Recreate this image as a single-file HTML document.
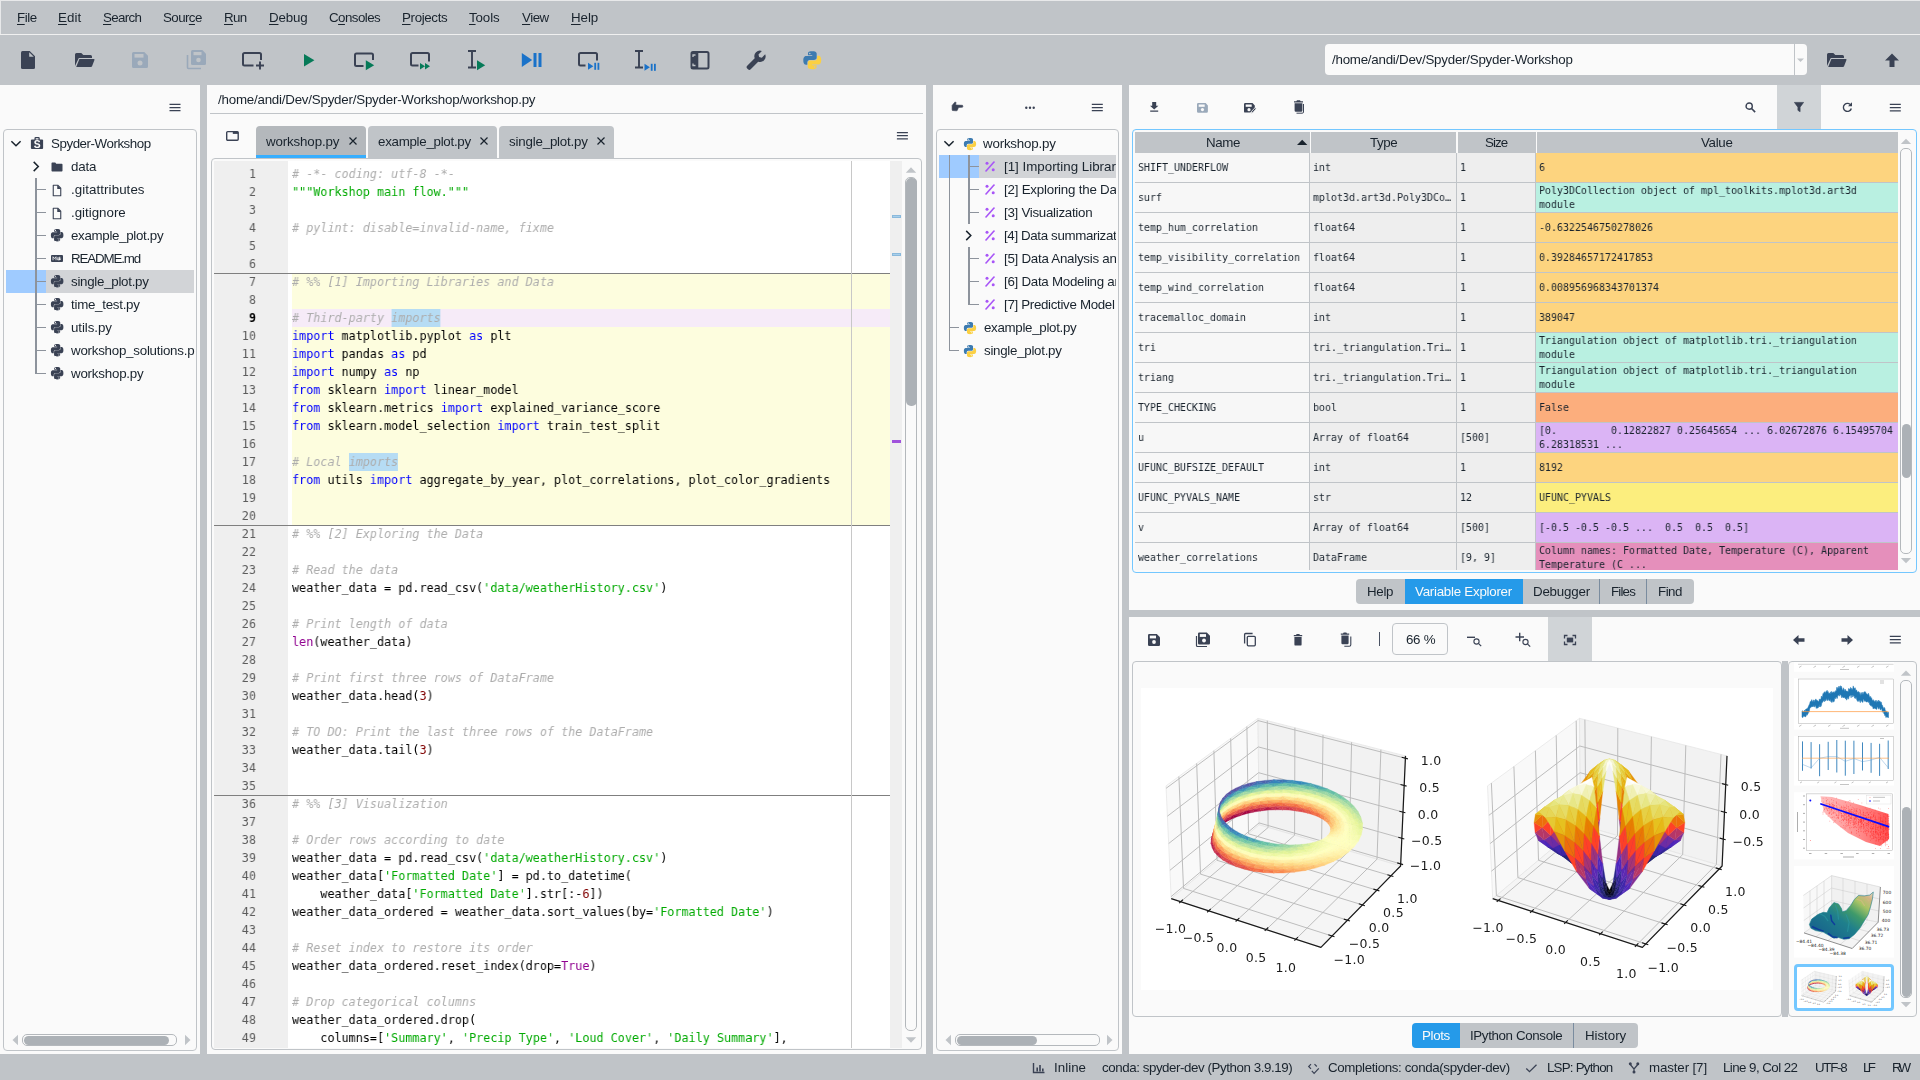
<!DOCTYPE html>
<html lang="en"><head><meta charset="utf-8"><title>Spyder</title>
<style>
html,body{margin:0;padding:0;}
body{width:1920px;height:1080px;overflow:hidden;background:#c0c4c8;font-family:"Liberation Sans","DejaVu Sans",sans-serif;font-size:13.33px;letter-spacing:-0.3px;color:#19232d;}
#app{position:relative;width:1920px;height:1080px;overflow:hidden;background:#c0c4c8;}
.a{position:absolute;}
.pane{position:absolute;background:#fafafa;}
.box{position:absolute;border:1px solid #c0c4c8;border-radius:4px;box-sizing:border-box;background:#fafafa;}
.t{position:absolute;white-space:pre;line-height:16px;height:16px;will-change:transform;}
svg{position:absolute;overflow:visible;}
.mono{font-family:"DejaVu Sans Mono","Liberation Mono",monospace;}
u{text-decoration:underline;text-underline-offset:2px;text-decoration-thickness:1px;}
.code{will-change:transform;font-size:13px;line-height:18px;white-space:pre;color:#000;transform:scaleX(0.9047);transform-origin:0 0;}
.code div{height:18px;}
.lnum{will-change:transform;font-size:13px;line-height:18px;text-align:right;color:#5c5c5c;transform:scaleX(0.9047);transform-origin:100% 0;}
.lnum div{height:18px;}
.c{color:#adadad;font-style:italic;}
.ch{color:#adadad;font-style:italic;background:#b6dcf4;}
.s{color:#00aa00;}
.k{color:#0000ff;}
.b{color:#900090;}
.m{color:#800000;}
.vx{font-size:11px;line-height:16px;transform:scaleX(0.906);transform-origin:0 0;color:#19232d;}
.mono,svg{letter-spacing:0;}
.ch{display:inline-block;height:18px;}

</style></head>
<body>
<div id="app">
<!-- chrome -->
<div class="a" style="left:0px;top:0px;width:1920px;height:1px;background:#e8e9ea;"></div>
<div class="a" style="left:0px;top:0px;width:1px;height:34px;background:#e8e9ea;"></div>
<div class="a" style="left:0px;top:34px;width:1920px;height:1px;background:#f0f0f0;"></div>
<div class="pane" style="left:0;top:85px;width:200px;height:969px"></div>
<div class="pane" style="left:207px;top:85px;width:719px;height:969px"></div>
<div class="pane" style="left:933px;top:85px;width:189px;height:969px"></div>
<div class="pane" style="left:1129px;top:85px;width:791px;height:525px"></div>
<div class="pane" style="left:1129px;top:617px;width:791px;height:437px"></div>
<div class="t" style="left:16.55px;top:9.6px;letter-spacing:-0.428px;"><u>F</u>ile</div>
<div class="t" style="left:58.30px;top:9.6px;letter-spacing:0.077px;"><u>E</u>dit</div>
<div class="t" style="left:103.30px;top:9.6px;letter-spacing:-0.687px;"><u>S</u>earch</div>
<div class="t" style="left:163.40px;top:9.6px;letter-spacing:-0.577px;">Sour<u>c</u>e</div>
<div class="t" style="left:224.30px;top:9.6px;letter-spacing:-0.627px;"><u>R</u>un</div>
<div class="t" style="left:269.30px;top:9.6px;letter-spacing:-0.145px;"><u>D</u>ebug</div>
<div class="t" style="left:329.30px;top:9.6px;letter-spacing:-0.554px;">C<u>o</u>nsoles</div>
<div class="t" style="left:402.30px;top:9.6px;letter-spacing:-0.351px;"><u>P</u>rojects</div>
<div class="t" style="left:469.30px;top:9.6px;letter-spacing:-0.106px;"><u>T</u>ools</div>
<div class="t" style="left:521.80px;top:9.6px;letter-spacing:-0.485px;"><u>V</u>iew</div>
<div class="t" style="left:571.30px;top:9.6px;letter-spacing:-0.074px;"><u>H</u>elp</div>
<!-- toolbar -->
<svg style="left:16px;top:48px;" width="24" height="24" viewBox="0 0 24 24"><path d="M6.500 3h7.200L19 8.300V19.500a1.500 1.500 0 01-1.500 1.500h-11A1.500 1.500 0 015 19.500v-15A1.500 1.500 0 016.500 3z" fill="#3a4254"/><path d="M13.200 4.200v4.600h4.600z" fill="#c0c4c8"/></svg>
<svg style="left:72px;top:48px;" width="24" height="24" viewBox="0 0 24 24"><path d="M3 6.500A1.500 1.500 0 014.500 5h4.800l2 2h7.200A1.500 1.500 0 0120 8.500V10H6.800L3 18z" fill="#3a4254"/><path d="M7.400 11h14.300a.8.800 0 01.75 1.100l-2.400 6.200a1.200 1.200 0 01-1.100.7H4.200z" fill="#3a4254"/></svg>
<svg style="left:128px;top:48px;" width="24" height="24" viewBox="0 0 24 24"><path d="M5.500 4h10.800L20 7.700V18.500a1.500 1.500 0 01-1.500 1.500h-13A1.500 1.500 0 014 18.500v-13A1.500 1.500 0 015.500 4z" fill="#9aa9ba"/><rect x="6.500" y="6" width="9" height="3.600" fill="#c0c4c8"/><circle cx="12" cy="15" r="2.500" fill="#c0c4c8"/></svg>
<svg style="left:184px;top:48px;" width="24" height="24" viewBox="0 0 24 24"><path d="M8.500 2h9.800L22 5.700V15.500a1.500 1.500 0 01-1.500 1.500h-12A1.500 1.500 0 017 15.500v-12A1.500 1.500 0 018.500 2z" fill="#9aa9ba"/><rect x="9.500" y="4" width="8" height="3.200" fill="#c0c4c8"/><circle cx="14.500" cy="12" r="2.300" fill="#c0c4c8"/><path d="M3.500 7v12.500a1 1 0 001 1H17" fill="none" stroke="#9aa9ba" stroke-width="1.600"/></svg>
<svg style="left:240px;top:48px;" width="24" height="24" viewBox="0 0 24 24"><path d="M13.500 17.500H4.500a1.500 1.500 0 01-1.500-1.500V6.500A1.500 1.500 0 014.500 5h15A1.500 1.500 0 0121 6.500V12" fill="none" stroke="#3a4254" stroke-width="2"/><path d="M20 13.500v8M16 17.500h8" stroke="#3a4254" stroke-width="1.900"/></svg>
<svg style="left:296px;top:48px;" width="24" height="24" viewBox="0 0 24 24"><path d="M8 6v12.400l10.400-6.200z" fill="#067a58"/></svg>
<svg style="left:352px;top:48px;" width="24" height="24" viewBox="0 0 24 24"><path d="M11.500 18H4.500A1.500 1.500 0 013 16.500V7A1.500 1.500 0 014.500 5.500h15A1.500 1.500 0 0121 7v5" fill="none" stroke="#3a4254" stroke-width="2"/><path d="M13.800 12.200v10l8.400-5z" fill="#067a58"/></svg>
<svg style="left:408px;top:48px;" width="24" height="24" viewBox="0 0 24 24"><path d="M10.500 17.500H4.500A1.500 1.500 0 013 16V6.500A1.500 1.500 0 014.500 5h15A1.500 1.500 0 0121 6.500v7" fill="none" stroke="#3a4254" stroke-width="2"/><path d="M12 15v6.600l5-3.300zM17 15v6.600l5-3.300z" fill="#067a58"/></svg>
<svg style="left:464px;top:48px;" width="24" height="24" viewBox="0 0 24 24"><path d="M4 3h8M4 19.500h8M8 3v16.500" stroke="#3a4254" stroke-width="1.900" fill="none"/><path d="M13 12.200v10l8.200-5z" fill="#067a58"/></svg>
<svg style="left:520px;top:48px;" width="24" height="24" viewBox="0 0 24 24"><path d="M1.800 5v14l10.400-7z" fill="#1a72c9"/><rect x="13.500" y="5" width="3" height="14" fill="#1a72c9"/><rect x="18.500" y="5" width="3" height="14" fill="#1a72c9"/></svg>
<svg style="left:576px;top:48px;" width="24" height="24" viewBox="0 0 24 24"><path d="M9.500 17.500H4.500A1.500 1.500 0 013 16V6.500A1.500 1.500 0 014.500 5h15A1.500 1.500 0 0121 6.500v6" fill="none" stroke="#3a4254" stroke-width="2"/><path d="M12 14.800v7l5.400-3.500z" fill="#1a72c9"/><rect x="18.300" y="14.800" width="1.800" height="7" fill="#1a72c9"/><rect x="21.500" y="14.800" width="1.800" height="7" fill="#1a72c9"/></svg>
<svg style="left:632px;top:48px;" width="24" height="24" viewBox="0 0 24 24"><path d="M3 3h8M3 19.500h8M7 3v16.500" stroke="#3a4254" stroke-width="1.900" fill="none"/><path d="M12.500 15.800v7l5.400-3.500z" fill="#1a72c9"/><rect x="18.800" y="15.800" width="1.800" height="7" fill="#1a72c9"/><rect x="22" y="15.800" width="1.800" height="7" fill="#1a72c9"/></svg>
<svg style="left:688px;top:48px;" width="24" height="24" viewBox="0 0 24 24"><rect x="3.500" y="4" width="17" height="16.500" rx="1.500" fill="none" stroke="#3a4254" stroke-width="2"/><path d="M3.500 4h6.800v16.500H3.500z" fill="#3a4254"/><path d="M5 9V7h2.500M5 15.500v2h2.500" stroke="#c0c4c8" stroke-width="1.300" fill="none"/></svg>
<svg style="left:744px;top:48px;" width="24" height="24" viewBox="0 0 24 24"><path d="M21.200 6.300l-3.400 3.400-2.700-.6-.6-2.700 3.400-3.400a5.600 5.600 0 00-7.200 7.200L3.200 17.700a1.900 1.900 0 000 2.700l.8.800a1.900 1.900 0 002.700 0l7.500-7.500a5.600 5.600 0 007-7.400z" fill="#3a4254"/></svg>
<svg style="left:801.75px;top:49.75px;" width="20.5" height="20.5" viewBox="0 0 24 24"><path d="M11.9 1.500c-5.200 0-4.900 2.300-4.900 2.300v2.400h5v.8H5s-3.500-.4-3.500 5 3 5.200 3 5.200h1.800v-2.500s-.1-3 3-3h5s2.900 0 2.900-2.800V4.300S17.700 1.500 11.900 1.500zM9.100 3.100a.9.900 0 110 1.800.9.900 0 010-1.800z" fill="#3d7bb0" fill-rule="evenodd"/><path d="M12.100 22.500c5.200 0 4.900-2.300 4.900-2.300v-2.400h-5v-.8h7s3.500.4 3.500-5-3-5.200-3-5.200h-1.800v2.500s.1 3-3 3h-5s-2.900 0-2.900 2.800v4.600s-.5 2.800 5.300 2.800zm2.800-1.600a.9.900 0 110-1.800.9.900 0 010 1.800z" fill="#fbd043" fill-rule="evenodd"/></svg>
<div class="a" style="left:1325px;top:44px;width:482px;height:31px;background:#fafafa;border-radius:4px"></div>
<div class="a" style="left:1794px;top:44px;width:1px;height:31px;background:#c0c4c8;"></div>
<svg style="left:0px;top:0px;" width="1" height="1" viewBox="0 0 1 1"><path d="M1797 58.500h7l-3.500 3.500z" fill="#c0c4c8"/></svg>
<div class="t" style="left:1331.50px;top:51.6px;letter-spacing:-0.239px;">/home/andi/Dev/Spyder/Spyder-Workshop</div>
<svg style="left:1824px;top:48px;" width="24" height="24" viewBox="0 0 24 24"><path d="M3 6.500A1.500 1.500 0 014.500 5h4.800l2 2h7.200A1.500 1.500 0 0120 8.500V10H6.800L3 18z" fill="#3a4254"/><path d="M7.400 11h14.300a.8.800 0 01.75 1.100l-2.400 6.200a1.200 1.200 0 01-1.100.7H4.200z" fill="#3a4254"/></svg>
<svg style="left:0px;top:0px;" width="1" height="1" viewBox="0 0 1 1"><path d="M1892 53.500l7 7h-4.500v6.500h-5v-6.500h-4.500z" fill="#3a4254"/></svg>
<!-- project -->
<svg style="left:0px;top:0px;" width="1" height="1" viewBox="0 0 1 1"><path d="M169.5 104.3h11M169.5 107.5h11M169.5 110.7h11" stroke="#3a4254" stroke-width="1.25" fill="none"/></svg>
<div class="box" style="left:3px;top:129px;width:194px;height:922px"></div>
<div class="a" style="left:6px;top:270px;width:40px;height:23px;background:#9fcbff;"></div>
<div class="a" style="left:46px;top:270px;width:148px;height:23px;background:#d2d4d7;"></div>
<div class="a" style="left:35.3px;top:178px;width:1.4px;height:196px;background:#8d939c;"></div>
<svg style="left:0px;top:0px;" width="1" height="1" viewBox="0 0 1 1"><path d="M11.4 141.2L16 145.8L20.6 141.2" stroke="#19232d" stroke-width="1.5" fill="none"/></svg>
<svg style="left:0px;top:0px;" width="1" height="1" viewBox="0 0 1 1"><rect x="30.900" y="139.500" width="12.200" height="9.600" rx="1" fill="#3a4254"/><rect x="35.100" y="137.700" width="4" height="3" rx=".6" fill="none" stroke="#3a4254" stroke-width="1.300"/><text x="37.100" y="148" font-size="10.300" font-weight="bold" text-anchor="middle" fill="#fafafa" font-family="Liberation Sans,sans-serif">S</text></svg>
<div class="t" style="left:50.70px;top:135.8px;letter-spacing:-0.446px;">Spyder-Workshop</div>
<svg style="left:0px;top:0px;" width="1" height="1" viewBox="0 0 1 1"><path d="M33.7 161.9L38.3 166.5L33.7 171.1" stroke="#19232d" stroke-width="1.5" fill="none"/></svg>
<svg style="left:51px;top:160.5px;" width="12" height="12" viewBox="0 0 24 24"><path d="M1 4.500C1 3.700 1.700 3 2.500 3h6l2 2.500h11c.8 0 1.500.700 1.500 1.500v12.500c0 .800-.7 1.500-1.500 1.500h-19C1.700 21 1 20.300 1 19.500z" fill="#3a4254"/></svg>
<div class="t" style="left:70.70px;top:158.8px;letter-spacing:-0.184px;">data</div>
<div class="a" style="left:36px;top:188.8px;width:10px;height:1.4px;background:#8d939c;"></div>
<svg style="left:52px;top:183.5px;" width="10" height="13" viewBox="0 0 20 24"><path d="M2.500 1.500h9l6 6v15h-15z" fill="none" stroke="#3a4254" stroke-width="2.200" stroke-linejoin="round"/><path d="M10.500 1.500v7.500h7.500z" fill="#3a4254"/></svg>
<div class="t" style="left:70.70px;top:181.8px;letter-spacing:0.072px;">.gitattributes</div>
<div class="a" style="left:36px;top:211.8px;width:10px;height:1.4px;background:#8d939c;"></div>
<svg style="left:52px;top:206.5px;" width="10" height="13" viewBox="0 0 20 24"><path d="M2.500 1.500h9l6 6v15h-15z" fill="none" stroke="#3a4254" stroke-width="2.200" stroke-linejoin="round"/><path d="M10.500 1.500v7.500h7.500z" fill="#3a4254"/></svg>
<div class="t" style="left:70.70px;top:204.8px;letter-spacing:-0.005px;">.gitignore</div>
<div class="a" style="left:36px;top:234.8px;width:10px;height:1.4px;background:#8d939c;"></div>
<svg style="left:49.85px;top:228.35px;" width="14.3" height="14.3" viewBox="0 0 24 24"><path d="M11.9 1.5c-5.2 0-4.9 2.3-4.9 2.3v2.4h5v.8H5s-3.5-.4-3.5 5 3 5.200 3 5.200h1.800v-2.500s-.1-3 3-3h5s2.900 0 2.900-2.800V4.300S17.700 1.500 11.900 1.500zM9.100 3.100a.900.900 0 110 1.800.900.900 0 010-1.800zM12.100 22.500c5.200 0 4.900-2.300 4.900-2.300v-2.400h-5v-.8h7s3.500.4 3.500-5-3-5.200-3-5.200h-1.800v2.500s.1 3-3 3h-5s-2.900 0-2.900 2.800v4.600s-.5 2.800 5.300 2.800zm2.800-1.600a.900.900 0 110-1.800.900.900 0 010 1.800z" fill="#3a4254" fill-rule="evenodd"/></svg>
<div class="t" style="left:70.70px;top:227.8px;letter-spacing:-0.319px;">example_plot.py</div>
<div class="a" style="left:36px;top:257.8px;width:10px;height:1.4px;background:#8d939c;"></div>
<svg style="left:51px;top:255.0px;" width="12" height="7" viewBox="0 0 24 14"><rect x="0" y="0" width="24" height="14" rx="2" fill="#3a4254"/><path d="M4 10.500v-7l3 3.500 3-3.500v7M14 4v4M12 7l2.500 3.500L17 7M18.500 4" stroke="#fafafa" stroke-width="1.600" fill="none"/><path d="M16.500 3.500v4h-2l3 3.500 3-3.500h-2v-4z" fill="#fafafa"/></svg>
<div class="t" style="left:70.70px;top:250.8px;letter-spacing:-1.144px;">README.md</div>
<div class="a" style="left:36px;top:280.8px;width:10px;height:1.4px;background:#8d939c;"></div>
<svg style="left:49.85px;top:274.35px;" width="14.3" height="14.3" viewBox="0 0 24 24"><path d="M11.9 1.5c-5.2 0-4.9 2.3-4.9 2.3v2.4h5v.8H5s-3.5-.4-3.5 5 3 5.200 3 5.200h1.800v-2.500s-.1-3 3-3h5s2.900 0 2.900-2.800V4.300S17.700 1.500 11.900 1.500zM9.100 3.100a.900.900 0 110 1.800.900.900 0 010-1.800zM12.100 22.500c5.200 0 4.900-2.300 4.900-2.300v-2.400h-5v-.8h7s3.500.4 3.500-5-3-5.200-3-5.200h-1.800v2.500s.1 3-3 3h-5s-2.900 0-2.900 2.800v4.600s-.5 2.800 5.300 2.800zm2.800-1.600a.900.900 0 110-1.800.900.900 0 010 1.800z" fill="#3a4254" fill-rule="evenodd"/></svg>
<div class="t" style="left:70.70px;top:273.8px;letter-spacing:-0.278px;">single_plot.py</div>
<div class="a" style="left:36px;top:303.8px;width:10px;height:1.4px;background:#8d939c;"></div>
<svg style="left:49.85px;top:297.35px;" width="14.3" height="14.3" viewBox="0 0 24 24"><path d="M11.9 1.5c-5.2 0-4.9 2.3-4.9 2.3v2.4h5v.8H5s-3.5-.4-3.5 5 3 5.200 3 5.200h1.800v-2.500s-.1-3 3-3h5s2.900 0 2.900-2.800V4.300S17.700 1.500 11.900 1.500zM9.100 3.100a.900.900 0 110 1.800.900.900 0 010-1.800zM12.100 22.500c5.200 0 4.900-2.300 4.900-2.300v-2.400h-5v-.8h7s3.500.4 3.500-5-3-5.200-3-5.200h-1.800v2.500s.1 3-3 3h-5s-2.900 0-2.900 2.800v4.600s-.5 2.800 5.300 2.800zm2.800-1.600a.900.900 0 110-1.800.900.900 0 010 1.800z" fill="#3a4254" fill-rule="evenodd"/></svg>
<div class="t" style="left:70.70px;top:296.8px;letter-spacing:-0.269px;">time_test.py</div>
<div class="a" style="left:36px;top:326.8px;width:10px;height:1.4px;background:#8d939c;"></div>
<svg style="left:49.85px;top:320.35px;" width="14.3" height="14.3" viewBox="0 0 24 24"><path d="M11.9 1.5c-5.2 0-4.9 2.3-4.9 2.3v2.4h5v.8H5s-3.5-.4-3.5 5 3 5.200 3 5.200h1.800v-2.500s-.1-3 3-3h5s2.900 0 2.900-2.800V4.300S17.700 1.500 11.900 1.500zM9.100 3.100a.900.900 0 110 1.800.900.900 0 010-1.800zM12.100 22.500c5.200 0 4.900-2.300 4.900-2.300v-2.400h-5v-.8h7s3.500.4 3.500-5-3-5.200-3-5.200h-1.800v2.500s.1 3-3 3h-5s-2.900 0-2.900 2.800v4.600s-.5 2.800 5.300 2.800zm2.800-1.600a.900.900 0 110-1.800.900.900 0 010 1.800z" fill="#3a4254" fill-rule="evenodd"/></svg>
<div class="t" style="left:70.70px;top:319.8px;letter-spacing:-0.083px;">utils.py</div>
<div class="a" style="left:36px;top:349.8px;width:10px;height:1.4px;background:#8d939c;"></div>
<svg style="left:49.85px;top:343.35px;" width="14.3" height="14.3" viewBox="0 0 24 24"><path d="M11.9 1.5c-5.2 0-4.9 2.3-4.9 2.3v2.4h5v.8H5s-3.5-.4-3.5 5 3 5.200 3 5.200h1.800v-2.500s-.1-3 3-3h5s2.900 0 2.900-2.800V4.300S17.700 1.500 11.900 1.500zM9.100 3.100a.900.900 0 110 1.800.900.900 0 010-1.800zM12.100 22.500c5.200 0 4.900-2.300 4.900-2.300v-2.400h-5v-.8h7s3.500.4 3.500-5-3-5.200-3-5.200h-1.800v2.500s.1 3-3 3h-5s-2.900 0-2.900 2.800v4.600s-.5 2.800 5.300 2.800zm2.800-1.600a.900.900 0 110-1.800.900.900 0 010 1.800z" fill="#3a4254" fill-rule="evenodd"/></svg>
<div class="t" style="left:70.70px;top:342.8px;letter-spacing:-0.241px;">workshop_solutions.p</div>
<div class="a" style="left:36px;top:372.8px;width:10px;height:1.4px;background:#8d939c;"></div>
<svg style="left:49.85px;top:366.35px;" width="14.3" height="14.3" viewBox="0 0 24 24"><path d="M11.9 1.5c-5.2 0-4.9 2.3-4.9 2.3v2.4h5v.8H5s-3.5-.4-3.5 5 3 5.200 3 5.200h1.800v-2.500s-.1-3 3-3h5s2.900 0 2.900-2.800V4.300S17.700 1.500 11.900 1.500zM9.100 3.100a.900.900 0 110 1.800.900.900 0 010-1.800zM12.100 22.500c5.200 0 4.900-2.300 4.900-2.300v-2.400h-5v-.8h7s3.500.4 3.500-5-3-5.200-3-5.200h-1.800v2.500s.1 3-3 3h-5s-2.900 0-2.900 2.800v4.600s-.5 2.800 5.300 2.800zm2.800-1.600a.900.900 0 110-1.800.900.900 0 010 1.800z" fill="#3a4254" fill-rule="evenodd"/></svg>
<div class="t" style="left:70.70px;top:365.8px;letter-spacing:-0.213px;">workshop.py</div>
<svg style="left:0px;top:0px;" width="1" height="1" viewBox="0 0 1 1"><path d="M12.500 1040l5.500-5.200v10.400z" fill="#c0c4c8"/><path d="M190.500 1040l-5.500-5.200v10.400z" fill="#c0c4c8"/></svg>
<div class="a" style="left:22px;top:1034px;width:155px;height:12px;border:1px solid #b4b8bc;border-radius:5px;box-sizing:border-box;background:#fafafa"></div>
<div class="a" style="left:23.500px;top:1035.500px;width:145px;height:9px;border-radius:4.500px;background:#acb1b6"></div>
<!-- editor -->
<div class="t" style="left:218.36px;top:92px;letter-spacing:-0.217px;">/home/andi/Dev/Spyder/Spyder-Workshop/workshop.py</div>
<div class="a" style="left:210px;top:113px;width:713px;height:1px;background:#c0c4c8;"></div>
<svg style="left:225px;top:130px;" width="14" height="12" viewBox="0 0 14 12"><rect x="1.700" y="1.600" width="11.500" height="8.700" rx="1" fill="none" stroke="#3a4254" stroke-width="1.400"/><rect x="7.800" y="1.600" width="5.400" height="2.300" fill="#3a4254"/></svg>
<div class="a" style="left:256px;top:126px;width:110px;height:32px;background:#b4b8bc;border-radius:4px 4px 0 0"></div>
<div class="a" style="left:256px;top:155px;width:110px;height:3px;background:#37aefe;"></div>
<div class="t" style="left:266.20px;top:133.5px;letter-spacing:-0.143px;">workshop.py</div>
<svg style="left:0px;top:0px;" width="1" height="1" viewBox="0 0 1 1"><path d="M349.5 137.5l7 7M356.5 137.5l-7 7" stroke="#19232d" stroke-width="1.200" fill="none"/></svg>
<div class="a" style="left:368px;top:126px;width:129px;height:32px;background:#c0c4c8;border-radius:4px 4px 0 0"></div>
<div class="t" style="left:377.70px;top:133.5px;letter-spacing:-0.283px;">example_plot.py</div>
<svg style="left:0px;top:0px;" width="1" height="1" viewBox="0 0 1 1"><path d="M480.5 137.5l7 7M487.5 137.5l-7 7" stroke="#19232d" stroke-width="1.200" fill="none"/></svg>
<div class="a" style="left:499px;top:126px;width:115px;height:32px;background:#c0c4c8;border-radius:4px 4px 0 0"></div>
<div class="t" style="left:508.80px;top:133.5px;letter-spacing:-0.194px;">single_plot.py</div>
<svg style="left:0px;top:0px;" width="1" height="1" viewBox="0 0 1 1"><path d="M597.5 137.5l7 7M604.5 137.5l-7 7" stroke="#19232d" stroke-width="1.200" fill="none"/></svg>
<svg style="left:0px;top:0px;" width="1" height="1" viewBox="0 0 1 1"><path d="M896.9 132.5h11M896.9 135.7h11M896.9 138.89999999999998h11" stroke="#3a4254" stroke-width="1.25" fill="none"/></svg>
<div class="box" style="left:211px;top:158px;width:711px;height:892px"></div>
<div class="a" style="left:214px;top:161px;width:74px;height:887px;background:#efefef;"></div>
<div class="a" style="left:288px;top:161px;width:602px;height:887px;background:#ffffff;"></div>
<div class="a" style="left:890px;top:161px;width:12px;height:887px;background:#efefef;"></div>
<div class="a" style="left:292px;top:273px;width:598px;height:252px;background:#fdfdde;"></div>
<div class="a" style="left:292px;top:309px;width:598px;height:18px;background:#f6ebf8;"></div>
<div class="a" style="left:214px;top:273px;width:676px;height:1px;background:#7f7f7f;"></div>
<div class="a" style="left:214px;top:525px;width:676px;height:1px;background:#7f7f7f;"></div>
<div class="a" style="left:214px;top:795px;width:676px;height:1px;background:#7f7f7f;"></div>
<div class="a" style="left:851px;top:161px;width:1px;height:887px;background:#c8c8c8;"></div>
<div class="a" style="left:892px;top:215px;width:9px;height:3px;background:#a9cfea;box-sizing:border-box;border:0.500px solid #8ab9dc"></div>
<div class="a" style="left:892px;top:253px;width:9px;height:3px;background:#a9cfea;box-sizing:border-box;border:0.500px solid #8ab9dc"></div>
<div class="a" style="left:892px;top:440px;width:9px;height:3px;background:#a052dc;"></div>
<svg style="left:0px;top:0px;" width="1" height="1" viewBox="0 0 1 1"><path d="M911 167.200l5.200 5.500h-10.400z" fill="#c0c4c8"/><path d="M911 1042.800l5.200-5.500h-10.400z" fill="#c0c4c8"/></svg>
<div class="a" style="left:905px;top:177px;width:12px;height:854px;border:1px solid #b4b8bc;border-radius:5px;box-sizing:border-box;background:#fafafa"></div>
<div class="a" style="left:905.500px;top:177.500px;width:11px;height:228px;border-radius:5px;background:#acb1b6"></div>
<div class="a mono lnum" style="left:214px;top:165px;width:42px;"><div>1</div><div>2</div><div>3</div><div>4</div><div>5</div><div>6</div><div>7</div><div>8</div><div style="color:#000;font-weight:bold">9</div><div>10</div><div>11</div><div>12</div><div>13</div><div>14</div><div>15</div><div>16</div><div>17</div><div>18</div><div>19</div><div>20</div><div>21</div><div>22</div><div>23</div><div>24</div><div>25</div><div>26</div><div>27</div><div>28</div><div>29</div><div>30</div><div>31</div><div>32</div><div>33</div><div>34</div><div>35</div><div>36</div><div>37</div><div>38</div><div>39</div><div>40</div><div>41</div><div>42</div><div>43</div><div>44</div><div>45</div><div>46</div><div>47</div><div>48</div><div>49</div></div>
<div class="a mono code" style="left:292px;top:165px;"><div><span class="c"># -*- coding: utf-8 -*-</span></div><div><span class="s">"""Workshop main flow."""</span></div><div></div><div><span class="c"># pylint: disable=invalid-name, fixme</span></div><div></div><div></div><div><span class="c"># %% [1] Importing Libraries and Data</span></div><div></div><div><span class="c"># Third-party </span><span class="ch">imports</span></div><div><span class="k">import</span> matplotlib.pyplot <span class="k">as</span> plt</div><div><span class="k">import</span> pandas <span class="k">as</span> pd</div><div><span class="k">import</span> numpy <span class="k">as</span> np</div><div><span class="k">from</span> sklearn <span class="k">import</span> linear_model</div><div><span class="k">from</span> sklearn.metrics <span class="k">import</span> explained_variance_score</div><div><span class="k">from</span> sklearn.model_selection <span class="k">import</span> train_test_split</div><div></div><div><span class="c"># Local </span><span class="ch">imports</span></div><div><span class="k">from</span> utils <span class="k">import</span> aggregate_by_year, plot_correlations, plot_color_gradients</div><div></div><div></div><div><span class="c"># %% [2] Exploring the Data</span></div><div></div><div><span class="c"># Read the data</span></div><div>weather_data = pd.read_csv(<span class="s">'data/weatherHistory.csv'</span>)</div><div></div><div><span class="c"># Print length of data</span></div><div><span class="b">len</span>(weather_data)</div><div></div><div><span class="c"># Print first three rows of DataFrame</span></div><div>weather_data.head(<span class="m">3</span>)</div><div></div><div><span class="c"># TO DO: Print the last three rows of the DataFrame</span></div><div>weather_data.tail(<span class="m">3</span>)</div><div></div><div></div><div><span class="c"># %% [3] Visualization</span></div><div></div><div><span class="c"># Order rows according to date</span></div><div>weather_data = pd.read_csv(<span class="s">'data/weatherHistory.csv'</span>)</div><div>weather_data[<span class="s">'Formatted Date'</span>] = pd.to_datetime(</div><div>    weather_data[<span class="s">'Formatted Date'</span>].str[:-<span class="m">6</span>])</div><div>weather_data_ordered = weather_data.sort_values(by=<span class="s">'Formatted Date'</span>)</div><div></div><div><span class="c"># Reset index to restore its order</span></div><div>weather_data_ordered.reset_index(drop=<span class="b">True</span>)</div><div></div><div><span class="c"># Drop categorical columns</span></div><div>weather_data_ordered.drop(</div><div>    columns=[<span class="s">'Summary'</span>, <span class="s">'Precip Type'</span>, <span class="s">'Loud Cover'</span>, <span class="s">'Daily Summary'</span>],</div></div>
<!-- outline -->
<svg style="left:0px;top:0px;" width="1" height="1" viewBox="0 0 1 1"><polygon points="955.3,101.9 956.0,102.6 955.7,105.0 962.5,105.3 962.9,106.3 962.5,107.2 958.5,107.4 957.2,110.5 956.2,110.8 952.4,110.5 952.1,109.5 952.1,105.4 954.8,102.2" fill="#3a4254" stroke="#3a4254" stroke-width="0.6" stroke-linejoin="round"/></svg>
<svg style="left:0px;top:0px;" width="1" height="1" viewBox="0 0 1 1"><circle cx="1026.300" cy="107.700" r="1.200" fill="#3a4254"/><circle cx="1030" cy="107.700" r="1.200" fill="#3a4254"/><circle cx="1033.700" cy="107.700" r="1.200" fill="#3a4254"/></svg>
<svg style="left:0px;top:0px;" width="1" height="1" viewBox="0 0 1 1"><path d="M1091.8 104.3h11M1091.8 107.5h11M1091.8 110.7h11" stroke="#3a4254" stroke-width="1.25" fill="none"/></svg>
<div class="box" style="left:936px;top:129px;width:183px;height:922px"></div>
<div class="a" style="left:939px;top:155px;width:40px;height:23px;background:#9fcbff;"></div>
<div class="a" style="left:979px;top:155px;width:137px;height:23px;background:#d2d4d7;"></div>
<div class="a" style="left:948.5px;top:155px;width:1.4px;height:196px;background:#8d939c;"></div>
<div class="a" style="left:968.3px;top:155px;width:1.4px;height:69px;background:#8d939c;"></div>
<div class="a" style="left:968.3px;top:247px;width:1.4px;height:58px;background:#8d939c;"></div>
<svg style="left:0px;top:0px;" width="1" height="1" viewBox="0 0 1 1"><path d="M944.4 141.2L949 145.8L953.6 141.2" stroke="#19232d" stroke-width="1.5" fill="none"/></svg>
<svg style="left:963.0px;top:136.5px;" width="14" height="14" viewBox="0 0 24 24"><path d="M11.9 1.500c-5.200 0-4.900 2.300-4.900 2.300v2.400h5v.8H5s-3.500-.4-3.500 5 3 5.200 3 5.200h1.800v-2.500s-.1-3 3-3h5s2.900 0 2.900-2.800V4.300S17.700 1.500 11.900 1.500zM9.100 3.100a.9.900 0 110 1.800.9.900 0 010-1.800z" fill="#3d7bb0" fill-rule="evenodd"/><path d="M12.100 22.500c5.200 0 4.900-2.300 4.900-2.300v-2.400h-5v-.8h7s3.500.4 3.500-5-3-5.200-3-5.200h-1.800v2.500s.1 3-3 3h-5s-2.900 0-2.900 2.800v4.600s-.5 2.800 5.300 2.800zm2.800-1.600a.9.900 0 110-1.800.9.900 0 010 1.800z" fill="#fbd043" fill-rule="evenodd"/></svg>
<div class="t" style="left:983.30px;top:135.8px;letter-spacing:-0.193px;">workshop.py</div>
<div class="a" style="left:937px;top:130px;width:179px;height:400px;overflow:hidden">
<div class="t" style="left:66.80px;top:28.8px;letter-spacing:0.000px;">[1] Importing Librar</div>
<div class="t" style="left:66.80px;top:51.8px;letter-spacing:-0.218px;">[2] Exploring the Dat</div>
<div class="t" style="left:66.80px;top:74.8px;letter-spacing:-0.282px;">[3] Visualization</div>
<div class="t" style="left:66.80px;top:97.8px;letter-spacing:-0.366px;">[4] Data summarizati</div>
<div class="t" style="left:66.80px;top:120.8px;letter-spacing:-0.260px;">[5] Data Analysis and</div>
<div class="t" style="left:66.80px;top:143.8px;letter-spacing:-0.271px;">[6] Data Modeling an</div>
<div class="t" style="left:66.80px;top:166.8px;letter-spacing:-0.323px;">[7] Predictive Model</div>
</div>
<div class="a" style="left:969px;top:165.8px;width:10px;height:1.4px;background:#8d939c;"></div>
<svg style="left:0px;top:0px;" width="1" height="1" viewBox="0 0 1 1"><path d="M994 162.0L986 171.0" stroke="#a855f7" stroke-width="1.600" fill="none" stroke-linecap="round"/><circle cx="987" cy="163.2" r="1.500" fill="#a855f7"/><circle cx="993.2" cy="169.8" r="1.500" fill="#a855f7"/></svg>
<div class="a" style="left:969px;top:188.8px;width:10px;height:1.4px;background:#8d939c;"></div>
<svg style="left:0px;top:0px;" width="1" height="1" viewBox="0 0 1 1"><path d="M994 185.0L986 194.0" stroke="#a855f7" stroke-width="1.600" fill="none" stroke-linecap="round"/><circle cx="987" cy="186.2" r="1.500" fill="#a855f7"/><circle cx="993.2" cy="192.8" r="1.500" fill="#a855f7"/></svg>
<div class="a" style="left:969px;top:211.8px;width:10px;height:1.4px;background:#8d939c;"></div>
<svg style="left:0px;top:0px;" width="1" height="1" viewBox="0 0 1 1"><path d="M994 208.0L986 217.0" stroke="#a855f7" stroke-width="1.600" fill="none" stroke-linecap="round"/><circle cx="987" cy="209.2" r="1.500" fill="#a855f7"/><circle cx="993.2" cy="215.8" r="1.500" fill="#a855f7"/></svg>
<svg style="left:0px;top:0px;" width="1" height="1" viewBox="0 0 1 1"><path d="M966.2 230.9L970.8 235.5L966.2 240.1" stroke="#19232d" stroke-width="1.5" fill="none"/></svg>
<svg style="left:0px;top:0px;" width="1" height="1" viewBox="0 0 1 1"><path d="M994 231.0L986 240.0" stroke="#a855f7" stroke-width="1.600" fill="none" stroke-linecap="round"/><circle cx="987" cy="232.2" r="1.500" fill="#a855f7"/><circle cx="993.2" cy="238.8" r="1.500" fill="#a855f7"/></svg>
<div class="a" style="left:969px;top:257.8px;width:10px;height:1.4px;background:#8d939c;"></div>
<svg style="left:0px;top:0px;" width="1" height="1" viewBox="0 0 1 1"><path d="M994 254.0L986 263.0" stroke="#a855f7" stroke-width="1.600" fill="none" stroke-linecap="round"/><circle cx="987" cy="255.2" r="1.500" fill="#a855f7"/><circle cx="993.2" cy="261.8" r="1.500" fill="#a855f7"/></svg>
<div class="a" style="left:969px;top:280.8px;width:10px;height:1.4px;background:#8d939c;"></div>
<svg style="left:0px;top:0px;" width="1" height="1" viewBox="0 0 1 1"><path d="M994 277.0L986 286.0" stroke="#a855f7" stroke-width="1.600" fill="none" stroke-linecap="round"/><circle cx="987" cy="278.2" r="1.500" fill="#a855f7"/><circle cx="993.2" cy="284.8" r="1.500" fill="#a855f7"/></svg>
<div class="a" style="left:969px;top:303.8px;width:10px;height:1.4px;background:#8d939c;"></div>
<svg style="left:0px;top:0px;" width="1" height="1" viewBox="0 0 1 1"><path d="M994 300.0L986 309.0" stroke="#a855f7" stroke-width="1.600" fill="none" stroke-linecap="round"/><circle cx="987" cy="301.2" r="1.500" fill="#a855f7"/><circle cx="993.2" cy="307.8" r="1.500" fill="#a855f7"/></svg>
<div class="a" style="left:949px;top:326.8px;width:10px;height:1.4px;background:#8d939c;"></div>
<svg style="left:963.0px;top:320.5px;" width="14" height="14" viewBox="0 0 24 24"><path d="M11.9 1.500c-5.200 0-4.900 2.300-4.900 2.300v2.400h5v.8H5s-3.500-.4-3.500 5 3 5.200 3 5.200h1.800v-2.500s-.1-3 3-3h5s2.900 0 2.900-2.800V4.300S17.700 1.500 11.900 1.500zM9.100 3.100a.9.900 0 110 1.800.9.900 0 010-1.800z" fill="#3d7bb0" fill-rule="evenodd"/><path d="M12.100 22.500c5.200 0 4.900-2.300 4.900-2.300v-2.400h-5v-.8h7s3.500.4 3.500-5-3-5.200-3-5.200h-1.800v2.500s.1 3-3 3h-5s-2.900 0-2.900 2.800v4.600s-.5 2.800 5.300 2.800zm2.800-1.600a.9.900 0 110-1.800.9.900 0 010 1.800z" fill="#fbd043" fill-rule="evenodd"/></svg>
<div class="t" style="left:983.50px;top:319.8px;letter-spacing:-0.312px;">example_plot.py</div>
<div class="a" style="left:949px;top:349.8px;width:10px;height:1.4px;background:#8d939c;"></div>
<svg style="left:963.0px;top:343.5px;" width="14" height="14" viewBox="0 0 24 24"><path d="M11.9 1.500c-5.200 0-4.900 2.300-4.900 2.300v2.400h5v.8H5s-3.500-.4-3.500 5 3 5.200 3 5.200h1.800v-2.500s-.1-3 3-3h5s2.900 0 2.900-2.800V4.300S17.700 1.500 11.900 1.500zM9.100 3.100a.9.900 0 110 1.800.9.900 0 010-1.800z" fill="#3d7bb0" fill-rule="evenodd"/><path d="M12.100 22.500c5.200 0 4.900-2.300 4.900-2.300v-2.400h-5v-.8h7s3.500.4 3.500-5-3-5.200-3-5.200h-1.800v2.500s.1 3-3 3h-5s-2.900 0-2.900 2.800v4.600s-.5 2.800 5.300 2.800zm2.800-1.600a.9.900 0 110-1.800.9.900 0 010 1.800z" fill="#fbd043" fill-rule="evenodd"/></svg>
<div class="t" style="left:983.50px;top:342.8px;letter-spacing:-0.278px;">single_plot.py</div>
<svg style="left:0px;top:0px;" width="1" height="1" viewBox="0 0 1 1"><path d="M945.500 1040l5.500-5.200v10.400z" fill="#c0c4c8"/><path d="M1112.500 1040l-5.500-5.200v10.400z" fill="#c0c4c8"/></svg>
<div class="a" style="left:955px;top:1034px;width:145px;height:12px;border:1px solid #b4b8bc;border-radius:5px;box-sizing:border-box;background:#fafafa"></div>
<div class="a" style="left:956.500px;top:1035.500px;width:80px;height:9px;border-radius:4.500px;background:#acb1b6"></div>
<!-- varexp -->
<svg style="left:1149.7px;top:102.2px;" width="8.4" height="9.8" viewBox="0 0 8.4 9.8"><path d="M2.200 0h4v3.700h2.200L4.200 7.400 0 3.700h2.200zM0.200 8.400h8v1.400h-8z" fill="#3a4254"/></svg>
<svg style="left:1196.6px;top:103.1px;" width="10.9" height="9.7" viewBox="0 0 10.9 9.7"><path d="M1.200 0h7.500L10.9 2.600v5.8999999999999995a1.200 1.200 0 01-1.200 1.200H1.200A1.200 1.200 0 010 8.5V1.200A1.200 1.200 0 011.200 0z" fill="#9aa9ba"/><rect x="1.700" y="1.500" width="6" height="2.300" fill="#fafafa"/><circle cx="5.45" cy="6.6" r="1.600" fill="#fafafa"/></svg>
<svg style="left:1243.8px;top:103.1px;" width="12" height="10.5" viewBox="0 0 12 10.5"><path d="M1.200 0h7.300L10.800 2.400v2.400L6.300 9.600H1.200A1.200 1.200 0 010 8.400V1.200A1.200 1.200 0 011.200 0z" fill="#3a4254"/><rect x="1.700" y="1.500" width="6" height="2.300" fill="#fafafa"/><circle cx="5" cy="6.700" r="1.600" fill="#fafafa"/><path d="M7.300 10.400l.4-2.200 3.400-3.500 1.100 1.100-3.300 3.600z" fill="#3a4254" stroke="#fafafa" stroke-width=".7"/></svg>
<svg style="left:1292.5px;top:100.2px;" width="11" height="13.6" viewBox="0 0 11 13.6"><path d="M1 1.200h2.300l.7-1h3l.7 1h2.300v1.400H1zM1.600 3.300h7.800v7.300a1.200 1.200 0 01-1.200 1.200H2.800a1.200 1.200 0 01-1.200-1.200z" fill="#3a4254"/><path d="M10.500 4v8a1.200 1.200 0 01-1.200 1.200H3.500" fill="none" stroke="#3a4254" stroke-width="1"/></svg>
<svg style="left:1745.3px;top:101.8px;" width="10.8" height="10.5" viewBox="0 0 12.400 12.100"><circle cx="4.800" cy="4.800" r="3.600" fill="none" stroke="#3a4254" stroke-width="1.600"/><path d="M7.500 7.500l4.200 4.200" stroke="#3a4254" stroke-width="1.800"/></svg>
<div class="a" style="left:1777px;top:85px;width:44px;height:44px;background:#d0d4d7;"></div>
<svg style="left:1794px;top:101.9px;" width="10" height="10.4" viewBox="0 0 12 12.500"><path d="M0.500 0.500h11L7.300 6.200v5.500l-2.600-1.700V6.200z" fill="#3a4254" stroke="#3a4254" stroke-width=".8" stroke-linejoin="round"/></svg>
<svg style="left:1841.6px;top:101.9px;" width="10.6" height="9.8" viewBox="0 0 12 11.400"><path d="M10.300 4A4.700 4.700 0 1010.700 7.500" fill="none" stroke="#3a4254" stroke-width="1.600"/><path d="M11.500 0.300v4.700H6.800z" fill="#3a4254"/></svg>
<svg style="left:0px;top:0px;" width="1" height="1" viewBox="0 0 1 1"><path d="M1889.8 104.39999999999999h11M1889.8 107.6h11M1889.8 110.8h11" stroke="#3a4254" stroke-width="1.25" fill="none"/></svg>
<div class="box" style="left:1132px;top:129px;width:785px;height:444px;border-color:#73c7ff"></div>
<div class="a" style="left:1135px;top:132px;width:175px;height:21px;background:#c0c4c8"></div>
<div class="t" style="left:1205.55px;top:134.5px;letter-spacing:-0.404px;">Name</div>
<div class="a" style="left:1311px;top:132px;width:145px;height:21px;background:#c0c4c8"></div>
<div class="t" style="left:1369.80px;top:134.5px;letter-spacing:-0.402px;">Type</div>
<div class="a" style="left:1458px;top:132px;width:78px;height:21px;background:#c0c4c8"></div>
<div class="t" style="left:1485.30px;top:134.5px;letter-spacing:-0.946px;">Size</div>
<div class="a" style="left:1537px;top:132px;width:361px;height:21px;background:#c0c4c8"></div>
<div class="t" style="left:1701.10px;top:134.5px;letter-spacing:-0.327px;">Value</div>
<svg style="left:0px;top:0px;" width="1" height="1" viewBox="0 0 1 1"><path d="M1297 145h10.400l-5.200-5.200z" fill="#19232d"/></svg>
<div class="a" style="left:1135px;top:153px;width:763px;height:417px;overflow:hidden">
<div class="a" style="left:0px;top:0px;width:174px;height:29px;background:#f7f7f7;"></div>
<div class="a" style="left:175px;top:0px;width:146px;height:29px;background:#eeeeee;"></div>
<div class="a" style="left:322px;top:0px;width:78px;height:29px;background:#eeeeee;"></div>
<div class="a" style="left:401px;top:0px;width:362px;height:29px;background:#fdd47f;"></div>
<div class="a" style="left:0px;top:29px;width:763px;height:1px;background:#c0c4c8;"></div>
<div class="t mono vx" style="left:3px;top:7px">SHIFT_UNDERFLOW</div>
<div class="t mono vx" style="left:178px;top:7px">int</div>
<div class="t mono vx" style="left:325px;top:7px">1</div>
<div class="t mono vx" style="left:404px;top:7px">6</div>
<div class="a" style="left:0px;top:30px;width:174px;height:29px;background:#f7f7f7;"></div>
<div class="a" style="left:175px;top:30px;width:146px;height:29px;background:#eeeeee;"></div>
<div class="a" style="left:322px;top:30px;width:78px;height:29px;background:#eeeeee;"></div>
<div class="a" style="left:401px;top:30px;width:362px;height:29px;background:#b9f0e1;"></div>
<div class="a" style="left:0px;top:59px;width:763px;height:1px;background:#c0c4c8;"></div>
<div class="t mono vx" style="left:3px;top:37px">surf</div>
<div class="t mono vx" style="left:178px;top:37px">mplot3d.art3d.Poly3DCo…</div>
<div class="t mono vx" style="left:325px;top:37px">1</div>
<div class="t mono vx" style="left:404px;top:30px">Poly3DCollection object of mpl_toolkits.mplot3d.art3d</div>
<div class="t mono vx" style="left:404px;top:44px">module</div>
<div class="a" style="left:0px;top:60px;width:174px;height:29px;background:#f7f7f7;"></div>
<div class="a" style="left:175px;top:60px;width:146px;height:29px;background:#eeeeee;"></div>
<div class="a" style="left:322px;top:60px;width:78px;height:29px;background:#eeeeee;"></div>
<div class="a" style="left:401px;top:60px;width:362px;height:29px;background:#fdd47f;"></div>
<div class="a" style="left:0px;top:89px;width:763px;height:1px;background:#c0c4c8;"></div>
<div class="t mono vx" style="left:3px;top:67px">temp_hum_correlation</div>
<div class="t mono vx" style="left:178px;top:67px">float64</div>
<div class="t mono vx" style="left:325px;top:67px">1</div>
<div class="t mono vx" style="left:404px;top:67px">-0.6322546750278026</div>
<div class="a" style="left:0px;top:90px;width:174px;height:29px;background:#f7f7f7;"></div>
<div class="a" style="left:175px;top:90px;width:146px;height:29px;background:#eeeeee;"></div>
<div class="a" style="left:322px;top:90px;width:78px;height:29px;background:#eeeeee;"></div>
<div class="a" style="left:401px;top:90px;width:362px;height:29px;background:#fdd47f;"></div>
<div class="a" style="left:0px;top:119px;width:763px;height:1px;background:#c0c4c8;"></div>
<div class="t mono vx" style="left:3px;top:97px">temp_visibility_correlation</div>
<div class="t mono vx" style="left:178px;top:97px">float64</div>
<div class="t mono vx" style="left:325px;top:97px">1</div>
<div class="t mono vx" style="left:404px;top:97px">0.39284657172417853</div>
<div class="a" style="left:0px;top:120px;width:174px;height:29px;background:#f7f7f7;"></div>
<div class="a" style="left:175px;top:120px;width:146px;height:29px;background:#eeeeee;"></div>
<div class="a" style="left:322px;top:120px;width:78px;height:29px;background:#eeeeee;"></div>
<div class="a" style="left:401px;top:120px;width:362px;height:29px;background:#fdd47f;"></div>
<div class="a" style="left:0px;top:149px;width:763px;height:1px;background:#c0c4c8;"></div>
<div class="t mono vx" style="left:3px;top:127px">temp_wind_correlation</div>
<div class="t mono vx" style="left:178px;top:127px">float64</div>
<div class="t mono vx" style="left:325px;top:127px">1</div>
<div class="t mono vx" style="left:404px;top:127px">0.008956968343701374</div>
<div class="a" style="left:0px;top:150px;width:174px;height:29px;background:#f7f7f7;"></div>
<div class="a" style="left:175px;top:150px;width:146px;height:29px;background:#eeeeee;"></div>
<div class="a" style="left:322px;top:150px;width:78px;height:29px;background:#eeeeee;"></div>
<div class="a" style="left:401px;top:150px;width:362px;height:29px;background:#fdd47f;"></div>
<div class="a" style="left:0px;top:179px;width:763px;height:1px;background:#c0c4c8;"></div>
<div class="t mono vx" style="left:3px;top:157px">tracemalloc_domain</div>
<div class="t mono vx" style="left:178px;top:157px">int</div>
<div class="t mono vx" style="left:325px;top:157px">1</div>
<div class="t mono vx" style="left:404px;top:157px">389047</div>
<div class="a" style="left:0px;top:180px;width:174px;height:29px;background:#f7f7f7;"></div>
<div class="a" style="left:175px;top:180px;width:146px;height:29px;background:#eeeeee;"></div>
<div class="a" style="left:322px;top:180px;width:78px;height:29px;background:#eeeeee;"></div>
<div class="a" style="left:401px;top:180px;width:362px;height:29px;background:#b9f0e1;"></div>
<div class="a" style="left:0px;top:209px;width:763px;height:1px;background:#c0c4c8;"></div>
<div class="t mono vx" style="left:3px;top:187px">tri</div>
<div class="t mono vx" style="left:178px;top:187px">tri._triangulation.Tri…</div>
<div class="t mono vx" style="left:325px;top:187px">1</div>
<div class="t mono vx" style="left:404px;top:180px">Triangulation object of matplotlib.tri._triangulation</div>
<div class="t mono vx" style="left:404px;top:194px">module</div>
<div class="a" style="left:0px;top:210px;width:174px;height:29px;background:#f7f7f7;"></div>
<div class="a" style="left:175px;top:210px;width:146px;height:29px;background:#eeeeee;"></div>
<div class="a" style="left:322px;top:210px;width:78px;height:29px;background:#eeeeee;"></div>
<div class="a" style="left:401px;top:210px;width:362px;height:29px;background:#b9f0e1;"></div>
<div class="a" style="left:0px;top:239px;width:763px;height:1px;background:#c0c4c8;"></div>
<div class="t mono vx" style="left:3px;top:217px">triang</div>
<div class="t mono vx" style="left:178px;top:217px">tri._triangulation.Tri…</div>
<div class="t mono vx" style="left:325px;top:217px">1</div>
<div class="t mono vx" style="left:404px;top:210px">Triangulation object of matplotlib.tri._triangulation</div>
<div class="t mono vx" style="left:404px;top:224px">module</div>
<div class="a" style="left:0px;top:240px;width:174px;height:29px;background:#f7f7f7;"></div>
<div class="a" style="left:175px;top:240px;width:146px;height:29px;background:#eeeeee;"></div>
<div class="a" style="left:322px;top:240px;width:78px;height:29px;background:#eeeeee;"></div>
<div class="a" style="left:401px;top:240px;width:362px;height:29px;background:#fcae7d;"></div>
<div class="a" style="left:0px;top:269px;width:763px;height:1px;background:#c0c4c8;"></div>
<div class="t mono vx" style="left:3px;top:247px">TYPE_CHECKING</div>
<div class="t mono vx" style="left:178px;top:247px">bool</div>
<div class="t mono vx" style="left:325px;top:247px">1</div>
<div class="t mono vx" style="left:404px;top:247px">False</div>
<div class="a" style="left:0px;top:270px;width:174px;height:29px;background:#f7f7f7;"></div>
<div class="a" style="left:175px;top:270px;width:146px;height:29px;background:#eeeeee;"></div>
<div class="a" style="left:322px;top:270px;width:78px;height:29px;background:#eeeeee;"></div>
<div class="a" style="left:401px;top:270px;width:362px;height:29px;background:#dbb4f5;"></div>
<div class="a" style="left:0px;top:299px;width:763px;height:1px;background:#c0c4c8;"></div>
<div class="t mono vx" style="left:3px;top:277px">u</div>
<div class="t mono vx" style="left:178px;top:277px">Array of float64</div>
<div class="t mono vx" style="left:325px;top:277px">[500]</div>
<div class="t mono vx" style="left:404px;top:270px">[0.         0.12822827 0.25645654 ... 6.02672876 6.15495704</div>
<div class="t mono vx" style="left:404px;top:284px">6.28318531 ...</div>
<div class="a" style="left:0px;top:300px;width:174px;height:29px;background:#f7f7f7;"></div>
<div class="a" style="left:175px;top:300px;width:146px;height:29px;background:#eeeeee;"></div>
<div class="a" style="left:322px;top:300px;width:78px;height:29px;background:#eeeeee;"></div>
<div class="a" style="left:401px;top:300px;width:362px;height:29px;background:#fdd47f;"></div>
<div class="a" style="left:0px;top:329px;width:763px;height:1px;background:#c0c4c8;"></div>
<div class="t mono vx" style="left:3px;top:307px">UFUNC_BUFSIZE_DEFAULT</div>
<div class="t mono vx" style="left:178px;top:307px">int</div>
<div class="t mono vx" style="left:325px;top:307px">1</div>
<div class="t mono vx" style="left:404px;top:307px">8192</div>
<div class="a" style="left:0px;top:330px;width:174px;height:29px;background:#f7f7f7;"></div>
<div class="a" style="left:175px;top:330px;width:146px;height:29px;background:#eeeeee;"></div>
<div class="a" style="left:322px;top:330px;width:78px;height:29px;background:#eeeeee;"></div>
<div class="a" style="left:401px;top:330px;width:362px;height:29px;background:#fcee7e;"></div>
<div class="a" style="left:0px;top:359px;width:763px;height:1px;background:#c0c4c8;"></div>
<div class="t mono vx" style="left:3px;top:337px">UFUNC_PYVALS_NAME</div>
<div class="t mono vx" style="left:178px;top:337px">str</div>
<div class="t mono vx" style="left:325px;top:337px">12</div>
<div class="t mono vx" style="left:404px;top:337px">UFUNC_PYVALS</div>
<div class="a" style="left:0px;top:360px;width:174px;height:29px;background:#f7f7f7;"></div>
<div class="a" style="left:175px;top:360px;width:146px;height:29px;background:#eeeeee;"></div>
<div class="a" style="left:322px;top:360px;width:78px;height:29px;background:#eeeeee;"></div>
<div class="a" style="left:401px;top:360px;width:362px;height:29px;background:#dbb4f5;"></div>
<div class="a" style="left:0px;top:389px;width:763px;height:1px;background:#c0c4c8;"></div>
<div class="t mono vx" style="left:3px;top:367px">v</div>
<div class="t mono vx" style="left:178px;top:367px">Array of float64</div>
<div class="t mono vx" style="left:325px;top:367px">[500]</div>
<div class="t mono vx" style="left:404px;top:367px">[-0.5 -0.5 -0.5 ...  0.5  0.5  0.5]</div>
<div class="a" style="left:0px;top:390px;width:174px;height:29px;background:#f7f7f7;"></div>
<div class="a" style="left:175px;top:390px;width:146px;height:29px;background:#eeeeee;"></div>
<div class="a" style="left:322px;top:390px;width:78px;height:29px;background:#eeeeee;"></div>
<div class="a" style="left:401px;top:390px;width:362px;height:29px;background:#e58fbb;"></div>
<div class="a" style="left:0px;top:419px;width:763px;height:1px;background:#c0c4c8;"></div>
<div class="t mono vx" style="left:3px;top:397px">weather_correlations</div>
<div class="t mono vx" style="left:178px;top:397px">DataFrame</div>
<div class="t mono vx" style="left:325px;top:397px">[9, 9]</div>
<div class="t mono vx" style="left:404px;top:390px">Column names: Formatted Date, Temperature (C), Apparent</div>
<div class="t mono vx" style="left:404px;top:404px">Temperature (C ...</div>
<div class="a" style="left:174px;top:0px;width:1px;height:420px;background:#c0c4c8;"></div>
<div class="a" style="left:321px;top:0px;width:1px;height:420px;background:#c0c4c8;"></div>
<div class="a" style="left:400px;top:0px;width:1px;height:420px;background:#c0c4c8;"></div>
</div>
<svg style="left:0px;top:0px;" width="1" height="1" viewBox="0 0 1 1"><path d="M1906 138.800l5.200 5.200h-10.400z" fill="#c0c4c8"/><path d="M1906 563.200l5.200-5.200h-10.400z" fill="#c0c4c8"/></svg>
<div class="a" style="left:1900px;top:148px;width:12px;height:406px;border:1px solid #b4b8bc;border-radius:5px;box-sizing:border-box;background:#fafafa"></div>
<div class="a" style="left:1901.500px;top:424px;width:9.500px;height:54px;border-radius:4.500px;background:#acb1b6"></div>
<div class="a" style="left:1356px;top:579px;width:49px;height:25px;background:#c0c4c8;border-radius:4px 0 0 4px"></div>
<div class="t" style="left:1366.90px;top:583.5px;letter-spacing:-0.307px;color:#19232d">Help</div>
<div class="a" style="left:1405px;top:579px;width:118px;height:25px;background:#259ae9;border-radius:0"></div>
<div class="t" style="left:1415.00px;top:583.5px;letter-spacing:-0.253px;color:#fafafa">Variable Explorer</div>
<div class="a" style="left:1523px;top:579px;width:77px;height:25px;background:#c0c4c8;border-radius:0"></div>
<div class="t" style="left:1532.60px;top:583.5px;letter-spacing:-0.207px;color:#19232d">Debugger</div>
<div class="a" style="left:1600px;top:579px;width:47px;height:25px;background:#c0c4c8;border-radius:0"></div>
<div class="t" style="left:1610.80px;top:583.5px;letter-spacing:-0.835px;color:#19232d">Files</div>
<div class="a" style="left:1599px;top:579px;width:1px;height:25px;background:#7a8c9f;"></div>
<div class="a" style="left:1647px;top:579px;width:47px;height:25px;background:#c0c4c8;border-radius:0 4px 4px 0"></div>
<div class="t" style="left:1658.00px;top:583.5px;letter-spacing:-0.512px;color:#19232d">Find</div>
<div class="a" style="left:1646px;top:579px;width:1px;height:25px;background:#7a8c9f;"></div>
<!-- plots -->
<svg style="left:0px;top:0px;" width="1" height="1" viewBox="0 0 1 1"><path d="M1149.2 634h7.600l3.200 3.200v7.600a1.200 1.200 0 01-1.200 1.200h-9.600a1.200 1.200 0 01-1.200-1.200v-9.600a1.200 1.200 0 011.200-1.200z" fill="#3a4254"/><rect x="1149.8" y="635.6" width="6.200" height="2.800" fill="#fafafa"/><circle cx="1154" cy="642" r="1.900" fill="#fafafa"/></svg>
<svg style="left:0px;top:0px;" width="1" height="1" viewBox="0 0 1 1"><path d="M1199.2 632.5h7.600l3.200 3.200v7.600a1.200 1.200 0 01-1.200 1.200h-9.600a1.200 1.200 0 01-1.200-1.200v-9.600a1.200 1.200 0 011.200-1.200z" fill="#3a4254"/><rect x="1199.8" y="634.1" width="6.200" height="2.800" fill="#fafafa"/><circle cx="1204" cy="640.5" r="1.900" fill="#fafafa"/><path d="M1196.500 636v9.500a1 1 0 001 1h9.500" fill="none" stroke="#3a4254" stroke-width="1.200"/></svg>
<svg style="left:0px;top:0px;" width="1" height="1" viewBox="0 0 1 1"><rect x="1247.300" y="636.300" width="8" height="9.500" rx="1" fill="none" stroke="#3a4254" stroke-width="1.300"/><path d="M1244.600 643.500v-9a1 1 0 011-1h7" fill="none" stroke="#3a4254" stroke-width="1.300"/></svg>
<svg style="left:0px;top:0px;" width="1" height="1" viewBox="0 0 1 1"><path d="M1293.8 634.9h2.200l.7-.9h2.600l.7.900h2.200v1.300h-8.400zM1294.3999999999999 637.0h7.200v7.400a1.200 1.200 0 01-1.200 1.200h-4.800a1.200 1.200 0 01-1.200-1.200z" fill="#3a4254"/></svg>
<svg style="left:0px;top:0px;" width="1" height="1" viewBox="0 0 1 1"><path d="M1340.8 633.5h2.200l.7-.9h2.600l.7.900h2.200v1.300h-8.400zM1341.3999999999999 635.6h7.200v7.400a1.200 1.200 0 01-1.200 1.200h-4.800a1.200 1.200 0 01-1.200-1.200z" fill="#3a4254"/><path d="M1350.800 636.500v8.200a1.500 1.500 0 01-1.500 1.500h-5" fill="none" stroke="#3a4254" stroke-width="1.100"/></svg>
<div class="a" style="left:1379.4px;top:632px;width:1.1px;height:14px;background:#4a5263;"></div>
<div class="a" style="left:1392px;top:623px;width:56px;height:32px;border:1px solid #c0c4c8;border-radius:4px;box-sizing:border-box;background:#fafafa"></div>
<div class="t " style="left:1405.6px;top:631.8px;">66 %</div>
<svg style="left:0px;top:0px;" width="1" height="1" viewBox="0 0 1 1"><path d="M1467 637.300h8" stroke="#3a4254" stroke-width="1.400"/><circle cx="1476.5" cy="641.5" r="2.600" fill="none" stroke="#3a4254" stroke-width="1.100"/><path d="M1478.4 643.4l2.800 2.800" stroke="#3a4254" stroke-width="1.200"/></svg>
<svg style="left:0px;top:0px;" width="1" height="1" viewBox="0 0 1 1"><path d="M1515.500 637h8.500M1519.700 632.800v8.500" stroke="#3a4254" stroke-width="1.400"/><circle cx="1525.5" cy="642" r="2.600" fill="none" stroke="#3a4254" stroke-width="1.100"/><path d="M1527.4 643.9l2.800 2.800" stroke="#3a4254" stroke-width="1.200"/></svg>
<div class="a" style="left:1548px;top:617px;width:44px;height:44px;background:#d0d4d7;"></div>
<svg style="left:0px;top:0px;" width="1" height="1" viewBox="0 0 1 1"><path d="M1564.500 638.500v-3h3M1572.500 635.500h3v3M1575.500 641.500v3h-3M1567.500 644.500h-3v-3" fill="none" stroke="#3a4254" stroke-width="1.300"/><rect x="1566.800" y="637.600" width="6.400" height="4.800" fill="#3a4254"/></svg>
<svg style="left:0px;top:0px;" width="1" height="1" viewBox="0 0 1 1"><path d="M1793 640l5.500-5v3.200h6v3.600h-6v3.200z" fill="#3a4254"/><path d="M1853 640l-5.500-5v3.200h-6v3.600h6v3.200z" fill="#3a4254"/></svg>
<svg style="left:0px;top:0px;" width="1" height="1" viewBox="0 0 1 1"><path d="M1889.8 636.4h11M1889.8 639.6h11M1889.8 642.8000000000001h11" stroke="#3a4254" stroke-width="1.25" fill="none"/></svg>
<div class="box" style="left:1132px;top:661px;width:650px;height:356px"></div>
<div class="a" style="left:1782px;top:661px;width:6px;height:356px;background:#c0c4c8;"></div>
<div class="a" style="left:1141px;top:688px;width:632px;height:302px;background:#ffffff;"></div>
<svg style="left:1141px;top:688px;letter-spacing:0.3px;will-change:transform" width="632" height="302" viewBox="0 0 632 302" font-family="DejaVu Sans,sans-serif" font-size="12.500" fill="#1a1a1a"><polygon points="30.2,210.7 118.1,136.9 117,30.3 25,97.9" fill="#f9f9f9" stroke="#e4e4e4" stroke-width="0.7"/>
<polygon points="118.1,136.9 259.6,178 264.5,67.9 117,30.3" fill="#f2f2f2" stroke="#e4e4e4" stroke-width="0.7"/>
<polygon points="30.2,210.7 179.9,259.4 259.6,178 118.1,136.9" fill="#f5f5f5" stroke="#e4e4e4" stroke-width="0.7"/>
<path d="M39.6 213.8L127.1 139.5L126.3 32.7M67.6 222.9L153.6 147.2L153.9 39.7M96.1 232.1L180.6 155.1L182 46.9M125.2 241.6L208.1 163.1L210.6 54.2M154.8 251.2L236 171.2L239.9 61.7M191 248L42.5 200.4L37.9 88.5M206.5 232.2L59.5 186.1L55.7 75.4M221.5 216.9L76 172.3L72.9 62.7M236 202.2L92 158.9L89.7 50.4M250 187.8L107.5 145.8L105.9 38.5M30.1 208.6L118.1 134.9L259.7 175.9M28.9 182.3L117.8 110L260.9 150.3M27.7 155.5L117.6 84.7L262 124.1M26.4 128.2L117.3 58.9L263.2 97.5M25.1 100.3L117 32.6L264.4 70.2" fill="none" stroke="#b9b9b9" stroke-width="0.95"/>
<path d="M30.2 210.7L179.9 259.4L259.6 178L264.5 67.9" fill="none" stroke="#1a1a1a" stroke-width="1.25" stroke-linejoin="round"/>
<path d="M41.9 211.8L38.1 215.1M69.8 220.9L66.1 224.2M98.3 230.1L94.6 233.5M127.3 239.5L123.7 242.9M157 249.1L153.4 252.6M187.3 246.8L193.5 248.8M202.8 231.1L209 233M217.8 215.8L223.9 217.7M232.4 201.1L238.4 202.9M246.4 186.8L252.4 188.5M256.2 174.9L262.1 176.6M257.3 149.3L263.3 151M258.4 123.2L264.4 124.8M259.5 96.5L265.6 98.1M260.7 69.3L266.9 70.9" fill="none" stroke="#1a1a1a" stroke-width="1.15"/>
<text x="29.5" y="245" text-anchor="middle">−1.0</text>
<text x="57.5" y="254.4" text-anchor="middle">−0.5</text>
<text x="86" y="263.9" text-anchor="middle">0.0</text>
<text x="115.1" y="273.6" text-anchor="middle">0.5</text>
<text x="144.8" y="283.5" text-anchor="middle">1.0</text>
<text x="208.3" y="276" text-anchor="middle">−1.0</text>
<text x="223.5" y="259.9" text-anchor="middle">−0.5</text>
<text x="238.2" y="244.4" text-anchor="middle">0.0</text>
<text x="252.5" y="229.3" text-anchor="middle">0.5</text>
<text x="266.3" y="214.7" text-anchor="middle">1.0</text>
<text x="284.5" y="182.4" text-anchor="middle">−1.0</text>
<text x="285.8" y="156.8" text-anchor="middle">−0.5</text>
<text x="287.2" y="130.8" text-anchor="middle">0.0</text>
<text x="288.6" y="104.2" text-anchor="middle">0.5</text>
<text x="290.1" y="77" text-anchor="middle">1.0</text>
<g stroke-width="0.35" stroke-linejoin="round">
<polygon points="141.9,91.8 151.1,92.4 141.9,95.1" fill="#3b7cb7" stroke="#3b7cb7"/>
<polygon points="141.9,95.1 151.1,92.4 150.8,95.7" fill="#3b92b9" stroke="#3b92b9"/>
<polygon points="127.1,122.1 126.8,118.8 134.4,121.8" fill="#b81e48" stroke="#b81e48"/>
<polygon points="134.4,121.8 126.8,118.8 134.2,118.4" fill="#cd364d" stroke="#cd364d"/>
<polygon points="134.2,118.4 126.8,118.8 134.1,115.1" fill="#e75948" stroke="#e75948"/>
<polygon points="119.8,122.9 126.8,118.8 127.1,122.1" fill="#b11747" stroke="#b11747"/>
<polygon points="141.9,95.1 150.5,99 141.8,98.5" fill="#6ec5a5" stroke="#6ec5a5"/>
<polygon points="150.8,95.7 150.5,99 141.9,95.1" fill="#5cb7aa" stroke="#5cb7aa"/>
<polygon points="141.9,91.8 141.9,95.1 132.9,91.8" fill="#4175b4" stroke="#4175b4"/>
<polygon points="133.2,98.5 141.9,95.1 141.8,98.5" fill="#69c3a5" stroke="#69c3a5"/>
<polygon points="141.8,98.5 150.5,99 141.8,101.8" fill="#9cd7a4" stroke="#9cd7a4"/>
<polygon points="134.1,115.1 126.8,118.8 126.5,115.5" fill="#f26944" stroke="#f26944"/>
<polygon points="141.8,98.5 141.8,101.8 133.2,98.5" fill="#99d6a4" stroke="#99d6a4"/>
<polygon points="134.1,115.1 133.9,111.8 141.7,111.8" fill="#fdb163" stroke="#fdb163"/>
<polygon points="141.5,121.8 134.4,121.8 134.2,118.4" fill="#be254a" stroke="#be254a"/>
<polygon points="133.4,101.8 141.8,101.8 141.7,105.1" fill="#d8ef9b" stroke="#d8ef9b"/>
<polygon points="133.7,108.5 141.7,108.4 133.9,111.8" fill="#fee491" stroke="#fee491"/>
<polygon points="134.1,115.1 141.6,118.4 134.2,118.4" fill="#e95c47" stroke="#e95c47"/>
<polygon points="133.5,105.1 141.7,105.1 141.7,108.4" fill="#fbfdb8" stroke="#fbfdb8"/>
<polygon points="126.1,112.2 133.9,111.8 134.1,115.1" fill="#fdaf62" stroke="#fdaf62"/>
<polygon points="133.5,105.1 141.7,108.4 133.7,108.5" fill="#fffab6" stroke="#fffab6"/>
<polygon points="141.7,108.4 141.7,111.8 133.9,111.8" fill="#fed481" stroke="#fed481"/>
<polygon points="133.2,98.5 133,95.1 141.9,95.1" fill="#54aead" stroke="#54aead"/>
<polygon points="159.8,96.9 150.8,95.7 151.1,92.4" fill="#3f97b7" stroke="#3f97b7"/>
<polygon points="141.7,105.1 133.5,105.1 133.4,101.8" fill="#e9f69d" stroke="#e9f69d"/>
<polygon points="141.8,101.8 133.4,101.8 133.2,98.5" fill="#aedea3" stroke="#aedea3"/>
<polygon points="141.8,101.8 150.5,99 150.2,102.3" fill="#b5e1a2" stroke="#b5e1a2"/>
<polygon points="126.5,115.5 126.1,112.2 134.1,115.1" fill="#fa9656" stroke="#fa9656"/>
<polygon points="141.7,111.8 141.6,115.1 134.1,115.1" fill="#fb9d59" stroke="#fb9d59"/>
<polygon points="141.9,95.1 133,95.1 132.9,91.8" fill="#3585bb" stroke="#3585bb"/>
<polygon points="149.9,105.6 141.7,105.1 141.8,101.8" fill="#eaf79e" stroke="#eaf79e"/>
<polygon points="119.4,119.7 126.8,118.8 119.8,122.9" fill="#c52c4b" stroke="#c52c4b"/>
<polygon points="134.1,115.1 141.6,115.1 141.6,118.4" fill="#f47044" stroke="#f47044"/>
<polygon points="133.7,108.5 133.9,111.8 125.8,108.9" fill="#fee491" stroke="#fee491"/>
<polygon points="134.2,118.4 141.6,118.4 141.5,121.8" fill="#d63f4f" stroke="#d63f4f"/>
<polygon points="150.5,99 150.8,95.7 159.8,96.9" fill="#62bda7" stroke="#62bda7"/>
<polygon points="151.1,92.4 160.4,93.6 159.8,96.9" fill="#3389bd" stroke="#3389bd"/>
<polygon points="141.8,101.8 150.2,102.3 149.9,105.6" fill="#ddf19a" stroke="#ddf19a"/>
<polygon points="141.7,108.4 141.7,105.1 149.6,108.9" fill="#fffab6" stroke="#fffab6"/>
<polygon points="125.8,108.9 133.9,111.8 126.1,112.2" fill="#fed27f" stroke="#fed27f"/>
<polygon points="126.5,115.5 126.8,118.8 119,116.4" fill="#ef6645" stroke="#ef6645"/>
<polygon points="125.5,105.6 133.5,105.1 133.7,108.5" fill="#fbfdb8" stroke="#fbfdb8"/>
<polygon points="149.3,112.2 141.7,111.8 141.7,108.4" fill="#fed683" stroke="#fed683"/>
<polygon points="125.1,102.3 133.4,101.8 133.5,105.1" fill="#d6ee9b" stroke="#d6ee9b"/>
<polygon points="119,116.4 126.8,118.8 119.4,119.7" fill="#e3534a" stroke="#e3534a"/>
<polygon points="149.6,108.9 141.7,105.1 149.9,105.6" fill="#fbfdb8" stroke="#fbfdb8"/>
<polygon points="133.7,108.5 125.8,108.9 125.5,105.6" fill="#fffab6" stroke="#fffab6"/>
<polygon points="133.4,101.8 125.1,102.3 133.2,98.5" fill="#acdda4" stroke="#acdda4"/>
<polygon points="149.3,112.2 141.6,115.1 141.7,111.8" fill="#fdb567" stroke="#fdb567"/>
<polygon points="118.5,113.2 126.1,112.2 126.5,115.5" fill="#fdad60" stroke="#fdad60"/>
<polygon points="150.5,99 158.6,103.4 150.2,102.3" fill="#b8e2a1" stroke="#b8e2a1"/>
<polygon points="141.7,108.4 149.6,108.9 149.3,112.2" fill="#fee593" stroke="#fee593"/>
<polygon points="159.8,96.9 159.2,100.1 150.5,99" fill="#79c9a5" stroke="#79c9a5"/>
<polygon points="133.5,105.1 125.5,105.6 125.1,102.3" fill="#e8f69b" stroke="#e8f69b"/>
<polygon points="124.5,95.7 133,95.1 133.2,98.5" fill="#50a9af" stroke="#50a9af"/>
<polygon points="141.6,115.1 148.7,118.8 141.6,118.4" fill="#ee6445" stroke="#ee6445"/>
<polygon points="132.9,91.8 133,95.1 124.5,95.7" fill="#3880b9" stroke="#3880b9"/>
<polygon points="118.5,113.2 125.8,108.9 126.1,112.2" fill="#fed07e" stroke="#fed07e"/>
<polygon points="149.9,105.6 150.2,102.3 158.6,103.4" fill="#dff299" stroke="#dff299"/>
<polygon points="141.6,118.4 148.7,118.8 141.5,121.8" fill="#d8434e" stroke="#d8434e"/>
<polygon points="119.4,119.7 119.8,122.9 112.1,120.9" fill="#c1274a" stroke="#c1274a"/>
<polygon points="126.5,115.5 119,116.4 118.5,113.2" fill="#f99355" stroke="#f99355"/>
<polygon points="149,115.5 141.6,115.1 149.3,112.2" fill="#fba35c" stroke="#fba35c"/>
<polygon points="133.2,98.5 125.1,102.3 124.8,99" fill="#91d3a4" stroke="#91d3a4"/>
<polygon points="159.2,100.1 158.6,103.4 150.5,99" fill="#a4daa4" stroke="#a4daa4"/>
<polygon points="149,115.5 148.7,118.8 141.6,115.1" fill="#f57748" stroke="#f57748"/>
<polygon points="159.8,96.9 160.4,93.6 169.6,95.5" fill="#3990ba" stroke="#3990ba"/>
<polygon points="112.1,120.9 119.8,122.9 112.6,124.1" fill="#ab0f45" stroke="#ab0f45"/>
<polygon points="124.8,99 124.5,95.7 133.2,98.5" fill="#62bda7" stroke="#62bda7"/>
<polygon points="149.9,105.6 158,106.6 149.6,108.9" fill="#fbfdb8" stroke="#fbfdb8"/>
<polygon points="125.5,105.6 125.8,108.9 118.1,109.9" fill="#fffab6" stroke="#fffab6"/>
<polygon points="112.1,120.9 119,116.4 119.4,119.7" fill="#e1504b" stroke="#e1504b"/>
<polygon points="141.5,121.8 148.7,118.8 148.4,122.1" fill="#cb334d" stroke="#cb334d"/>
<polygon points="132.9,91.8 124.5,95.7 124.1,92.4" fill="#496aaf" stroke="#496aaf"/>
<polygon points="118.1,109.9 125.8,108.9 118.5,113.2" fill="#fee28f" stroke="#fee28f"/>
<polygon points="158.6,103.4 158,106.6 149.9,105.6" fill="#ebf7a0" stroke="#ebf7a0"/>
<polygon points="149.3,112.2 149.6,108.9 157.4,109.8" fill="#fee695" stroke="#fee695"/>
<polygon points="125.1,102.3 125.5,105.6 117.6,106.6" fill="#e8f69b" stroke="#e8f69b"/>
<polygon points="167.7,101.8 159.2,100.1 159.8,96.9" fill="#7ecca5" stroke="#7ecca5"/>
<polygon points="158,106.6 157.4,109.8 149.6,108.9" fill="#fffab6" stroke="#fffab6"/>
<polygon points="118.1,109.9 117.6,106.6 125.5,105.6" fill="#fbfdb8" stroke="#fbfdb8"/>
<polygon points="169.6,95.5 168.6,98.6 159.8,96.9" fill="#4ea7b0" stroke="#4ea7b0"/>
<polygon points="149.3,112.2 156.2,116.3 149,115.5" fill="#fca85e" stroke="#fca85e"/>
<polygon points="111.6,117.7 119,116.4 112.1,120.9" fill="#ed6246" stroke="#ed6246"/>
<polygon points="167.7,101.8 158.6,103.4 159.2,100.1" fill="#aadca4" stroke="#aadca4"/>
<polygon points="111.1,114.5 118.5,113.2 119,116.4" fill="#fca85e" stroke="#fca85e"/>
<polygon points="125.1,102.3 116.8,100.1 124.8,99" fill="#8fd2a4" stroke="#8fd2a4"/>
<polygon points="156.2,116.3 148.7,118.8 149,115.5" fill="#f67c4a" stroke="#f67c4a"/>
<polygon points="149.3,112.2 157.4,109.8 156.8,113.1" fill="#feda86" stroke="#feda86"/>
<polygon points="159.8,96.9 168.6,98.6 167.7,101.8" fill="#6ec5a5" stroke="#6ec5a5"/>
<polygon points="117.6,106.6 117.2,103.4 125.1,102.3" fill="#d3ed9c" stroke="#d3ed9c"/>
<polygon points="116.8,100.1 124.5,95.7 124.8,99" fill="#5eb9a9" stroke="#5eb9a9"/>
<polygon points="118.1,109.9 118.5,113.2 111.1,114.5" fill="#fed07e" stroke="#fed07e"/>
<polygon points="156.8,113.1 156.2,116.3 149.3,112.2" fill="#fdbb6c" stroke="#fdbb6c"/>
<polygon points="111.1,114.5 119,116.4 111.6,117.7" fill="#f98e52" stroke="#f98e52"/>
<polygon points="105.1,122.6 112.1,120.9 112.6,124.1" fill="#bc2249" stroke="#bc2249"/>
<polygon points="148.4,122.1 148.7,118.8 155,122.9" fill="#d23a4e" stroke="#d23a4e"/>
<polygon points="117.2,103.4 116.8,100.1 125.1,102.3" fill="#a7dba4" stroke="#a7dba4"/>
<polygon points="158.6,103.4 165.8,108.1 158,106.6" fill="#ecf7a1" stroke="#ecf7a1"/>
<polygon points="124.5,95.7 115.9,93.6 124.1,92.4" fill="#4e63ac" stroke="#4e63ac"/>
<polygon points="166.8,104.9 158.6,103.4 167.7,101.8" fill="#bfe5a0" stroke="#bfe5a0"/>
<polygon points="155.6,119.6 148.7,118.8 156.2,116.3" fill="#f36b43" stroke="#f36b43"/>
<polygon points="165.8,108.1 157.4,109.8 158,106.6" fill="#fcfeba" stroke="#fcfeba"/>
<polygon points="110.7,111.3 117.6,106.6 118.1,109.9" fill="#fffab6" stroke="#fffab6"/>
<polygon points="105.1,122.6 112.6,124.1 105.6,125.7" fill="#a40844" stroke="#a40844"/>
<polygon points="111.6,117.7 112.1,120.9 105.1,122.6" fill="#df4e4b" stroke="#df4e4b"/>
<polygon points="116.3,96.8 124.5,95.7 116.8,100.1" fill="#49a2b2" stroke="#49a2b2"/>
<polygon points="155,122.9 148.7,118.8 155.6,119.6" fill="#df4e4b" stroke="#df4e4b"/>
<polygon points="166.8,104.9 165.8,108.1 158.6,103.4" fill="#e1f399" stroke="#e1f399"/>
<polygon points="111.1,114.5 110.7,111.3 118.1,109.9" fill="#fee18d" stroke="#fee18d"/>
<polygon points="177.1,101 168.6,98.6 169.6,95.5" fill="#54aead" stroke="#54aead"/>
<polygon points="116.3,96.8 115.9,93.6 124.5,95.7" fill="#3f77b5" stroke="#3f77b5"/>
<polygon points="164,114.4 156.8,113.1 157.4,109.8" fill="#fedc88" stroke="#fedc88"/>
<polygon points="109.7,104.9 117.2,103.4 117.6,106.6" fill="#d3ed9c" stroke="#d3ed9c"/>
<polygon points="167.7,101.8 168.6,98.6 177.1,101" fill="#76c8a5" stroke="#76c8a5"/>
<polygon points="156.2,116.3 156.8,113.1 164,114.4" fill="#fdbd6d" stroke="#fdbd6d"/>
<polygon points="164.9,111.2 157.4,109.8 165.8,108.1" fill="#fffab6" stroke="#fffab6"/>
<polygon points="111.1,114.5 111.6,117.7 104.6,119.4" fill="#f88c51" stroke="#f88c51"/>
<polygon points="110.2,108.1 117.6,106.6 110.7,111.3" fill="#fbfdb8" stroke="#fbfdb8"/>
<polygon points="109.7,104.9 116.8,100.1 117.2,103.4" fill="#a4daa4" stroke="#a4daa4"/>
<polygon points="104.6,119.4 111.6,117.7 105.1,122.6" fill="#ea5e47" stroke="#ea5e47"/>
<polygon points="164.9,111.2 164,114.4 157.4,109.8" fill="#fee797" stroke="#fee797"/>
<polygon points="178.4,97.9 177.1,101 169.6,95.5" fill="#47a0b3" stroke="#47a0b3"/>
<polygon points="109.7,104.9 117.6,106.6 110.2,108.1" fill="#e7f59a" stroke="#e7f59a"/>
<polygon points="156.2,116.3 162.1,120.7 155.6,119.6" fill="#f57245" stroke="#f57245"/>
<polygon points="167.7,101.8 174.6,107 166.8,104.9" fill="#c1e6a0" stroke="#c1e6a0"/>
<polygon points="105.6,125.7 98.9,127.7 105.1,122.6" fill="#a20643" stroke="#a20643"/>
<polygon points="162.1,120.7 155,122.9 155.6,119.6" fill="#e3534a" stroke="#e3534a"/>
<polygon points="156.2,116.3 164,114.4 163,117.6" fill="#fdaf62" stroke="#fdaf62"/>
<polygon points="174.6,107 165.8,108.1 166.8,104.9" fill="#e6f598" stroke="#e6f598"/>
<polygon points="177.1,101 175.9,104 167.7,101.8" fill="#8fd2a4" stroke="#8fd2a4"/>
<polygon points="116.8,100.1 108.7,98.5 116.3,96.8" fill="#459eb4" stroke="#459eb4"/>
<polygon points="111.1,114.5 103.6,113.2 110.7,111.3" fill="#fee18d" stroke="#fee18d"/>
<polygon points="104.6,119.4 104.1,116.3 111.1,114.5" fill="#fca55d" stroke="#fca55d"/>
<polygon points="163,117.6 162.1,120.7 156.2,116.3" fill="#f88950" stroke="#f88950"/>
<polygon points="109.2,101.7 116.8,100.1 109.7,104.9" fill="#89d0a4" stroke="#89d0a4"/>
<polygon points="108.7,98.5 115.9,93.6 116.3,96.8" fill="#4273b3" stroke="#4273b3"/>
<polygon points="175.9,104 174.6,107 167.7,101.8" fill="#b3e0a2" stroke="#b3e0a2"/>
<polygon points="172,113 164.9,111.2 165.8,108.1" fill="#fffbb8" stroke="#fffbb8"/>
<polygon points="104.1,116.3 103.6,113.2 111.1,114.5" fill="#fece7c" stroke="#fece7c"/>
<polygon points="109.2,101.7 108.7,98.5 116.8,100.1" fill="#5ab4ab" stroke="#5ab4ab"/>
<polygon points="110.2,108.1 110.7,111.3 103.2,110" fill="#fbfdb8" stroke="#fbfdb8"/>
<polygon points="161.2,123.9 155,122.9 162.1,120.7" fill="#dc484c" stroke="#dc484c"/>
<polygon points="105.1,122.6 98.9,127.7 98.4,124.7" fill="#b81e48" stroke="#b81e48"/>
<polygon points="104.6,119.4 105.1,122.6 98,121.6" fill="#e95c47" stroke="#e95c47"/>
<polygon points="173.3,110 165.8,108.1 174.6,107" fill="#edf8a3" stroke="#edf8a3"/>
<polygon points="170.7,116.1 164,114.4 164.9,111.2" fill="#fee08b" stroke="#fee08b"/>
<polygon points="103.2,110 109.7,104.9 110.2,108.1" fill="#e7f59a" stroke="#e7f59a"/>
<polygon points="186.9,101 177.1,101 178.4,97.9" fill="#52abae" stroke="#52abae"/>
<polygon points="165.8,108.1 173.3,110 172,113" fill="#fcfeba" stroke="#fcfeba"/>
<polygon points="110.7,111.3 103.6,113.2 103.2,110" fill="#fffab6" stroke="#fffab6"/>
<polygon points="163,117.6 164,114.4 170.7,116.1" fill="#fdc171" stroke="#fdc171"/>
<polygon points="108.2,95.2 115.9,93.6 108.7,98.5" fill="#545ca8" stroke="#545ca8"/>
<polygon points="98,121.6 104.1,116.3 104.6,119.4" fill="#f88950" stroke="#f88950"/>
<polygon points="98,121.6 105.1,122.6 98.4,124.7" fill="#dd4a4c" stroke="#dd4a4c"/>
<polygon points="175.9,104 177.1,101 185.2,103.8" fill="#81cda5" stroke="#81cda5"/>
<polygon points="170.7,116.1 164.9,111.2 172,113" fill="#fee999" stroke="#fee999"/>
<polygon points="163,117.6 169.4,119.1 162.1,120.7" fill="#f98e52" stroke="#f98e52"/>
<polygon points="109.7,104.9 102.2,103.7 109.2,101.7" fill="#86cfa5" stroke="#86cfa5"/>
<polygon points="102.7,106.9 109.7,104.9 103.2,110" fill="#d1ed9c" stroke="#d1ed9c"/>
<polygon points="103.6,113.2 104.1,116.3 97.6,118.5" fill="#fecc7b" stroke="#fecc7b"/>
<polygon points="181.9,109.5 174.6,107 175.9,104" fill="#c8e99e" stroke="#c8e99e"/>
<polygon points="170.7,116.1 169.4,119.1 163,117.6" fill="#fdb567" stroke="#fdb567"/>
<polygon points="185.2,103.8 177.1,101 186.9,101" fill="#62bda7" stroke="#62bda7"/>
<polygon points="166.9,125.2 161.2,123.9 162.1,120.7" fill="#e1504b" stroke="#e1504b"/>
<polygon points="109.2,101.7 102.2,103.7 108.7,98.5" fill="#58b2ac" stroke="#58b2ac"/>
<polygon points="173.3,110 174.6,107 181.9,109.5" fill="#e7f59a" stroke="#e7f59a"/>
<polygon points="97.6,118.5 104.1,116.3 98,121.6" fill="#fba35c" stroke="#fba35c"/>
<polygon points="98.4,124.7 98.9,127.7 92.2,127.1" fill="#b61b48" stroke="#b61b48"/>
<polygon points="102.7,106.9 102.2,103.7 109.7,104.9" fill="#a2d9a4" stroke="#a2d9a4"/>
<polygon points="162.1,120.7 169.4,119.1 168.1,122.1" fill="#f67f4b" stroke="#f67f4b"/>
<polygon points="185.2,103.8 183.6,106.7 175.9,104" fill="#99d6a4" stroke="#99d6a4"/>
<polygon points="103.2,110 103.6,113.2 97.2,115.5" fill="#fff8b4" stroke="#fff8b4"/>
<polygon points="162.1,120.7 168.1,122.1 166.9,125.2" fill="#eb6046" stroke="#eb6046"/>
<polygon points="181.9,109.5 175.9,104 183.6,106.7" fill="#bae3a1" stroke="#bae3a1"/>
<polygon points="172,113 173.3,110 178.6,115.3" fill="#fffbb8" stroke="#fffbb8"/>
<polygon points="98.4,124.7 92.2,127.1 98,121.6" fill="#dc484c" stroke="#dc484c"/>
<polygon points="108.7,98.5 101.2,97.4 108.2,95.2" fill="#5758a6" stroke="#5758a6"/>
<polygon points="92.2,127.1 98.9,127.7 92.6,130.1" fill="#9e0142" stroke="#9e0142"/>
<polygon points="103.6,113.2 97.6,118.5 97.2,115.5" fill="#fee08b" stroke="#fee08b"/>
<polygon points="178.6,115.3 170.7,116.1 172,113" fill="#feea9b" stroke="#feea9b"/>
<polygon points="108.7,98.5 102.2,103.7 101.7,100.6" fill="#4199b6" stroke="#4199b6"/>
<polygon points="181.9,109.5 180.3,112.4 173.3,110" fill="#eff9a6" stroke="#eff9a6"/>
<polygon points="173.3,110 180.3,112.4 178.6,115.3" fill="#fcfeba" stroke="#fcfeba"/>
<polygon points="101.7,100.6 101.2,97.4 108.7,98.5" fill="#486cb0" stroke="#486cb0"/>
<polygon points="175.3,121 169.4,119.1 170.7,116.1" fill="#fdb96a" stroke="#fdb96a"/>
<polygon points="103.2,110 96.3,109.3 102.7,106.9" fill="#cfec9d" stroke="#cfec9d"/>
<polygon points="103.2,110 97.2,115.5 96.7,112.4" fill="#fbfdb8" stroke="#fbfdb8"/>
<polygon points="185.2,103.8 186.9,101 192.7,107.2" fill="#6bc4a5" stroke="#6bc4a5"/>
<polygon points="98,121.6 91.6,121.1 97.6,118.5" fill="#fba35c" stroke="#fba35c"/>
<polygon points="168.1,122.1 169.4,119.1 173.7,123.9" fill="#f8864f" stroke="#f8864f"/>
<polygon points="98,121.6 92.2,127.1 91.9,124.1" fill="#e85b48" stroke="#e85b48"/>
<polygon points="177,118.1 170.7,116.1 178.6,115.3" fill="#fee28f" stroke="#fee28f"/>
<polygon points="102.7,106.9 96.3,109.3 102.2,103.7" fill="#9fd8a4" stroke="#9fd8a4"/>
<polygon points="190.7,109.9 183.6,106.7 185.2,103.8" fill="#9fd8a4" stroke="#9fd8a4"/>
<polygon points="96.7,112.4 96.3,109.3 103.2,110" fill="#e6f598" stroke="#e6f598"/>
<polygon points="170.7,116.1 177,118.1 175.3,121" fill="#fec877" stroke="#fec877"/>
<polygon points="166.9,125.2 168.1,122.1 172,126.7" fill="#e85b48" stroke="#e85b48"/>
<polygon points="97.2,115.5 97.6,118.5 91.6,121.1" fill="#fecc7b" stroke="#fecc7b"/>
<polygon points="183.6,106.7 190.7,109.9 181.9,109.5" fill="#c1e6a0" stroke="#c1e6a0"/>
<polygon points="91.9,124.1 91.6,121.1 98,121.6" fill="#f8864f" stroke="#f8864f"/>
<polygon points="92.2,127.1 92.6,130.1 86.8,132.9" fill="#9e0142" stroke="#9e0142"/>
<polygon points="173.7,123.9 169.4,119.1 175.3,121" fill="#fb9d59" stroke="#fb9d59"/>
<polygon points="192.7,107.2 186.9,101 194.7,104.6" fill="#62bda7" stroke="#62bda7"/>
<polygon points="102.2,103.7 95.5,103.1 101.7,100.6" fill="#3f97b7" stroke="#3f97b7"/>
<polygon points="180.3,112.4 181.9,109.5 186.7,115.2" fill="#eff9a6" stroke="#eff9a6"/>
<polygon points="168.1,122.1 173.7,123.9 172,126.7" fill="#f26944" stroke="#f26944"/>
<polygon points="185.2,103.8 192.7,107.2 190.7,109.9" fill="#91d3a4" stroke="#91d3a4"/>
<polygon points="102.2,103.7 96.3,109.3 95.9,106.2" fill="#84cea5" stroke="#84cea5"/>
<polygon points="186.7,115.2 178.6,115.3 180.3,112.4" fill="#fcfeba" stroke="#fcfeba"/>
<polygon points="95.5,103.1 101.2,97.4 101.7,100.6" fill="#496aaf" stroke="#496aaf"/>
<polygon points="91,115.1 96.7,112.4 97.2,115.5" fill="#fafdb7" stroke="#fafdb7"/>
<polygon points="190.7,109.9 188.7,112.6 181.9,109.5" fill="#d1ed9c" stroke="#d1ed9c"/>
<polygon points="177,118.1 178.6,115.3 184.7,117.9" fill="#feeb9d" stroke="#feeb9d"/>
<polygon points="91.3,118.1 97.2,115.5 91.6,121.1" fill="#fee08b" stroke="#fee08b"/>
<polygon points="95.9,106.2 95.5,103.1 102.2,103.7" fill="#54aead" stroke="#54aead"/>
<polygon points="186.7,115.2 181.9,109.5 188.7,112.6" fill="#e9f69d" stroke="#e9f69d"/>
<polygon points="86.5,127.1 91.9,124.1 92.2,127.1" fill="#e85b48" stroke="#e85b48"/>
<polygon points="86.8,132.9 86.6,130 92.2,127.1" fill="#b41947" stroke="#b41947"/>
<polygon points="175.3,121 177,118.1 182.6,120.5" fill="#fecc7b" stroke="#fecc7b"/>
<polygon points="96.3,109.3 96.7,112.4 91,115.1" fill="#e6f598" stroke="#e6f598"/>
<polygon points="97.2,115.5 91.3,118.1 91,115.1" fill="#fff8b4" stroke="#fff8b4"/>
<polygon points="186.7,115.2 184.7,117.9 178.6,115.3" fill="#fffbb8" stroke="#fffbb8"/>
<polygon points="91.6,121.1 91.9,124.1 86.5,127.1" fill="#f8864f" stroke="#f8864f"/>
<polygon points="92.2,127.1 86.6,130 86.5,127.1" fill="#da464d" stroke="#da464d"/>
<polygon points="178.6,125.8 173.7,123.9 175.3,121" fill="#f99355" stroke="#f99355"/>
<polygon points="95,100 101.2,97.4 95.5,103.1" fill="#5b53a4" stroke="#5b53a4"/>
<polygon points="184.7,117.9 182.6,120.5 177,118.1" fill="#fee491" stroke="#fee491"/>
<polygon points="178.6,125.8 172,126.7 173.7,123.9" fill="#f57245" stroke="#f57245"/>
<polygon points="199.4,111.2 192.7,107.2 194.7,104.6" fill="#7ccaa5" stroke="#7ccaa5"/>
<polygon points="182.6,120.5 180.6,123.2 175.3,121" fill="#fdc171" stroke="#fdc171"/>
<polygon points="96.3,109.3 90.3,109.1 95.9,106.2" fill="#84cea5" stroke="#84cea5"/>
<polygon points="199.4,111.2 190.7,109.9 192.7,107.2" fill="#9cd7a4" stroke="#9cd7a4"/>
<polygon points="91,115.1 90.7,112.1 96.3,109.3" fill="#cfec9d" stroke="#cfec9d"/>
<polygon points="175.3,121 180.6,123.2 178.6,125.8" fill="#fca85e" stroke="#fca85e"/>
<polygon points="188.7,112.6 190.7,109.9 197.1,113.6" fill="#c8e99e" stroke="#c8e99e"/>
<polygon points="81.7,136.1 86.6,130 86.8,132.9" fill="#9e0142" stroke="#9e0142"/>
<polygon points="86.2,121.2 91.3,118.1 91.6,121.1" fill="#fee08b" stroke="#fee08b"/>
<polygon points="90.3,109.1 95.5,103.1 95.9,106.2" fill="#52abae" stroke="#52abae"/>
<polygon points="86.5,127.1 86.3,124.1 91.6,121.1" fill="#fba05b" stroke="#fba05b"/>
<polygon points="176.6,128.5 172,126.7 178.6,125.8" fill="#f26944" stroke="#f26944"/>
<polygon points="186.7,115.2 188.7,112.6 194.7,116" fill="#ebf7a0" stroke="#ebf7a0"/>
<polygon points="90.7,112.1 90.3,109.1 96.3,109.3" fill="#9fd8a4" stroke="#9fd8a4"/>
<polygon points="199.4,111.2 194.7,104.6 201.8,108.7" fill="#71c6a5" stroke="#71c6a5"/>
<polygon points="190,120.8 184.7,117.9 186.7,115.2" fill="#fffcba" stroke="#fffcba"/>
<polygon points="91.6,121.1 86.3,124.1 86.2,121.2" fill="#fecc7b" stroke="#fecc7b"/>
<polygon points="197.1,113.6 190.7,109.9 199.4,111.2" fill="#b1dfa3" stroke="#b1dfa3"/>
<polygon points="91,115.1 91.3,118.1 86,118.2" fill="#fafdb7" stroke="#fafdb7"/>
<polygon points="86.5,127.1 86.6,130 81.7,133.2" fill="#da464d" stroke="#da464d"/>
<polygon points="184.7,117.9 187.6,123.2 182.6,120.5" fill="#fee695" stroke="#fee695"/>
<polygon points="95.5,103.1 89.7,103 95,100" fill="#5c51a3" stroke="#5c51a3"/>
<polygon points="197.1,113.6 194.7,116 188.7,112.6" fill="#d8ef9b" stroke="#d8ef9b"/>
<polygon points="180.6,123.2 182.6,120.5 187.6,123.2" fill="#fed27f" stroke="#fed27f"/>
<polygon points="90,106 95.5,103.1 90.3,109.1" fill="#3d95b8" stroke="#3d95b8"/>
<polygon points="81.7,136.1 81.7,133.2 86.6,130" fill="#b41947" stroke="#b41947"/>
<polygon points="186.7,115.2 194.7,116 192.4,118.4" fill="#f1f9a9" stroke="#f1f9a9"/>
<polygon points="86,118.2 90.7,112.1 91,115.1" fill="#e6f598" stroke="#e6f598"/>
<polygon points="178.6,125.8 180.6,123.2 185.3,125.6" fill="#fdaf62" stroke="#fdaf62"/>
<polygon points="192.4,118.4 190,120.8 186.7,115.2" fill="#fcfeba" stroke="#fcfeba"/>
<polygon points="86,118.2 91.3,118.1 86.2,121.2" fill="#fff8b4" stroke="#fff8b4"/>
<polygon points="95.5,103.1 90,106 89.7,103" fill="#4b68ae" stroke="#4b68ae"/>
<polygon points="86.5,127.1 81.8,130.3 86.3,124.1" fill="#f8864f" stroke="#f8864f"/>
<polygon points="190,120.8 187.6,123.2 184.7,117.9" fill="#feeda1" stroke="#feeda1"/>
<polygon points="180.5,130.5 176.6,128.5 178.6,125.8" fill="#f57245" stroke="#f57245"/>
<polygon points="90.3,109.1 90.7,112.1 85.8,115.3" fill="#9cd7a4" stroke="#9cd7a4"/>
<polygon points="81.7,133.2 81.8,130.3 86.5,127.1" fill="#e75948" stroke="#e75948"/>
<polygon points="185.3,125.6 180.6,123.2 187.6,123.2" fill="#fec877" stroke="#fec877"/>
<polygon points="201.8,108.7 208,113.4 199.4,111.2" fill="#7ecca5" stroke="#7ecca5"/>
<polygon points="185.3,125.6 182.9,128 178.6,125.8" fill="#fca55d" stroke="#fca55d"/>
<polygon points="85.8,115.3 90.7,112.1 86,118.2" fill="#cfec9d" stroke="#cfec9d"/>
<polygon points="178.6,125.8 182.9,128 180.5,130.5" fill="#f8864f" stroke="#f8864f"/>
<polygon points="202.6,117.6 197.1,113.6 199.4,111.2" fill="#b5e1a2" stroke="#b5e1a2"/>
<polygon points="86.2,121.2 86.3,124.1 81.8,124.5" fill="#fee08b" stroke="#fee08b"/>
<polygon points="194.7,116 197.1,113.6 202.6,117.6" fill="#d1ed9c" stroke="#d1ed9c"/>
<polygon points="81.8,130.3 81.8,127.4 86.3,124.1" fill="#fba05b" stroke="#fba05b"/>
<polygon points="85.5,109.3 90,106 90.3,109.1" fill="#3b92b9" stroke="#3b92b9"/>
<polygon points="194.7,116 197.3,121.9 192.4,118.4" fill="#f2faaa" stroke="#f2faaa"/>
<polygon points="77.7,136.7 81.7,133.2 81.7,136.1" fill="#b41947" stroke="#b41947"/>
<polygon points="90.3,109.1 85.8,115.3 85.7,112.3" fill="#81cda5" stroke="#81cda5"/>
<polygon points="81.8,124.5 86,118.2 86.2,121.2" fill="#fff8b4" stroke="#fff8b4"/>
<polygon points="194.6,124 190,120.8 192.4,118.4" fill="#fffcba" stroke="#fffcba"/>
<polygon points="81.8,124.5 86.3,124.1 81.8,127.4" fill="#fecc7b" stroke="#fecc7b"/>
<polygon points="199.4,111.2 208,113.4 205.3,115.5" fill="#94d4a4" stroke="#94d4a4"/>
<polygon points="194.6,124 187.6,123.2 190,120.8" fill="#feefa3" stroke="#feefa3"/>
<polygon points="199.4,111.2 205.3,115.5 202.6,117.6" fill="#aedea3" stroke="#aedea3"/>
<polygon points="85.7,112.3 85.5,109.3 90.3,109.1" fill="#52abae" stroke="#52abae"/>
<polygon points="85.3,106.3 89.7,103 90,106" fill="#5e4fa2" stroke="#5e4fa2"/>
<polygon points="187.6,123.2 189.2,128.3 185.3,125.6" fill="#fece7c" stroke="#fece7c"/>
<polygon points="77.4,139.6 77.7,136.7 81.7,136.1" fill="#9e0142" stroke="#9e0142"/>
<polygon points="202.6,117.6 199.9,119.8 194.7,116" fill="#dff299" stroke="#dff299"/>
<polygon points="77.9,133.9 81.8,130.3 81.7,133.2" fill="#e85b48" stroke="#e85b48"/>
<polygon points="189.2,128.3 182.9,128 185.3,125.6" fill="#fdb768" stroke="#fdb768"/>
<polygon points="199.9,119.8 197.3,121.9 194.7,116" fill="#edf8a3" stroke="#edf8a3"/>
<polygon points="192.4,118.4 197.3,121.9 194.6,124" fill="#fdfebb" stroke="#fdfebb"/>
<polygon points="180.5,130.5 182.9,128 183.8,132.6" fill="#f7844e" stroke="#f7844e"/>
<polygon points="81.9,118.7 85.8,115.3 86,118.2" fill="#cfec9d" stroke="#cfec9d"/>
<polygon points="90,106 85.5,109.3 85.3,106.3" fill="#4d65ad" stroke="#4d65ad"/>
<polygon points="81.9,121.6 86,118.2 81.8,124.5" fill="#fafdb7" stroke="#fafdb7"/>
<polygon points="191.9,126.2 187.6,123.2 194.6,124" fill="#fee999" stroke="#fee999"/>
<polygon points="191.9,126.2 189.2,128.3 187.6,123.2" fill="#feda86" stroke="#feda86"/>
<polygon points="81.7,133.2 77.7,136.7 77.9,133.9" fill="#da464d" stroke="#da464d"/>
<polygon points="78.1,131 81.8,127.4 81.8,130.3" fill="#fba05b" stroke="#fba05b"/>
<polygon points="186.5,130.4 182.9,128 189.2,128.3" fill="#fdb163" stroke="#fdb163"/>
<polygon points="86,118.2 81.9,121.6 81.9,118.7" fill="#e6f598" stroke="#e6f598"/>
<polygon points="183.8,132.6 182.9,128 186.5,130.4" fill="#fa9857" stroke="#fa9857"/>
<polygon points="85.8,115.3 81.9,115.8 85.7,112.3" fill="#81cda5" stroke="#81cda5"/>
<polygon points="78.1,131 81.8,130.3 77.9,133.9" fill="#f8864f" stroke="#f8864f"/>
<polygon points="205.3,115.5 208,113.4 210.2,120.2" fill="#9fd8a4" stroke="#9fd8a4"/>
<polygon points="78.4,128.1 81.8,124.5 81.8,127.4" fill="#fee08b" stroke="#fee08b"/>
<polygon points="85.7,112.3 81.9,115.8 85.5,109.3" fill="#50a9af" stroke="#50a9af"/>
<polygon points="202.6,117.6 205.3,115.5 210.2,120.2" fill="#b8e2a1" stroke="#b8e2a1"/>
<polygon points="81.9,118.7 81.9,115.8 85.8,115.3" fill="#9cd7a4" stroke="#9cd7a4"/>
<polygon points="202.6,117.6 207.2,122 199.9,119.8" fill="#d8ef9b" stroke="#d8ef9b"/>
<polygon points="77.7,136.7 77.4,139.6 74,143.3" fill="#9e0142" stroke="#9e0142"/>
<polygon points="197.3,121.9 199.9,119.8 204.3,123.9" fill="#eff9a6" stroke="#eff9a6"/>
<polygon points="81.9,121.6 81.8,124.5 78.4,128.1" fill="#fff8b4" stroke="#fff8b4"/>
<polygon points="194.6,124 197.3,121.9 201.3,125.7" fill="#fdfebb" stroke="#fdfebb"/>
<polygon points="81.8,127.4 78.1,131 78.4,128.1" fill="#fecc7b" stroke="#fecc7b"/>
<polygon points="194.6,124 195.3,129.3 191.9,126.2" fill="#feeb9d" stroke="#feeb9d"/>
<polygon points="191.9,126.2 195.3,129.3 189.2,128.3" fill="#fede89" stroke="#fede89"/>
<polygon points="210.2,120.2 208,113.4 213.2,118.4" fill="#97d5a4" stroke="#97d5a4"/>
<polygon points="85.3,106.3 85.5,109.3 82,109.9" fill="#5e4fa2" stroke="#5e4fa2"/>
<polygon points="189.2,128.3 189.3,132.9 186.5,130.4" fill="#fdb96a" stroke="#fdb96a"/>
<polygon points="186.5,130.4 189.3,132.9 183.8,132.6" fill="#fba35c" stroke="#fba35c"/>
<polygon points="210.2,120.2 207.2,122 202.6,117.6" fill="#c6e89f" stroke="#c6e89f"/>
<polygon points="85.5,109.3 81.9,115.8 81.9,112.9" fill="#3b92b9" stroke="#3b92b9"/>
<polygon points="199.9,119.8 207.2,122 204.3,123.9" fill="#e6f598" stroke="#e6f598"/>
<polygon points="77.7,136.7 75,137.7 77.9,133.9" fill="#e85b48" stroke="#e85b48"/>
<polygon points="204.3,123.9 201.3,125.7 197.3,121.9" fill="#f4faad" stroke="#f4faad"/>
<polygon points="77.7,136.7 74,143.3 74.5,140.5" fill="#b61b48" stroke="#b61b48"/>
<polygon points="194.6,124 201.3,125.7 198.3,127.5" fill="#fffcba" stroke="#fffcba"/>
<polygon points="81.9,118.7 81.9,121.6 78.9,122.4" fill="#cfec9d" stroke="#cfec9d"/>
<polygon points="198.3,127.5 195.3,129.3 194.6,124" fill="#fff1a8" stroke="#fff1a8"/>
<polygon points="82,109.9 85.5,109.3 81.9,112.9" fill="#4d65ad" stroke="#4d65ad"/>
<polygon points="78.6,125.3 81.9,121.6 78.4,128.1" fill="#fafdb7" stroke="#fafdb7"/>
<polygon points="189.2,128.3 195.3,129.3 192.3,131.1" fill="#fed683" stroke="#fed683"/>
<polygon points="77.9,133.9 75,137.7 78.1,131" fill="#f8864f" stroke="#f8864f"/>
<polygon points="192.3,131.1 189.3,132.9 189.2,128.3" fill="#fdc574" stroke="#fdc574"/>
<polygon points="183.8,132.6 189.3,132.9 186.4,134.8" fill="#fa9b58" stroke="#fa9b58"/>
<polygon points="74.5,140.5 75,137.7 77.7,136.7" fill="#dc484c" stroke="#dc484c"/>
<polygon points="78.9,122.4 81.9,115.8 81.9,118.7" fill="#9cd7a4" stroke="#9cd7a4"/>
<polygon points="78.9,122.4 81.9,121.6 78.6,125.3" fill="#e6f598" stroke="#e6f598"/>
<polygon points="78.4,128.1 78.1,131 75.4,134.8" fill="#fecc7b" stroke="#fecc7b"/>
<polygon points="78.1,131 75,137.7 75.4,134.8" fill="#fba35c" stroke="#fba35c"/>
<polygon points="81.9,112.9 81.9,115.8 79.4,116.6" fill="#3b92b9" stroke="#3b92b9"/>
<polygon points="213.2,118.4 217.2,123.8 210.2,120.2" fill="#a7dba4" stroke="#a7dba4"/>
<polygon points="210.8,126.8 207.2,122 210.2,120.2" fill="#cdeb9d" stroke="#cdeb9d"/>
<polygon points="79.1,119.5 81.9,115.8 78.9,122.4" fill="#81cda5" stroke="#81cda5"/>
<polygon points="74.5,140.5 74,143.3 71.6,147.3" fill="#a20643" stroke="#a20643"/>
<polygon points="204.3,123.9 207.2,122 207.5,128.2" fill="#e8f69b" stroke="#e8f69b"/>
<polygon points="207.5,128.2 201.3,125.7 204.3,123.9" fill="#f1f9a9" stroke="#f1f9a9"/>
<polygon points="198.3,127.5 201.3,125.7 201.1,131.2" fill="#fffdbc" stroke="#fffdbc"/>
<polygon points="201.1,131.2 195.3,129.3 198.3,127.5" fill="#fff2aa" stroke="#fff2aa"/>
<polygon points="192.3,131.1 195.3,129.3 194.6,134.1" fill="#fedc88" stroke="#fedc88"/>
<polygon points="79.4,116.6 82,109.9 81.9,112.9" fill="#4d65ad" stroke="#4d65ad"/>
<polygon points="194.6,134.1 189.3,132.9 192.3,131.1" fill="#feca79" stroke="#feca79"/>
<polygon points="78.4,128.1 76.4,129.1 78.6,125.3" fill="#fafdb7" stroke="#fafdb7"/>
<polygon points="189.3,132.9 188.2,137 186.4,134.8" fill="#fcaa5f" stroke="#fcaa5f"/>
<polygon points="79.4,116.6 81.9,115.8 79.1,119.5" fill="#52abae" stroke="#52abae"/>
<polygon points="75.4,134.8 75.9,132 78.4,128.1" fill="#fee08b" stroke="#fee08b"/>
<polygon points="76.4,129.1 78.9,122.4 78.6,125.3" fill="#e6f598" stroke="#e6f598"/>
<polygon points="210.2,120.2 214,125.3 210.8,126.8" fill="#c8e99e" stroke="#c8e99e"/>
<polygon points="217.2,123.8 214,125.3 210.2,120.2" fill="#b5e1a2" stroke="#b5e1a2"/>
<polygon points="73,141.6 75,137.7 74.5,140.5" fill="#e95c47" stroke="#e95c47"/>
<polygon points="207.5,128.2 207.2,122 210.8,126.8" fill="#e4f498" stroke="#e4f498"/>
<polygon points="75.9,132 76.4,129.1 78.4,128.1" fill="#fff8b4" stroke="#fff8b4"/>
<polygon points="201.1,131.2 201.3,125.7 204.3,129.7" fill="#fdfebb" stroke="#fdfebb"/>
<polygon points="204.3,129.7 201.3,125.7 207.5,128.2" fill="#f6fbb0" stroke="#f6fbb0"/>
<polygon points="194.6,134.1 195.3,129.3 197.9,132.6" fill="#fee491" stroke="#fee491"/>
<polygon points="197.9,132.6 195.3,129.3 201.1,131.2" fill="#feeda1" stroke="#feeda1"/>
<polygon points="191.4,135.6 188.2,137 189.3,132.9" fill="#fdb768" stroke="#fdb768"/>
<polygon points="191.4,135.6 189.3,132.9 194.6,134.1" fill="#fdc776" stroke="#fdc776"/>
<polygon points="71.6,147.3 72.3,144.5 74.5,140.5" fill="#b81e48" stroke="#b81e48"/>
<polygon points="79.6,113.7 82,109.9 79.4,116.6" fill="#5e4fa2" stroke="#5e4fa2"/>
<polygon points="75.4,134.8 75,137.7 73,141.6" fill="#f88950" stroke="#f88950"/>
<polygon points="74.5,140.5 72.3,144.5 73,141.6" fill="#dd4a4c" stroke="#dd4a4c"/>
<polygon points="79.1,119.5 78.9,122.4 77.4,123.4" fill="#81cda5" stroke="#81cda5"/>
<polygon points="76.9,126.3 78.9,122.4 76.4,129.1" fill="#cfec9d" stroke="#cfec9d"/>
<polygon points="74.5,136 75.9,132 75.4,134.8" fill="#fee08b" stroke="#fee08b"/>
<polygon points="77.4,123.4 78.9,122.4 76.9,126.3" fill="#9fd8a4" stroke="#9fd8a4"/>
<polygon points="77.9,120.5 79.4,116.6 79.1,119.5" fill="#3d95b8" stroke="#3d95b8"/>
<polygon points="73.7,138.8 75.4,134.8 73,141.6" fill="#fba35c" stroke="#fba35c"/>
<polygon points="192.7,138.3 188.2,137 191.4,135.6" fill="#fdbf6f" stroke="#fdbf6f"/>
<polygon points="194.6,134.1 192.7,138.3 191.4,135.6" fill="#fece7c" stroke="#fece7c"/>
<polygon points="197.9,132.6 199.5,136.1 194.6,134.1" fill="#fee695" stroke="#fee695"/>
<polygon points="201.1,131.2 199.5,136.1 197.9,132.6" fill="#fff0a6" stroke="#fff0a6"/>
<polygon points="75.9,132 74.5,136 76.4,129.1" fill="#fffab6" stroke="#fffab6"/>
<polygon points="206.3,133.9 201.1,131.2 204.3,129.7" fill="#fefebd" stroke="#fefebd"/>
<polygon points="204.3,129.7 207.5,128.2 206.3,133.9" fill="#f6fbb0" stroke="#f6fbb0"/>
<polygon points="213.2,131.7 207.5,128.2 210.8,126.8" fill="#e8f69b" stroke="#e8f69b"/>
<polygon points="210.8,126.8 214,125.3 213.2,131.7" fill="#d8ef9b" stroke="#d8ef9b"/>
<polygon points="79.6,113.7 79.4,116.6 77.9,120.5" fill="#4b68ae" stroke="#4b68ae"/>
<polygon points="214,125.3 217.2,123.8 220,129.5" fill="#b8e2a1" stroke="#b8e2a1"/>
<polygon points="74.5,136 75.4,134.8 73.7,138.8" fill="#fecc7b" stroke="#fecc7b"/>
<polygon points="79.1,119.5 77.4,123.4 77.9,120.5" fill="#52abae" stroke="#52abae"/>
<polygon points="72.3,144.5 71.6,147.3 71.2,148.6" fill="#ba2049" stroke="#ba2049"/>
<polygon points="189.3,139.3 188.2,137 192.7,138.3" fill="#fdbd6d" stroke="#fdbd6d"/>
<polygon points="196.1,137.2 192.7,138.3 194.6,134.1" fill="#feda86" stroke="#feda86"/>
<polygon points="194.6,134.1 199.5,136.1 196.1,137.2" fill="#fee491" stroke="#fee491"/>
<polygon points="202.9,135 199.5,136.1 201.1,131.2" fill="#fff5ae" stroke="#fff5ae"/>
<polygon points="76.4,129.1 75.9,130.3 76.9,126.3" fill="#cfec9d" stroke="#cfec9d"/>
<polygon points="202.9,135 201.1,131.2 206.3,133.9" fill="#fffdbc" stroke="#fffdbc"/>
<polygon points="72.2,145.8 73,141.6 72.3,144.5" fill="#ea5e47" stroke="#ea5e47"/>
<polygon points="206.3,133.9 207.5,128.2 209.8,132.8" fill="#f3faac" stroke="#f3faac"/>
<polygon points="209.8,132.8 207.5,128.2 213.2,131.7" fill="#edf8a3" stroke="#edf8a3"/>
<polygon points="71.2,148.6 71.6,147.3 70.3,151.5" fill="#a70b44" stroke="#a70b44"/>
<polygon points="213.2,131.7 214,125.3 216.6,130.6" fill="#d6ee9b" stroke="#d6ee9b"/>
<polygon points="76.4,129.1 74.5,136 75.2,133.1" fill="#fafdb7" stroke="#fafdb7"/>
<polygon points="220,129.5 216.6,130.6 214,125.3" fill="#c6e89f" stroke="#c6e89f"/>
<polygon points="78.3,117.7 79.6,113.7 77.9,120.5" fill="#5c51a3" stroke="#5c51a3"/>
<polygon points="75.2,133.1 75.9,130.3 76.4,129.1" fill="#e6f598" stroke="#e6f598"/>
<polygon points="76.6,127.4 77.4,123.4 76.9,126.3" fill="#84cea5" stroke="#84cea5"/>
<polygon points="73.7,138.8 73,141.6 73.1,142.9" fill="#fca55d" stroke="#fca55d"/>
<polygon points="72.3,144.5 71.2,148.6 72.2,145.8" fill="#df4e4b" stroke="#df4e4b"/>
<polygon points="76.6,127.4 77.9,120.5 77.4,123.4" fill="#54aead" stroke="#54aead"/>
<polygon points="73.1,142.9 74.5,136 73.7,138.8" fill="#fece7c" stroke="#fece7c"/>
<polygon points="192.7,138.3 189.6,141.7 189.3,139.3" fill="#fec877" stroke="#fec877"/>
<polygon points="76.9,126.3 75.9,130.3 76.6,127.4" fill="#9fd8a4" stroke="#9fd8a4"/>
<polygon points="73,141.6 72.2,145.8 73.1,142.9" fill="#f88c51" stroke="#f88c51"/>
<polygon points="196.1,137.2 196.7,140.3 192.7,138.3" fill="#fee08b" stroke="#fee08b"/>
<polygon points="196.1,137.2 199.5,136.1 200.2,139.6" fill="#feeb9d" stroke="#feeb9d"/>
<polygon points="200.2,139.6 199.5,136.1 202.9,135" fill="#fff2aa" stroke="#fff2aa"/>
<polygon points="206.3,133.9 203.7,138.9 202.9,135" fill="#fffdbc" stroke="#fffdbc"/>
<polygon points="75.2,133.1 74.5,136 74.1,140.1" fill="#fffab6" stroke="#fffab6"/>
<polygon points="206.3,133.9 209.8,132.8 210.8,137.4" fill="#f5fbaf" stroke="#f5fbaf"/>
<polygon points="78.3,117.7 77.9,120.5 78.1,121.7" fill="#5b53a4" stroke="#5b53a4"/>
<polygon points="210.8,137.4 209.8,132.8 213.2,131.7" fill="#eff9a6" stroke="#eff9a6"/>
<polygon points="193.1,141 189.6,141.7 192.7,138.3" fill="#fed27f" stroke="#fed27f"/>
<polygon points="70.3,151.5 70.1,155.7 71.2,148.6" fill="#ab0f45" stroke="#ab0f45"/>
<polygon points="192.7,138.3 196.7,140.3 193.1,141" fill="#fede89" stroke="#fede89"/>
<polygon points="77.4,124.5 77.9,120.5 76.6,127.4" fill="#3f97b7" stroke="#3f97b7"/>
<polygon points="213.2,131.7 216.6,130.6 217.9,136" fill="#dff299" stroke="#dff299"/>
<polygon points="73.1,142.9 74.1,140.1 74.5,136" fill="#fee18d" stroke="#fee18d"/>
<polygon points="200.2,139.6 196.7,140.3 196.1,137.2" fill="#fee999" stroke="#fee999"/>
<polygon points="221.5,135.3 216.6,130.6 220,129.5" fill="#caea9e" stroke="#caea9e"/>
<polygon points="75,137.2 75.9,130.3 75.2,133.1" fill="#e7f59a" stroke="#e7f59a"/>
<polygon points="202.9,135 203.7,138.9 200.2,139.6" fill="#fff7b2" stroke="#fff7b2"/>
<polygon points="78.1,121.7 77.9,120.5 77.4,124.5" fill="#496aaf" stroke="#496aaf"/>
<polygon points="206.3,133.9 207.3,138.2 203.7,138.9" fill="#fefebd" stroke="#fefebd"/>
<polygon points="72.2,145.8 71.2,148.6 71.3,152.8" fill="#e1504b" stroke="#e1504b"/>
<polygon points="210.8,137.4 207.3,138.2 206.3,133.9" fill="#f9fcb5" stroke="#f9fcb5"/>
<polygon points="74.1,140.1 75,137.2 75.2,133.1" fill="#fbfdb8" stroke="#fbfdb8"/>
<polygon points="213.2,131.7 214.4,136.7 210.8,137.4" fill="#edf8a3" stroke="#edf8a3"/>
<polygon points="76.6,127.4 75.9,130.3 76,134.3" fill="#a2d9a4" stroke="#a2d9a4"/>
<polygon points="217.9,136 214.4,136.7 213.2,131.7" fill="#e8f69b" stroke="#e8f69b"/>
<polygon points="71.2,148.6 70.1,155.7 71.3,152.8" fill="#c1274a" stroke="#c1274a"/>
<polygon points="73.1,142.9 72.2,145.8 72.4,150" fill="#f98e52" stroke="#f98e52"/>
<polygon points="217.9,136 216.6,130.6 221.5,135.3" fill="#d6ee9b" stroke="#d6ee9b"/>
<polygon points="76,134.3 75.9,130.3 75,137.2" fill="#d1ed9c" stroke="#d1ed9c"/>
<polygon points="189.6,141.7 193.1,141 192.8,143.6" fill="#fedc88" stroke="#fedc88"/>
<polygon points="193.1,141 196.7,140.3 196.3,143.3" fill="#fee695" stroke="#fee695"/>
<polygon points="71.3,152.8 72.4,150 72.2,145.8" fill="#ed6246" stroke="#ed6246"/>
<polygon points="76.6,127.4 77.9,128.6 77.4,124.5" fill="#4199b6" stroke="#4199b6"/>
<polygon points="200.2,139.6 196.3,143.3 196.7,140.3" fill="#feec9f" stroke="#feec9f"/>
<polygon points="73.1,142.9 74.8,144.2 74.1,140.1" fill="#fee18d" stroke="#fee18d"/>
<polygon points="76,134.3 77,131.5 76.6,127.4" fill="#86cfa5" stroke="#86cfa5"/>
<polygon points="189.6,141.7 192.8,143.6 189.2,143.9" fill="#fedc88" stroke="#fedc88"/>
<polygon points="203.5,142.8 200.2,139.6 203.7,138.9" fill="#fff7b2" stroke="#fff7b2"/>
<polygon points="73.1,142.9 72.4,150 73.6,147.1" fill="#fca85e" stroke="#fca85e"/>
<polygon points="203.7,138.9 207.3,138.2 203.5,142.8" fill="#fffebe" stroke="#fffebe"/>
<polygon points="75,137.2 74.1,140.1 74.8,144.2" fill="#fffab6" stroke="#fffab6"/>
<polygon points="192.8,143.6 193.1,141 196.3,143.3" fill="#fee695" stroke="#fee695"/>
<polygon points="76.6,127.4 77,131.5 77.9,128.6" fill="#58b2ac" stroke="#58b2ac"/>
<polygon points="78.9,125.7 78.1,121.7 77.4,124.5" fill="#5956a5" stroke="#5956a5"/>
<polygon points="207.1,142.5 207.3,138.2 210.8,137.4" fill="#f9fcb5" stroke="#f9fcb5"/>
<polygon points="73.6,147.1 74.8,144.2 73.1,142.9" fill="#fed07e" stroke="#fed07e"/>
<polygon points="199.9,143 196.3,143.3 200.2,139.6" fill="#fff1a8" stroke="#fff1a8"/>
<polygon points="210.8,137.4 214.4,136.7 210.7,142.2" fill="#f2faaa" stroke="#f2faaa"/>
<polygon points="199.9,143 200.2,139.6 203.5,142.8" fill="#fff6b0" stroke="#fff6b0"/>
<polygon points="77.4,124.5 77.9,128.6 78.9,125.7" fill="#466eb1" stroke="#466eb1"/>
<polygon points="214.4,136.7 217.9,136 217.9,141.6" fill="#e9f69d" stroke="#e9f69d"/>
<polygon points="76,134.3 75,137.2 77.1,138.4" fill="#d1ed9c" stroke="#d1ed9c"/>
<polygon points="71.3,152.8 70.1,155.7 72.5,157.1" fill="#c52c4b" stroke="#c52c4b"/>
<polygon points="217.9,141.6 217.9,136 221.5,135.3" fill="#e1f399" stroke="#e1f399"/>
<polygon points="207.3,138.2 207.1,142.5 203.5,142.8" fill="#fefebd" stroke="#fefebd"/>
<polygon points="75.9,141.3 75,137.2 74.8,144.2" fill="#fbfdb8" stroke="#fbfdb8"/>
<polygon points="72.5,157.1 72.4,150 71.3,152.8" fill="#e3534a" stroke="#e3534a"/>
<polygon points="76,134.3 77.1,138.4 77,131.5" fill="#a4daa4" stroke="#a4daa4"/>
<polygon points="210.8,137.4 210.7,142.2 207.1,142.5" fill="#f8fcb4" stroke="#f8fcb4"/>
<polygon points="192.8,143.6 188,146.1 189.2,143.9" fill="#fee593" stroke="#fee593"/>
<polygon points="77.1,138.4 75,137.2 75.9,141.3" fill="#e7f59a" stroke="#e7f59a"/>
<polygon points="210.7,142.2 214.4,136.7 214.3,141.9" fill="#f1f9a9" stroke="#f1f9a9"/>
<polygon points="191.6,146.2 192.8,143.6 196.3,143.3" fill="#feeb9d" stroke="#feeb9d"/>
<polygon points="72.5,157.1 70.1,155.7 71.2,160" fill="#b11747" stroke="#b11747"/>
<polygon points="217.9,141.6 214.3,141.9 214.4,136.7" fill="#edf8a3" stroke="#edf8a3"/>
<polygon points="73.6,147.1 72.4,150 75.2,151.2" fill="#fcaa5f" stroke="#fcaa5f"/>
<polygon points="77,131.5 79.5,132.6 77.9,128.6" fill="#459eb4" stroke="#459eb4"/>
<polygon points="221.5,135.3 221.5,141.3 217.9,141.6" fill="#e1f399" stroke="#e1f399"/>
<polygon points="199.9,143 198.7,146.5 196.3,143.3" fill="#fff3ac" stroke="#fff3ac"/>
<polygon points="191.6,146.2 188,146.1 192.8,143.6" fill="#feea9b" stroke="#feea9b"/>
<polygon points="73.6,147.1 75.2,151.2 74.8,144.2" fill="#fed07e" stroke="#fed07e"/>
<polygon points="77,131.5 77.1,138.4 78.3,135.5" fill="#89d0a4" stroke="#89d0a4"/>
<polygon points="73.9,154.1 72.4,150 72.5,157.1" fill="#ef6645" stroke="#ef6645"/>
<polygon points="77.9,128.6 79.5,132.6 78.9,125.7" fill="#4471b2" stroke="#4471b2"/>
<polygon points="199.9,143 203.5,142.8 202.3,146.6" fill="#fffab6" stroke="#fffab6"/>
<polygon points="196.3,143.3 195.1,146.4 191.6,146.2" fill="#fff0a6" stroke="#fff0a6"/>
<polygon points="75.2,151.2 72.4,150 73.9,154.1" fill="#f99355" stroke="#f99355"/>
<polygon points="78.3,135.5 79.5,132.6 77,131.5" fill="#5ab4ab" stroke="#5ab4ab"/>
<polygon points="205.8,146.7 203.5,142.8 207.1,142.5" fill="#ffffbe" stroke="#ffffbe"/>
<polygon points="198.7,146.5 195.1,146.4 196.3,143.3" fill="#fff2aa" stroke="#fff2aa"/>
<polygon points="74.8,144.2 77.9,145.3 75.9,141.3" fill="#fbfdb8" stroke="#fbfdb8"/>
<polygon points="205.8,146.7 207.1,142.5 210.7,142.2" fill="#fbfdb8" stroke="#fbfdb8"/>
<polygon points="202.3,146.6 198.7,146.5 199.9,143" fill="#fff8b4" stroke="#fff8b4"/>
<polygon points="74.8,144.2 75.2,151.2 76.6,148.3" fill="#fee28f" stroke="#fee28f"/>
<polygon points="79.3,142.4 77.1,138.4 75.9,141.3" fill="#d3ed9c" stroke="#d3ed9c"/>
<polygon points="78.9,125.7 79.5,132.6 80.7,129.7" fill="#545ca8" stroke="#545ca8"/>
<polygon points="186.1,148.2 188,146.1 191.6,146.2" fill="#feefa3" stroke="#feefa3"/>
<polygon points="210.7,142.2 214.3,141.9 213,147" fill="#f4faad" stroke="#f4faad"/>
<polygon points="205.8,146.7 202.3,146.6 203.5,142.8" fill="#fffebe" stroke="#fffebe"/>
<polygon points="76.6,148.3 77.9,145.3 74.8,144.2" fill="#fffab6" stroke="#fffab6"/>
<polygon points="73.5,164.2 72.5,157.1 71.2,160" fill="#b81e48" stroke="#b81e48"/>
<polygon points="217.9,141.6 216.6,147.1 214.3,141.9" fill="#eff9a6" stroke="#eff9a6"/>
<polygon points="195.1,146.4 189.5,148.7 191.6,146.2" fill="#fff2aa" stroke="#fff2aa"/>
<polygon points="78.3,135.5 77.1,138.4 80.6,139.4" fill="#8fd2a4" stroke="#8fd2a4"/>
<polygon points="221.5,141.3 216.6,147.1 217.9,141.6" fill="#ebf7a0" stroke="#ebf7a0"/>
<polygon points="205.8,146.7 210.7,142.2 209.4,146.9" fill="#fafdb7" stroke="#fafdb7"/>
<polygon points="73.9,154.1 72.5,157.1 75,161.2" fill="#e55749" stroke="#e55749"/>
<polygon points="75.9,141.3 77.9,145.3 79.3,142.4" fill="#e8f69b" stroke="#e8f69b"/>
<polygon points="78.3,135.5 80.6,139.4 79.5,132.6" fill="#5cb7aa" stroke="#5cb7aa"/>
<polygon points="213,147 209.4,146.9 210.7,142.2" fill="#f7fcb2" stroke="#f7fcb2"/>
<polygon points="191.6,146.2 189.5,148.7 186.1,148.2" fill="#fff3ac" stroke="#fff3ac"/>
<polygon points="73.9,154.1 76.5,158.2 75.2,151.2" fill="#fa9656" stroke="#fa9656"/>
<polygon points="195.1,146.4 198.7,146.5 196.5,149.8" fill="#fff7b2" stroke="#fff7b2"/>
<polygon points="77.1,138.4 79.3,142.4 80.6,139.4" fill="#aadca4" stroke="#aadca4"/>
<polygon points="214.3,141.9 216.6,147.1 213,147" fill="#f3faac" stroke="#f3faac"/>
<polygon points="73.5,164.2 75,161.2 72.5,157.1" fill="#cd364d" stroke="#cd364d"/>
<polygon points="196.5,149.8 198.7,146.5 202.3,146.6" fill="#fffbb8" stroke="#fffbb8"/>
<polygon points="195.1,146.4 193,149.3 189.5,148.7" fill="#fff6b0" stroke="#fff6b0"/>
<polygon points="79.5,132.6 83.4,133.5 80.7,129.7" fill="#5061aa" stroke="#5061aa"/>
<polygon points="76.6,148.3 75.2,151.2 79.5,152.2" fill="#fee28f" stroke="#fee28f"/>
<polygon points="196.5,149.8 193,149.3 195.1,146.4" fill="#fff8b4" stroke="#fff8b4"/>
<polygon points="75,161.2 76.5,158.2 73.9,154.1" fill="#f36b43" stroke="#f36b43"/>
<polygon points="220.2,147.2 216.6,147.1 221.5,141.3" fill="#ecf7a1" stroke="#ecf7a1"/>
<polygon points="79.5,132.6 80.6,139.4 82,136.5" fill="#4ba4b1" stroke="#4ba4b1"/>
<polygon points="199.9,150.3 202.3,146.6 205.8,146.7" fill="#fffebe" stroke="#fffebe"/>
<polygon points="80.9,149.2 77.9,145.3 76.6,148.3" fill="#fbfdb8" stroke="#fbfdb8"/>
<polygon points="79.5,132.6 82,136.5 83.4,133.5" fill="#3d79b6" stroke="#3d79b6"/>
<polygon points="75.2,151.2 76.5,158.2 78,155.2" fill="#fdaf62" stroke="#fdaf62"/>
<polygon points="189.5,148.7 186.8,151 186.1,148.2" fill="#fff8b4" stroke="#fff8b4"/>
<polygon points="199.9,150.3 196.5,149.8 202.3,146.6" fill="#fffdbc" stroke="#fffdbc"/>
<polygon points="80.9,149.2 79.3,142.4 77.9,145.3" fill="#e8f69b" stroke="#e8f69b"/>
<polygon points="79.5,152.2 75.2,151.2 78,155.2" fill="#fed27f" stroke="#fed27f"/>
<polygon points="209.4,146.9 206.9,151.4 205.8,146.7" fill="#fcfeba" stroke="#fcfeba"/>
<polygon points="193,149.3 186.8,151 189.5,148.7" fill="#fffbb8" stroke="#fffbb8"/>
<polygon points="76.6,148.3 79.5,152.2 80.9,149.2" fill="#fffab6" stroke="#fffab6"/>
<polygon points="80.6,139.4 79.3,142.4 82.4,146.2" fill="#aadca4" stroke="#aadca4"/>
<polygon points="186.1,148.2 186.8,151 183.5,150.1" fill="#fffcba" stroke="#fffcba"/>
<polygon points="205.8,146.7 203.4,150.9 199.9,150.3" fill="#ffffbe" stroke="#ffffbe"/>
<polygon points="210.4,152 209.4,146.9 213,147" fill="#f9fcb5" stroke="#f9fcb5"/>
<polygon points="213,147 216.6,147.1 210.4,152" fill="#f6fbb0" stroke="#f6fbb0"/>
<polygon points="205.8,146.7 206.9,151.4 203.4,150.9" fill="#fefebd" stroke="#fefebd"/>
<polygon points="78.7,165.2 75,161.2 73.5,164.2" fill="#d23a4e" stroke="#d23a4e"/>
<polygon points="82.4,146.2 79.3,142.4 80.9,149.2" fill="#d6ee9b" stroke="#d6ee9b"/>
<polygon points="80.6,139.4 85.4,140.2 82,136.5" fill="#4ea7b0" stroke="#4ea7b0"/>
<polygon points="196.5,149.8 193.3,152.9 193,149.3" fill="#fffcba" stroke="#fffcba"/>
<polygon points="190,152 186.8,151 193,149.3" fill="#fffdbc" stroke="#fffdbc"/>
<polygon points="80.2,162.1 76.5,158.2 75,161.2" fill="#f46d43" stroke="#f46d43"/>
<polygon points="210.4,152 206.9,151.4 209.4,146.9" fill="#fbfdb8" stroke="#fbfdb8"/>
<polygon points="80.6,139.4 82.4,146.2 83.9,143.2" fill="#94d4a4" stroke="#94d4a4"/>
<polygon points="83.4,133.5 82,136.5 86.9,137.2" fill="#496aaf" stroke="#496aaf"/>
<polygon points="193.3,152.9 196.5,149.8 199.9,150.3" fill="#fffdbc" stroke="#fffdbc"/>
<polygon points="220.2,147.2 217.4,153.1 216.6,147.1" fill="#f2faaa" stroke="#f2faaa"/>
<polygon points="76.5,158.2 81.8,159.1 78,155.2" fill="#fdb163" stroke="#fdb163"/>
<polygon points="83.9,143.2 85.4,140.2 80.6,139.4" fill="#64c0a6" stroke="#64c0a6"/>
<polygon points="193,149.3 193.3,152.9 190,152" fill="#fffdbc" stroke="#fffdbc"/>
<polygon points="183.5,150.1 180.2,151.9 186.8,151" fill="#fdfebb" stroke="#fdfebb"/>
<polygon points="77.1,168.3 78.7,165.2 73.5,164.2" fill="#c32a4b" stroke="#c32a4b"/>
<polygon points="78,155.2 81.8,159.1 79.5,152.2" fill="#fed481" stroke="#fed481"/>
<polygon points="210.4,152 216.6,147.1 213.9,152.5" fill="#f7fcb2" stroke="#f7fcb2"/>
<polygon points="82,136.5 85.4,140.2 86.9,137.2" fill="#3880b9" stroke="#3880b9"/>
<polygon points="75,161.2 78.7,165.2 80.2,162.1" fill="#ea5e47" stroke="#ea5e47"/>
<polygon points="80.9,149.2 79.5,152.2 83.4,156" fill="#fffab6" stroke="#fffab6"/>
<polygon points="199.9,150.3 203.4,150.9 199.9,154.8" fill="#ffffbe" stroke="#ffffbe"/>
<polygon points="216.6,147.1 217.4,153.1 213.9,152.5" fill="#f6fbb0" stroke="#f6fbb0"/>
<polygon points="80.2,162.1 81.8,159.1 76.5,158.2" fill="#fb9d59" stroke="#fb9d59"/>
<polygon points="199.9,150.3 196.6,153.9 193.3,152.9" fill="#fffebe" stroke="#fffebe"/>
<polygon points="80.9,149.2 86.5,149.9 82.4,146.2" fill="#d8ef9b" stroke="#d8ef9b"/>
<polygon points="206.9,151.4 199.9,154.8 203.4,150.9" fill="#fefebd" stroke="#fefebd"/>
<polygon points="180.2,151.9 183.2,153.2 186.8,151" fill="#fafdb7" stroke="#fafdb7"/>
<polygon points="186.2,154.5 190,152 186.8,151" fill="#fefebd" stroke="#fefebd"/>
<polygon points="79.5,152.2 81.8,159.1 83.4,156" fill="#fee491" stroke="#fee491"/>
<polygon points="199.9,154.8 196.6,153.9 199.9,150.3" fill="#fffebe" stroke="#fffebe"/>
<polygon points="83.9,143.2 82.4,146.2 88.1,146.8" fill="#97d5a4" stroke="#97d5a4"/>
<polygon points="83.4,156 85,153 80.9,149.2" fill="#fbfdb8" stroke="#fbfdb8"/>
<polygon points="203.2,155.8 206.9,151.4 210.4,152" fill="#fdfebb" stroke="#fdfebb"/>
<polygon points="88.1,146.8 85.4,140.2 83.9,143.2" fill="#66c2a5" stroke="#66c2a5"/>
<polygon points="186.8,151 183.2,153.2 186.2,154.5" fill="#fcfeba" stroke="#fcfeba"/>
<polygon points="80.9,149.2 85,153 86.5,149.9" fill="#e9f69d" stroke="#e9f69d"/>
<polygon points="189.3,155.9 193.3,152.9 190,152" fill="#ffffbe" stroke="#ffffbe"/>
<polygon points="89.7,143.7 86.9,137.2 85.4,140.2" fill="#3585bb" stroke="#3585bb"/>
<polygon points="82.4,146.2 86.5,149.9 88.1,146.8" fill="#b1dfa3" stroke="#b1dfa3"/>
<polygon points="203.2,155.8 199.9,154.8 206.9,151.4" fill="#ffffbe" stroke="#ffffbe"/>
<polygon points="176.2,153.4 183.2,153.2 180.2,151.9" fill="#f4faad" stroke="#f4faad"/>
<polygon points="77.1,168.3 81.9,172.1 78.7,165.2" fill="#c9314c" stroke="#c9314c"/>
<polygon points="189.3,155.9 190,152 186.2,154.5" fill="#fdfebb" stroke="#fdfebb"/>
<polygon points="213.9,152.5 209.9,157.7 210.4,152" fill="#fcfeba" stroke="#fcfeba"/>
<polygon points="88.1,146.8 89.7,143.7 85.4,140.2" fill="#56b0ad" stroke="#56b0ad"/>
<polygon points="196.6,153.9 193.3,152.9 192.3,157.2" fill="#ffffbe" stroke="#ffffbe"/>
<polygon points="78.7,165.2 85.1,165.8 80.2,162.1" fill="#f57547" stroke="#f57547"/>
<polygon points="85.1,165.8 81.8,159.1 80.2,162.1" fill="#fba05b" stroke="#fba05b"/>
<polygon points="210.4,152 206.5,156.8 203.2,155.8" fill="#fefebd" stroke="#fefebd"/>
<polygon points="91.3,140.7 86.9,137.2 89.7,143.7" fill="#4175b4" stroke="#4175b4"/>
<polygon points="213.9,152.5 217.4,153.1 209.9,157.7" fill="#fafdb7" stroke="#fafdb7"/>
<polygon points="199.9,154.8 196.6,153.9 192.3,157.2" fill="#ffffbe" stroke="#ffffbe"/>
<polygon points="83.4,156 81.8,159.1 88.3,159.6" fill="#fee593" stroke="#fee593"/>
<polygon points="186.2,154.5 183.2,153.2 178.9,155.1" fill="#f7fcb2" stroke="#f7fcb2"/>
<polygon points="193.3,152.9 189.3,155.9 192.3,157.2" fill="#fefebd" stroke="#fefebd"/>
<polygon points="176.2,153.4 178.9,155.1 183.2,153.2" fill="#f3faac" stroke="#f3faac"/>
<polygon points="83.4,156 88.3,159.6 85,153" fill="#fffab6" stroke="#fffab6"/>
<polygon points="210.4,152 209.9,157.7 206.5,156.8" fill="#fefebd" stroke="#fefebd"/>
<polygon points="78.7,165.2 81.9,172.1 83.5,169" fill="#da464d" stroke="#da464d"/>
<polygon points="86.5,149.9 85,153 91.5,153.3" fill="#daf09a" stroke="#daf09a"/>
<polygon points="83.5,169 85.1,165.8 78.7,165.2" fill="#ee6445" stroke="#ee6445"/>
<polygon points="86.5,149.9 91.5,153.3 88.1,146.8" fill="#b3e0a2" stroke="#b3e0a2"/>
<polygon points="86.7,162.7 81.8,159.1 85.1,165.8" fill="#fdb768" stroke="#fdb768"/>
<polygon points="181.7,156.8 189.3,155.9 186.2,154.5" fill="#fafdb7" stroke="#fafdb7"/>
<polygon points="88.3,159.6 81.8,159.1 86.7,162.7" fill="#fed884" stroke="#fed884"/>
<polygon points="94.7,147 89.7,143.7 88.1,146.8" fill="#5cb7aa" stroke="#5cb7aa"/>
<polygon points="178.9,155.1 181.7,156.8 186.2,154.5" fill="#f6fbb0" stroke="#f6fbb0"/>
<polygon points="198.4,159.9 203.2,155.8 199.9,154.8" fill="#fffebe" stroke="#fffebe"/>
<polygon points="195.4,158.6 199.9,154.8 192.3,157.2" fill="#ffffbe" stroke="#ffffbe"/>
<polygon points="209.9,157.7 217.4,153.1 213.2,158.7" fill="#fdfebb" stroke="#fdfebb"/>
<polygon points="88.3,159.6 89.9,156.4 85,153" fill="#fbfdb8" stroke="#fbfdb8"/>
<polygon points="96.3,143.9 91.3,140.7 89.7,143.7" fill="#3b7cb7" stroke="#3b7cb7"/>
<polygon points="91.5,153.3 85,153 89.9,156.4" fill="#eaf79e" stroke="#eaf79e"/>
<polygon points="174,156.7 178.9,155.1 176.2,153.4" fill="#eef8a4" stroke="#eef8a4"/>
<polygon points="88.1,146.8 91.5,153.3 93.1,150.1" fill="#9fd8a4" stroke="#9fd8a4"/>
<polygon points="88.1,146.8 93.1,150.1 94.7,147" fill="#71c6a5" stroke="#71c6a5"/>
<polygon points="198.4,159.9 199.9,154.8 195.4,158.6" fill="#fffdbc" stroke="#fffdbc"/>
<polygon points="192.3,157.2 189.3,155.9 184.4,158.5" fill="#fcfeba" stroke="#fcfeba"/>
<polygon points="206.5,156.8 203.2,155.8 201.5,161.3" fill="#fffdbc" stroke="#fffdbc"/>
<polygon points="89.7,143.7 94.7,147 96.3,143.9" fill="#3b92b9" stroke="#3b92b9"/>
<polygon points="171.7,154.7 174,156.7 176.2,153.4" fill="#eaf79e" stroke="#eaf79e"/>
<polygon points="184.4,158.5 189.3,155.9 181.7,156.8" fill="#f9fcb5" stroke="#f9fcb5"/>
<polygon points="201.5,161.3 209.9,157.7 206.5,156.8" fill="#fffdbc" stroke="#fffdbc"/>
<polygon points="176.4,158.8 181.7,156.8 178.9,155.1" fill="#f3faac" stroke="#f3faac"/>
<polygon points="83.5,169 81.9,172.1 89.5,172.4" fill="#dd4a4c" stroke="#dd4a4c"/>
<polygon points="203.2,155.8 198.4,159.9 201.5,161.3" fill="#fffcba" stroke="#fffcba"/>
<polygon points="83.5,169 89.5,172.4 85.1,165.8" fill="#f26944" stroke="#f26944"/>
<polygon points="85.1,165.8 92.6,166 86.7,162.7" fill="#fdb96a" stroke="#fdb96a"/>
<polygon points="92.6,166 88.3,159.6 86.7,162.7" fill="#feda86" stroke="#feda86"/>
<polygon points="178.9,155.1 174,156.7 176.4,158.8" fill="#eff9a6" stroke="#eff9a6"/>
<polygon points="184.4,158.5 187.1,160.2 192.3,157.2" fill="#fdfebb" stroke="#fdfebb"/>
<polygon points="89.9,156.4 88.3,159.6 94.2,162.8" fill="#fffab6" stroke="#fffab6"/>
<polygon points="192.3,157.2 189.9,161.9 195.4,158.6" fill="#fffebe" stroke="#fffebe"/>
<polygon points="91.5,153.3 89.9,156.4 95.7,159.6" fill="#ebf7a0" stroke="#ebf7a0"/>
<polygon points="98.8,153.2 93.1,150.1 91.5,153.3" fill="#a4daa4" stroke="#a4daa4"/>
<polygon points="213.2,158.7 209.9,157.7 204.6,162.6" fill="#fffcba" stroke="#fffcba"/>
<polygon points="100.4,150 94.7,147 93.1,150.1" fill="#62bda7" stroke="#62bda7"/>
<polygon points="94.7,147 101.9,146.8 96.3,143.9" fill="#3585bb" stroke="#3585bb"/>
<polygon points="168.5,158 174,156.7 171.7,154.7" fill="#e7f59a" stroke="#e7f59a"/>
<polygon points="181.7,156.8 178.7,160.8 184.4,158.5" fill="#f7fcb2" stroke="#f7fcb2"/>
<polygon points="192.3,157.2 187.1,160.2 189.9,161.9" fill="#ffffbe" stroke="#ffffbe"/>
<polygon points="189.9,161.9 198.4,159.9 195.4,158.6" fill="#fffdbc" stroke="#fffdbc"/>
<polygon points="89.5,172.4 81.9,172.1 88,175.6" fill="#d63f4f" stroke="#d63f4f"/>
<polygon points="91.1,169.2 92.6,166 85.1,165.8" fill="#fca85e" stroke="#fca85e"/>
<polygon points="85.1,165.8 89.5,172.4 91.1,169.2" fill="#f67f4b" stroke="#f67f4b"/>
<polygon points="201.5,161.3 204.6,162.6 209.9,157.7" fill="#fffbb8" stroke="#fffbb8"/>
<polygon points="171.7,154.7 166.6,155.7 168.5,158" fill="#ddf19a" stroke="#ddf19a"/>
<polygon points="94.2,162.8 88.3,159.6 92.6,166" fill="#fee695" stroke="#fee695"/>
<polygon points="94.2,162.8 95.7,159.6 89.9,156.4" fill="#fbfdb8" stroke="#fbfdb8"/>
<polygon points="97.3,156.4 98.8,153.2 91.5,153.3" fill="#bae3a1" stroke="#bae3a1"/>
<polygon points="91.5,153.3 95.7,159.6 97.3,156.4" fill="#dff299" stroke="#dff299"/>
<polygon points="93.1,150.1 98.8,153.2 100.4,150" fill="#79c9a5" stroke="#79c9a5"/>
<polygon points="100.4,150 101.9,146.8 94.7,147" fill="#439bb5" stroke="#439bb5"/>
<polygon points="176.4,158.8 178.7,160.8 181.7,156.8" fill="#f4faad" stroke="#f4faad"/>
<polygon points="184.4,158.5 178.7,160.8 187.1,160.2" fill="#fafdb7" stroke="#fafdb7"/>
<polygon points="201.5,161.3 198.4,159.9 192.6,163.7" fill="#fffab6" stroke="#fffab6"/>
<polygon points="176.4,158.8 174,156.7 170.4,160.4" fill="#edf8a3" stroke="#edf8a3"/>
<polygon points="204.6,162.6 207.7,164 213.2,158.7" fill="#fff8b4" stroke="#fff8b4"/>
<polygon points="174,156.7 168.5,158 170.4,160.4" fill="#e9f69d" stroke="#e9f69d"/>
<polygon points="192.6,163.7 198.4,159.9 189.9,161.9" fill="#fffbb8" stroke="#fffbb8"/>
<polygon points="166.6,155.7 160.9,156.4 168.5,158" fill="#cfec9d" stroke="#cfec9d"/>
<polygon points="100.4,150 106.6,152.6 101.9,146.8" fill="#49a2b2" stroke="#49a2b2"/>
<polygon points="100.4,150 98.8,153.2 105.2,155.8" fill="#7ecca5" stroke="#7ecca5"/>
<polygon points="105.2,155.8 98.8,153.2 97.3,156.4" fill="#aadca4" stroke="#aadca4"/>
<polygon points="170.4,160.4 178.7,160.8 176.4,158.8" fill="#f1f9a9" stroke="#f1f9a9"/>
<polygon points="187.1,160.2 178.7,160.8 181.1,162.9" fill="#fbfdb8" stroke="#fbfdb8"/>
<polygon points="103.8,159.1 97.3,156.4 95.7,159.6" fill="#e1f399" stroke="#e1f399"/>
<polygon points="100.9,165.6 95.7,159.6 94.2,162.8" fill="#fffbb8" stroke="#fffbb8"/>
<polygon points="187.1,160.2 183.4,164.9 189.9,161.9" fill="#fffebe" stroke="#fffebe"/>
<polygon points="94.2,162.8 92.6,166 99.4,168.9" fill="#fedc88" stroke="#fedc88"/>
<polygon points="99.4,168.9 92.6,166 91.1,169.2" fill="#fdbd6d" stroke="#fdbd6d"/>
<polygon points="101.9,146.8 106.6,152.6 108.1,149.3" fill="#3d95b8" stroke="#3d95b8"/>
<polygon points="91.1,169.2 89.5,172.4 98,172.1" fill="#f7844e" stroke="#f7844e"/>
<polygon points="168.5,158 160.9,156.4 162.4,159" fill="#d1ed9c" stroke="#d1ed9c"/>
<polygon points="105.2,155.8 106.6,152.6 100.4,150" fill="#6ec5a5" stroke="#6ec5a5"/>
<polygon points="192.6,163.7 195.4,165.4 201.5,161.3" fill="#fff7b2" stroke="#fff7b2"/>
<polygon points="198.1,167.1 204.6,162.6 201.5,161.3" fill="#fff5ae" stroke="#fff5ae"/>
<polygon points="95.1,178.6 89.5,172.4 88,175.6" fill="#d9444d" stroke="#d9444d"/>
<polygon points="105.2,155.8 97.3,156.4 103.8,159.1" fill="#bfe5a0" stroke="#bfe5a0"/>
<polygon points="170.4,160.4 168.5,158 162.4,159" fill="#e4f498" stroke="#e4f498"/>
<polygon points="181.1,162.9 183.4,164.9 187.1,160.2" fill="#ffffbe" stroke="#ffffbe"/>
<polygon points="95.7,159.6 102.3,162.3 103.8,159.1" fill="#ecf7a1" stroke="#ecf7a1"/>
<polygon points="192.6,163.7 189.9,161.9 183.4,164.9" fill="#fffbb8" stroke="#fffbb8"/>
<polygon points="102.3,162.3 95.7,159.6 100.9,165.6" fill="#fbfdb8" stroke="#fbfdb8"/>
<polygon points="172.4,162.7 178.7,160.8 170.4,160.4" fill="#f2faaa" stroke="#f2faaa"/>
<polygon points="99.4,168.9 100.9,165.6 94.2,162.8" fill="#fee797" stroke="#fee797"/>
<polygon points="195.4,165.4 198.1,167.1 201.5,161.3" fill="#fff3ac" stroke="#fff3ac"/>
<polygon points="91.1,169.2 98,172.1 99.4,168.9" fill="#fdaf62" stroke="#fdaf62"/>
<polygon points="98,172.1 89.5,172.4 96.6,175.4" fill="#f57547" stroke="#f57547"/>
<polygon points="162.4,159 160.9,156.4 155.9,159.6" fill="#c6e89f" stroke="#c6e89f"/>
<polygon points="108.1,149.3 106.6,152.6 113.3,154.8" fill="#54aead" stroke="#54aead"/>
<polygon points="181.1,162.9 178.7,160.8 174.3,165.1" fill="#fafdb7" stroke="#fafdb7"/>
<polygon points="155.9,159.6 160.9,156.4 154.9,156.8" fill="#b8e2a1" stroke="#b8e2a1"/>
<polygon points="204.6,162.6 200.9,168.9 207.7,164" fill="#fff1a8" stroke="#fff1a8"/>
<polygon points="96.6,175.4 89.5,172.4 95.1,178.6" fill="#e55749" stroke="#e55749"/>
<polygon points="105.2,155.8 113.3,154.8 106.6,152.6" fill="#76c8a5" stroke="#76c8a5"/>
<polygon points="170.4,160.4 162.4,159 163.9,161.6" fill="#e6f598" stroke="#e6f598"/>
<polygon points="174.3,165.1 178.7,160.8 172.4,162.7" fill="#f7fcb2" stroke="#f7fcb2"/>
<polygon points="113.3,154.8 114.5,151.5 108.1,149.3" fill="#47a0b3" stroke="#47a0b3"/>
<polygon points="103.8,159.1 110.8,161.4 105.2,155.8" fill="#c1e6a0" stroke="#c1e6a0"/>
<polygon points="185.8,167 192.6,163.7 183.4,164.9" fill="#fff8b4" stroke="#fff8b4"/>
<polygon points="112,158.1 113.3,154.8 105.2,155.8" fill="#8fd2a4" stroke="#8fd2a4"/>
<polygon points="163.9,161.6 162.4,159 155.9,159.6" fill="#d6ee9b" stroke="#d6ee9b"/>
<polygon points="174.3,165.1 183.4,164.9 181.1,162.9" fill="#fefebd" stroke="#fefebd"/>
<polygon points="170.4,160.4 165.4,164.2 172.4,162.7" fill="#f0f9a7" stroke="#f0f9a7"/>
<polygon points="198.1,167.1 200.9,168.9 204.6,162.6" fill="#fff0a6" stroke="#fff0a6"/>
<polygon points="103.8,159.1 102.3,162.3 109.6,164.7" fill="#edf8a3" stroke="#edf8a3"/>
<polygon points="163.9,161.6 165.4,164.2 170.4,160.4" fill="#ecf7a1" stroke="#ecf7a1"/>
<polygon points="102.3,162.3 100.9,165.6 109.6,164.7" fill="#fcfeba" stroke="#fcfeba"/>
<polygon points="188.2,169.1 195.4,165.4 192.6,163.7" fill="#fff2aa" stroke="#fff2aa"/>
<polygon points="105.2,155.8 110.8,161.4 112,158.1" fill="#b3e0a2" stroke="#b3e0a2"/>
<polygon points="114.5,151.5 113.3,154.8 121.3,153.4" fill="#52abae" stroke="#52abae"/>
<polygon points="154.9,156.8 148.5,156.9 149.1,159.9" fill="#a7dba4" stroke="#a7dba4"/>
<polygon points="149.1,159.9 155.9,159.6 154.9,156.8" fill="#b5e1a2" stroke="#b5e1a2"/>
<polygon points="109.6,164.7 110.8,161.4 103.8,159.1" fill="#e6f598" stroke="#e6f598"/>
<polygon points="100.9,165.6 99.4,168.9 107.1,171.3" fill="#fee08b" stroke="#fee08b"/>
<polygon points="188.2,169.1 192.6,163.7 185.8,167" fill="#fff3ac" stroke="#fff3ac"/>
<polygon points="107.1,171.3 99.4,168.9 98,172.1" fill="#fdc171" stroke="#fdc171"/>
<polygon points="121.3,153.4 113.3,154.8 120.3,156.7" fill="#62bda7" stroke="#62bda7"/>
<polygon points="155.9,159.6 157,162.5 163.9,161.6" fill="#d8ef9b" stroke="#d8ef9b"/>
<polygon points="188.2,169.1 198.1,167.1 195.4,165.4" fill="#fff0a6" stroke="#fff0a6"/>
<polygon points="149.1,159.9 148.5,156.9 141.9,156.6" fill="#97d5a4" stroke="#97d5a4"/>
<polygon points="119.3,160 113.3,154.8 112,158.1" fill="#94d4a4" stroke="#94d4a4"/>
<polygon points="109.6,164.7 100.9,165.6 108.3,168" fill="#fffbb8" stroke="#fffbb8"/>
<polygon points="176.3,167.5 183.4,164.9 174.3,165.1" fill="#fffebe" stroke="#fffebe"/>
<polygon points="120.3,156.7 113.3,154.8 119.3,160" fill="#86cfa5" stroke="#86cfa5"/>
<polygon points="163.9,161.6 157,162.5 165.4,164.2" fill="#e9f69d" stroke="#e9f69d"/>
<polygon points="104.6,177.9 98,172.1 96.6,175.4" fill="#f67c4a" stroke="#f67c4a"/>
<polygon points="157,162.5 155.9,159.6 149.1,159.9" fill="#c8e99e" stroke="#c8e99e"/>
<polygon points="166.9,166.9 174.3,165.1 172.4,162.7" fill="#f9fcb5" stroke="#f9fcb5"/>
<polygon points="112,158.1 110.8,161.4 119.3,160" fill="#b8e2a1" stroke="#b8e2a1"/>
<polygon points="108.3,168 100.9,165.6 107.1,171.3" fill="#fee999" stroke="#fee999"/>
<polygon points="128.1,154.8 121.3,153.4 127.5,158.1" fill="#62bda7" stroke="#62bda7"/>
<polygon points="96.6,175.4 95.1,178.6 104.6,177.9" fill="#e95c47" stroke="#e95c47"/>
<polygon points="127.5,158.1 121.3,153.4 120.3,156.7" fill="#6bc4a5" stroke="#6bc4a5"/>
<polygon points="172.4,162.7 165.4,164.2 166.9,166.9" fill="#f5fbaf" stroke="#f5fbaf"/>
<polygon points="149.1,159.9 141.9,156.6 142,159.7" fill="#9fd8a4" stroke="#9fd8a4"/>
<polygon points="141.9,156.6 135,155.9 134.8,159.1" fill="#7ecca5" stroke="#7ecca5"/>
<polygon points="183.4,164.9 178.2,169.8 185.8,167" fill="#fff6b0" stroke="#fff6b0"/>
<polygon points="134.8,159.1 135,155.9 128.1,154.8" fill="#71c6a5" stroke="#71c6a5"/>
<polygon points="107.1,171.3 98,172.1 105.8,174.6" fill="#fdb567" stroke="#fdb567"/>
<polygon points="119.3,160 127.5,158.1 120.3,156.7" fill="#8fd2a4" stroke="#8fd2a4"/>
<polygon points="142,159.7 141.9,156.6 134.8,159.1" fill="#94d4a4" stroke="#94d4a4"/>
<polygon points="128.1,154.8 127.5,158.1 134.8,159.1" fill="#7ccaa5" stroke="#7ccaa5"/>
<polygon points="110.8,161.4 118.3,163.3 119.3,160" fill="#caea9e" stroke="#caea9e"/>
<polygon points="110.8,161.4 109.6,164.7 117.3,166.6" fill="#eef8a4" stroke="#eef8a4"/>
<polygon points="149.7,162.9 157,162.5 149.1,159.9" fill="#cdeb9d" stroke="#cdeb9d"/>
<polygon points="183.4,164.9 176.3,167.5 178.2,169.8" fill="#fff7b2" stroke="#fff7b2"/>
<polygon points="105.8,174.6 98,172.1 104.6,177.9" fill="#f99355" stroke="#f99355"/>
<polygon points="176.3,167.5 174.3,165.1 166.9,166.9" fill="#fefebd" stroke="#fefebd"/>
<polygon points="165.4,164.2 157,162.5 158,165.3" fill="#ebf7a0" stroke="#ebf7a0"/>
<polygon points="200.9,168.9 198.1,167.1 190.6,171.1" fill="#feea9b" stroke="#feea9b"/>
<polygon points="117.3,166.6 109.6,164.7 108.3,168" fill="#fcfeba" stroke="#fcfeba"/>
<polygon points="142.1,162.8 149.1,159.9 142,159.7" fill="#b8e2a1" stroke="#b8e2a1"/>
<polygon points="126.8,161.4 127.5,158.1 119.3,160" fill="#a4daa4" stroke="#a4daa4"/>
<polygon points="190.6,171.1 198.1,167.1 188.2,169.1" fill="#feeb9d" stroke="#feeb9d"/>
<polygon points="117.3,166.6 118.3,163.3 110.8,161.4" fill="#e8f69b" stroke="#e8f69b"/>
<polygon points="134.8,159.1 127.5,158.1 126.8,161.4" fill="#9cd7a4" stroke="#9cd7a4"/>
<polygon points="185.8,167 178.2,169.8 188.2,169.1" fill="#fff1a8" stroke="#fff1a8"/>
<polygon points="149.7,162.9 149.1,159.9 142.1,162.8" fill="#c6e89f" stroke="#c6e89f"/>
<polygon points="166.9,166.9 165.4,164.2 158,165.3" fill="#f3faac" stroke="#f3faac"/>
<polygon points="104.6,177.9 95.1,178.6 103.3,181.2" fill="#e2514a" stroke="#e2514a"/>
<polygon points="134.8,159.1 142.1,162.8 142,159.7" fill="#aedea3" stroke="#aedea3"/>
<polygon points="108.3,168 107.1,171.3 116.3,169.9" fill="#feea9b" stroke="#feea9b"/>
<polygon points="126.1,164.7 119.3,160 118.3,163.3" fill="#cfec9d" stroke="#cfec9d"/>
<polygon points="157,162.5 149.7,162.9 150.2,165.9" fill="#e1f399" stroke="#e1f399"/>
<polygon points="126.8,161.4 134.5,162.3 134.8,159.1" fill="#b1dfa3" stroke="#b1dfa3"/>
<polygon points="126.8,161.4 119.3,160 126.1,164.7" fill="#c1e6a0" stroke="#c1e6a0"/>
<polygon points="150.2,165.9 158,165.3 157,162.5" fill="#e9f69d" stroke="#e9f69d"/>
<polygon points="134.5,162.3 142.1,162.8 134.8,159.1" fill="#b5e1a2" stroke="#b5e1a2"/>
<polygon points="108.3,168 116.3,169.9 117.3,166.6" fill="#fffbb8" stroke="#fffbb8"/>
<polygon points="168.4,169.5 176.3,167.5 166.9,166.9" fill="#fffdbc" stroke="#fffdbc"/>
<polygon points="118.3,163.3 117.3,166.6 126.1,164.7" fill="#e9f69d" stroke="#e9f69d"/>
<polygon points="150.2,165.9 149.7,162.9 142.1,162.8" fill="#daf09a" stroke="#daf09a"/>
<polygon points="126.8,161.4 126.1,164.7 134.5,162.3" fill="#c8e99e" stroke="#c8e99e"/>
<polygon points="166.9,166.9 158,165.3 159,168.2" fill="#f6fbb0" stroke="#f6fbb0"/>
<polygon points="105.8,174.6 114.3,176.5 107.1,171.3" fill="#fdb96a" stroke="#fdb96a"/>
<polygon points="190.6,171.1 193,173.2 200.9,168.9" fill="#fee593" stroke="#fee593"/>
<polygon points="142.1,162.8 134.5,162.3 134.2,165.6" fill="#d1ed9c" stroke="#d1ed9c"/>
<polygon points="116.3,169.9 107.1,171.3 115.3,173.2" fill="#fee28f" stroke="#fee28f"/>
<polygon points="178.2,169.8 180.2,172.2 188.2,169.1" fill="#feec9f" stroke="#feec9f"/>
<polygon points="134.5,162.3 126.1,164.7 134.2,165.6" fill="#d8ef9b" stroke="#d8ef9b"/>
<polygon points="105.8,174.6 104.6,177.9 114.3,176.5" fill="#fa9857" stroke="#fa9857"/>
<polygon points="176.3,167.5 169.9,172.1 178.2,169.8" fill="#fff2aa" stroke="#fff2aa"/>
<polygon points="142.1,162.8 142.2,166 150.2,165.9" fill="#e4f498" stroke="#e4f498"/>
<polygon points="126.1,164.7 117.3,166.6 125.5,168" fill="#f0f9a7" stroke="#f0f9a7"/>
<polygon points="142.1,162.8 134.2,165.6 142.2,166" fill="#dff299" stroke="#dff299"/>
<polygon points="150.8,168.9 158,165.3 150.2,165.9" fill="#f1f9a9" stroke="#f1f9a9"/>
<polygon points="168.4,169.5 169.9,172.1 176.3,167.5" fill="#fff6b0" stroke="#fff6b0"/>
<polygon points="107.1,171.3 114.3,176.5 115.3,173.2" fill="#fec877" stroke="#fec877"/>
<polygon points="159,168.2 158,165.3 150.8,168.9" fill="#f6fbb0" stroke="#f6fbb0"/>
<polygon points="190.6,171.1 188.2,169.1 182.2,174.6" fill="#fee695" stroke="#fee695"/>
<polygon points="117.3,166.6 116.3,169.9 124.8,171.3" fill="#fffbb8" stroke="#fffbb8"/>
<polygon points="166.9,166.9 160.1,171 168.4,169.5" fill="#fffdbc" stroke="#fffdbc"/>
<polygon points="159,168.2 160.1,171 166.9,166.9" fill="#fefebd" stroke="#fefebd"/>
<polygon points="117.3,166.6 124.8,171.3 125.5,168" fill="#fcfeba" stroke="#fcfeba"/>
<polygon points="134.2,165.6 126.1,164.7 133.9,168.8" fill="#ebf7a0" stroke="#ebf7a0"/>
<polygon points="150.2,165.9 142.2,166 150.8,168.9" fill="#eff9a6" stroke="#eff9a6"/>
<polygon points="133.9,168.8 126.1,164.7 125.5,168" fill="#f0f9a7" stroke="#f0f9a7"/>
<polygon points="112.3,183.2 104.6,177.9 103.3,181.2" fill="#e85b48" stroke="#e85b48"/>
<polygon points="182.2,174.6 188.2,169.1 180.2,172.2" fill="#fee695" stroke="#fee695"/>
<polygon points="142.2,166 134.2,165.6 133.9,168.8" fill="#edf8a3" stroke="#edf8a3"/>
<polygon points="178.2,169.8 169.9,172.1 180.2,172.2" fill="#feec9f" stroke="#feec9f"/>
<polygon points="114.3,176.5 104.6,177.9 113.3,179.9" fill="#f88c51" stroke="#f88c51"/>
<polygon points="115.3,173.2 124.1,174.6 116.3,169.9" fill="#fee491" stroke="#fee491"/>
<polygon points="150.8,168.9 142.2,166 142.4,169.1" fill="#f3faac" stroke="#f3faac"/>
<polygon points="182.2,174.6 193,173.2 190.6,171.1" fill="#fee18d" stroke="#fee18d"/>
<polygon points="142.4,169.1 142.2,166 133.9,168.8" fill="#f3faac" stroke="#f3faac"/>
<polygon points="125.5,168 124.8,171.3 133.9,168.8" fill="#fdfebb" stroke="#fdfebb"/>
<polygon points="160.1,171 169.9,172.1 168.4,169.5" fill="#fff5ae" stroke="#fff5ae"/>
<polygon points="124.1,174.6 124.8,171.3 116.3,169.9" fill="#feec9f" stroke="#feec9f"/>
<polygon points="113.3,179.9 104.6,177.9 112.3,183.2" fill="#f26944" stroke="#f26944"/>
<polygon points="159,168.2 150.8,168.9 151.4,171.9" fill="#fefebd" stroke="#fefebd"/>
<polygon points="151.4,171.9 160.1,171 159,168.2" fill="#fffcba" stroke="#fffcba"/>
<polygon points="115.3,173.2 114.3,176.5 123.5,177.9" fill="#fdc171" stroke="#fdc171"/>
<polygon points="124.8,171.3 133.6,172.1 133.9,168.8" fill="#fffbb8" stroke="#fffbb8"/>
<polygon points="151.4,171.9 150.8,168.9 142.4,169.1" fill="#fdfebb" stroke="#fdfebb"/>
<polygon points="180.2,172.2 169.9,172.1 171.5,174.8" fill="#fee797" stroke="#fee797"/>
<polygon points="142.5,172.3 142.4,169.1 133.9,168.8" fill="#fdfebb" stroke="#fdfebb"/>
<polygon points="123.5,177.9 124.1,174.6 115.3,173.2" fill="#fece7c" stroke="#fece7c"/>
<polygon points="133.6,172.1 124.8,171.3 124.1,174.6" fill="#feec9f" stroke="#feec9f"/>
<polygon points="160.1,171 161.1,173.9 169.9,172.1" fill="#fff0a6" stroke="#fff0a6"/>
<polygon points="123.5,177.9 114.3,176.5 113.3,179.9" fill="#fba35c" stroke="#fba35c"/>
<polygon points="133.9,168.8 133.6,172.1 142.5,172.3" fill="#fffcba" stroke="#fffcba"/>
<polygon points="151.4,171.9 142.4,169.1 142.5,172.3" fill="#fffcba" stroke="#fffcba"/>
<polygon points="161.1,173.9 160.1,171 151.4,171.9" fill="#fff3ac" stroke="#fff3ac"/>
<polygon points="182.2,174.6 184.1,177 193,173.2" fill="#fed884" stroke="#fed884"/>
<polygon points="171.5,174.8 169.9,172.1 161.1,173.9" fill="#fee999" stroke="#fee999"/>
<polygon points="173,177.4 182.2,174.6 180.2,172.2" fill="#fede89" stroke="#fede89"/>
<polygon points="133.6,172.1 124.1,174.6 133.3,175.3" fill="#fee695" stroke="#fee695"/>
<polygon points="173,177.4 180.2,172.2 171.5,174.8" fill="#fee08b" stroke="#fee08b"/>
<polygon points="122.8,181.2 113.3,179.9 112.3,183.2" fill="#f57245" stroke="#f57245"/>
<polygon points="133.3,175.3 124.1,174.6 123.5,177.9" fill="#fed27f" stroke="#fed27f"/>
<polygon points="133.6,172.1 142.6,175.5 142.5,172.3" fill="#fff0a6" stroke="#fff0a6"/>
<polygon points="142.5,172.3 142.6,175.5 151.4,171.9" fill="#fff0a6" stroke="#fff0a6"/>
<polygon points="123.5,177.9 113.3,179.9 122.8,181.2" fill="#fa9656" stroke="#fa9656"/>
<polygon points="151.4,171.9 152,175 161.1,173.9" fill="#feeda1" stroke="#feeda1"/>
<polygon points="133.3,175.3 142.6,175.5 133.6,172.1" fill="#fee999" stroke="#fee999"/>
<polygon points="142.6,175.5 152,175 151.4,171.9" fill="#feeb9d" stroke="#feeb9d"/>
<polygon points="161.1,173.9 162.2,176.7 171.5,174.8" fill="#fee28f" stroke="#fee28f"/>
<polygon points="184.1,177 182.2,174.6 173,177.4" fill="#fed27f" stroke="#fed27f"/>
<polygon points="123.5,177.9 133,178.6 133.3,175.3" fill="#fec877" stroke="#fec877"/>
<polygon points="162.2,176.7 161.1,173.9 152,175" fill="#fee491" stroke="#fee491"/>
<polygon points="112.3,183.2 122.1,184.5 122.8,181.2" fill="#f26944" stroke="#f26944"/>
<polygon points="171.5,174.8 162.2,176.7 173,177.4" fill="#feda86" stroke="#feda86"/>
<polygon points="133,178.6 142.6,175.5 133.3,175.3" fill="#fed884" stroke="#fed884"/>
<polygon points="132.7,181.9 123.5,177.9 122.8,181.2" fill="#fba05b" stroke="#fba05b"/>
<polygon points="152,175 142.6,175.5 142.8,178.6" fill="#fede89" stroke="#fede89"/>
<polygon points="133,178.6 123.5,177.9 132.7,181.9" fill="#fdb365" stroke="#fdb365"/>
<polygon points="152.5,178 162.2,176.7 152,175" fill="#fedc88" stroke="#fedc88"/>
<polygon points="142.8,178.6 142.6,175.5 133,178.6" fill="#fece7c" stroke="#fece7c"/>
<polygon points="173,177.4 174.5,180.1 184.1,177" fill="#fec877" stroke="#fec877"/>
<polygon points="152,175 142.8,178.6 152.5,178" fill="#fed683" stroke="#fed683"/>
<polygon points="162.2,176.7 163.2,179.6 173,177.4" fill="#fece7c" stroke="#fece7c"/>
<polygon points="122.8,181.2 122.1,184.5 132.7,181.9" fill="#f7814c" stroke="#f7814c"/>
<polygon points="153.1,181.1 162.2,176.7 152.5,178" fill="#feca79" stroke="#feca79"/>
<polygon points="142.8,178.6 133,178.6 142.9,181.8" fill="#fdbb6c" stroke="#fdbb6c"/>
<polygon points="133,178.6 132.7,181.9 142.9,181.8" fill="#fdad60" stroke="#fdad60"/>
<polygon points="153.1,181.1 163.2,179.6 162.2,176.7" fill="#fdc776" stroke="#fdc776"/>
<polygon points="152.5,178 142.8,178.6 142.9,181.8" fill="#fdc171" stroke="#fdc171"/>
<polygon points="132.7,181.9 122.1,184.5 132.4,185.1" fill="#f57748" stroke="#f57748"/>
<polygon points="173,177.4 163.2,179.6 164.3,182.5" fill="#fdbf6f" stroke="#fdbf6f"/>
<polygon points="164.3,182.5 174.5,180.1 173,177.4" fill="#fdbd6d" stroke="#fdbd6d"/>
<polygon points="142.9,181.8 153.1,181.1 152.5,178" fill="#fdbb6c" stroke="#fdbb6c"/>
<polygon points="142.9,181.8 132.7,181.9 132.4,185.1" fill="#f99153" stroke="#f99153"/>
<polygon points="164.3,182.5 163.2,179.6 153.1,181.1" fill="#fdb768" stroke="#fdb768"/>
<polygon points="153.7,184.1 153.1,181.1 142.9,181.8" fill="#fca85e" stroke="#fca85e"/>
<polygon points="132.4,185.1 143,185 142.9,181.8" fill="#f88950" stroke="#f88950"/>
<polygon points="153.1,181.1 153.7,184.1 164.3,182.5" fill="#fcaa5f" stroke="#fcaa5f"/>
<polygon points="142.9,181.8 143,185 153.7,184.1" fill="#fa9656" stroke="#fa9656"/>
</g>
<polygon points="351.7,210.7 439.6,136.9 438.5,30.3 346.5,97.9" fill="#f9f9f9" stroke="#e4e4e4" stroke-width="0.7"/>
<polygon points="439.6,136.9 581.1,178 586,67.9 438.5,30.3" fill="#f2f2f2" stroke="#e4e4e4" stroke-width="0.7"/>
<polygon points="351.7,210.7 501.4,259.4 581.1,178 439.6,136.9" fill="#f5f5f5" stroke="#e4e4e4" stroke-width="0.7"/>
<path d="M357.3 212.5L444.9 138.5L443.9 31.7M390.6 223.3L476.5 147.6L476.8 40.1M424.6 234.4L508.7 157L510.4 48.7M459.5 245.8L541.7 166.6L544.8 57.4M495.3 257.4L575.4 176.4L580 66.4M504.7 255.9L355.4 207.6L350.4 95.1M524.2 236L376.9 189.6L372.9 78.5M543 216.9L397.5 172.3L394.4 62.7M561 198.6L417.3 155.6L415.2 47.4M578.3 181L436.5 139.6L435.2 32.8M350.4 183.2L439.4 110.8L582.3 151.1M349.2 155.5L439.1 84.7L583.5 124.1M347.9 127.3L438.8 58L584.7 96.6" fill="none" stroke="#b9b9b9" stroke-width="0.95"/>
<path d="M351.7 210.7L501.4 259.4L581.1 178L586 67.9" fill="none" stroke="#1a1a1a" stroke-width="1.25" stroke-linejoin="round"/>
<path d="M359.5 210.6L355.7 213.8M392.8 221.4L389.1 224.7M426.8 232.4L423.2 235.8M461.7 243.7L458.1 247.1M497.3 255.3L493.9 258.8M501 254.7L507.3 256.7M520.5 234.9L526.7 236.8M539.3 215.8L545.4 217.7M557.4 197.5L563.4 199.3M574.7 179.9L580.7 181.6M578.7 150.1L584.7 151.8M579.9 123.2L585.9 124.8M581.1 95.6L587.2 97.2" fill="none" stroke="#1a1a1a" stroke-width="1.15"/>
<text x="347.1" y="243.7" text-anchor="middle">−1.0</text>
<text x="380.4" y="254.9" text-anchor="middle">−0.5</text>
<text x="414.6" y="266.2" text-anchor="middle">0.0</text>
<text x="449.5" y="277.9" text-anchor="middle">0.5</text>
<text x="485.3" y="289.8" text-anchor="middle">1.0</text>
<text x="522.2" y="284.1" text-anchor="middle">−1.0</text>
<text x="541.3" y="263.8" text-anchor="middle">−0.5</text>
<text x="559.7" y="244.4" text-anchor="middle">0.0</text>
<text x="577.4" y="225.7" text-anchor="middle">0.5</text>
<text x="594.4" y="207.7" text-anchor="middle">1.0</text>
<text x="607.3" y="157.7" text-anchor="middle">−0.5</text>
<text x="608.7" y="130.8" text-anchor="middle">0.0</text>
<text x="610.2" y="103.3" text-anchor="middle">0.5</text>
<g stroke-width="0.35" stroke-linejoin="round">
<polygon points="510.1,132.3 519.6,135.8 509.9,117.9" fill="#822f93" stroke="#822f93"/>
<polygon points="426.8,132.3 427,117.9 417.4,135.8" fill="#822f93" stroke="#822f93"/>
<polygon points="519.6,135.8 518.1,149.1 527.8,148.7" fill="#4326b0" stroke="#4326b0"/>
<polygon points="418.8,149.1 417.4,135.8 409.1,148.7" fill="#4326b0" stroke="#4326b0"/>
<polygon points="518.1,149.1 519.6,135.8 510.1,132.3" fill="#5428b9" stroke="#5428b9"/>
<polygon points="417.4,135.8 418.8,149.1 426.8,132.3" fill="#5428b9" stroke="#5428b9"/>
<polygon points="509.9,117.9 501,111.4 510.1,132.3" fill="#b73765" stroke="#b73765"/>
<polygon points="435.9,111.4 427,117.9 426.8,132.3" fill="#b73765" stroke="#b73765"/>
<polygon points="518.1,149.1 510.1,132.3 509,146.9" fill="#4a26bc" stroke="#4a26bc"/>
<polygon points="426.8,132.3 418.8,149.1 427.9,146.9" fill="#4a26bc" stroke="#4a26bc"/>
<polygon points="509.9,117.9 499.1,98.7 501,111.4" fill="#fd4028" stroke="#fd4028"/>
<polygon points="427,117.9 435.9,111.4 437.8,98.7" fill="#ff4126" stroke="#ff4126"/>
<polygon points="527.8,148.7 518.1,149.1 524.8,158.5" fill="#36269a" stroke="#36269a"/>
<polygon points="409.1,148.7 412.1,158.5 418.8,149.1" fill="#36269a" stroke="#36269a"/>
<polygon points="515.4,160.8 518.1,149.1 509,146.9" fill="#36269a" stroke="#36269a"/>
<polygon points="427.9,146.9 418.8,149.1 421.5,160.8" fill="#36269a" stroke="#36269a"/>
<polygon points="524.8,158.5 518.1,149.1 515.4,160.8" fill="#2e268c" stroke="#2e268c"/>
<polygon points="421.5,160.8 418.8,149.1 412.1,158.5" fill="#2e268c" stroke="#2e268c"/>
<polygon points="427.9,146.9 435.5,126.1 426.8,132.3" fill="#732d9f" stroke="#732d9f"/>
<polygon points="501.4,126.1 509,146.9 510.1,132.3" fill="#732d9f" stroke="#732d9f"/>
<polygon points="515.4,160.8 509,146.9 506.5,160.4" fill="#302690" stroke="#302690"/>
<polygon points="427.9,146.9 421.5,160.8 430.4,160.4" fill="#302690" stroke="#302690"/>
<polygon points="426.8,132.3 435.5,126.1 435.9,111.4" fill="#b43668" stroke="#b43668"/>
<polygon points="501.4,126.1 510.1,132.3 501,111.4" fill="#b43668" stroke="#b43668"/>
<polygon points="409.1,148.7 402.4,154.2 412.1,158.5" fill="#36269a" stroke="#36269a"/>
<polygon points="527.8,148.7 524.8,158.5 534.5,154.2" fill="#36269a" stroke="#36269a"/>
<polygon points="506.5,160.4 511.6,169.7 515.4,160.8" fill="#20206c" stroke="#20206c"/>
<polygon points="430.4,160.4 421.5,160.8 425.3,169.7" fill="#20206c" stroke="#20206c"/>
<polygon points="506.5,160.4 509,146.9 500.5,141.8" fill="#4126ac" stroke="#4126ac"/>
<polygon points="436.4,141.8 427.9,146.9 430.4,160.4" fill="#4126ac" stroke="#4126ac"/>
<polygon points="435.9,111.4 446.1,91.2 437.8,98.7" fill="#ed6d0b" stroke="#ed6d0b"/>
<polygon points="501,111.4 499.1,98.7 490.8,91.2" fill="#ed6d0b" stroke="#ed6d0b"/>
<polygon points="446.1,91.2 449.6,82.5 437.8,98.7" fill="#e69308" stroke="#e69308"/>
<polygon points="499.1,98.7 487.3,82.5 490.8,91.2" fill="#e69308" stroke="#e69308"/>
<polygon points="435.5,126.1 427.9,146.9 436.4,141.8" fill="#6c2ca5" stroke="#6c2ca5"/>
<polygon points="500.5,141.8 509,146.9 501.4,126.1" fill="#6c2ca5" stroke="#6c2ca5"/>
<polygon points="421.5,160.8 412.1,158.5 416.2,165.3" fill="#262680" stroke="#262680"/>
<polygon points="520.7,165.3 524.8,158.5 515.4,160.8" fill="#262680" stroke="#262680"/>
<polygon points="503,171.5 511.6,169.7 506.5,160.4" fill="#191954" stroke="#191954"/>
<polygon points="425.3,169.7 433.9,171.5 430.4,160.4" fill="#191954" stroke="#191954"/>
<polygon points="430.4,160.4 433.9,171.5 438.6,156.9" fill="#242478" stroke="#242478"/>
<polygon points="503,171.5 506.5,160.4 498.3,156.9" fill="#242478" stroke="#242478"/>
<polygon points="515.4,160.8 511.6,169.7 520.7,165.3" fill="#1f1f68" stroke="#1f1f68"/>
<polygon points="416.2,165.3 425.3,169.7 421.5,160.8" fill="#1f1f68" stroke="#1f1f68"/>
<polygon points="438.6,156.9 436.4,141.8 430.4,160.4" fill="#3c26a4" stroke="#3c26a4"/>
<polygon points="498.3,156.9 506.5,160.4 500.5,141.8" fill="#3c26a4" stroke="#3c26a4"/>
<polygon points="444.1,103.2 435.9,111.4 435.5,126.1" fill="#ff4126" stroke="#ff4126"/>
<polygon points="501,111.4 492.9,103.2 501.4,126.1" fill="#fd4028" stroke="#fd4028"/>
<polygon points="433.9,171.5 442,170.2 438.6,156.9" fill="#1f1f68" stroke="#1f1f68"/>
<polygon points="498.3,156.9 494.9,170.2 503,171.5" fill="#1f1f68" stroke="#1f1f68"/>
<polygon points="425.3,169.7 430.1,174.8 433.9,171.5" fill="#12123c" stroke="#12123c"/>
<polygon points="506.8,174.8 511.6,169.7 503,171.5" fill="#12123c" stroke="#12123c"/>
<polygon points="433.9,171.5 438.5,179.2 442,170.2" fill="#0e0e30" stroke="#0e0e30"/>
<polygon points="494.9,170.2 498.4,179.2 503,171.5" fill="#0e0e30" stroke="#0e0e30"/>
<polygon points="449.6,82.5 457.1,76.6 462.1,73.2" fill="#e6c932" stroke="#e6c932"/>
<polygon points="474.8,73.2 479.8,76.6 487.3,82.5" fill="#e6c932" stroke="#e6c932"/>
<polygon points="444.1,103.2 446.1,91.2 435.9,111.4" fill="#ec6f0a" stroke="#ec6f0a"/>
<polygon points="492.9,103.2 501,111.4 490.8,91.2" fill="#ec6f0a" stroke="#ec6f0a"/>
<polygon points="430.1,174.8 438.5,179.2 433.9,171.5" fill="#0c0c28" stroke="#0c0c28"/>
<polygon points="498.4,179.2 506.8,174.8 503,171.5" fill="#0c0c28" stroke="#0c0c28"/>
<polygon points="534.5,154.2 524.8,158.5 530.1,159.1" fill="#36269a" stroke="#36269a"/>
<polygon points="406.9,159.1 412.1,158.5 402.4,154.2" fill="#36269a" stroke="#36269a"/>
<polygon points="435.5,126.1 436.4,141.8 443.4,117.9" fill="#a73573" stroke="#a73573"/>
<polygon points="501.4,126.1 493.5,117.9 500.5,141.8" fill="#a73573" stroke="#a73573"/>
<polygon points="490.8,91.2 487.3,82.5 479.8,76.6" fill="#e6b917" stroke="#e6b917"/>
<polygon points="457.1,76.6 449.6,82.5 446.1,91.2" fill="#e6b917" stroke="#e6b917"/>
<polygon points="416.2,165.3 412.1,158.5 406.9,159.1" fill="#2e268c" stroke="#2e268c"/>
<polygon points="530.1,159.1 524.8,158.5 520.7,165.3" fill="#2e268c" stroke="#2e268c"/>
<polygon points="442,170.2 438.5,179.2 446.4,180.5" fill="#0b0b24" stroke="#0b0b24"/>
<polygon points="490.5,180.5 498.4,179.2 494.9,170.2" fill="#0b0b24" stroke="#0b0b24"/>
<polygon points="468.5,71.2 474.8,73.2 462.1,73.2" fill="#e6d656" stroke="#e6d656"/>
<polygon points="444.1,134.1 436.4,141.8 438.6,156.9" fill="#5e29b1" stroke="#5e29b1"/>
<polygon points="500.5,141.8 492.8,134.1 498.3,156.9" fill="#5e29b1" stroke="#5e29b1"/>
<polygon points="421.3,168.1 425.3,169.7 416.2,165.3" fill="#20206c" stroke="#20206c"/>
<polygon points="520.7,165.3 511.6,169.7 515.6,168.1" fill="#20206c" stroke="#20206c"/>
<polygon points="438.6,156.9 442,170.2 446.2,150.5" fill="#342696" stroke="#342696"/>
<polygon points="494.9,170.2 498.3,156.9 490.8,150.5" fill="#342696" stroke="#342696"/>
<polygon points="443.4,117.9 444.1,103.2 435.5,126.1" fill="#ff4126" stroke="#ff4126"/>
<polygon points="492.9,103.2 493.5,117.9 501.4,126.1" fill="#fd4028" stroke="#fd4028"/>
<polygon points="421.3,168.1 430.1,174.8 425.3,169.7" fill="#191954" stroke="#191954"/>
<polygon points="515.6,168.1 511.6,169.7 506.8,174.8" fill="#191954" stroke="#191954"/>
<polygon points="498.4,179.2 490.5,180.5 492.9,182.7" fill="#04040c" stroke="#04040c"/>
<polygon points="446.4,180.5 438.5,179.2 444,182.7" fill="#04040c" stroke="#04040c"/>
<polygon points="446.4,180.5 449.4,165.8 442,170.2" fill="#17174c" stroke="#17174c"/>
<polygon points="490.5,180.5 494.9,170.2 487.5,165.8" fill="#17174c" stroke="#17174c"/>
<polygon points="443.4,117.9 436.4,141.8 444.1,134.1" fill="#a43476" stroke="#a43476"/>
<polygon points="493.5,117.9 492.8,134.1 500.5,141.8" fill="#a43476" stroke="#a43476"/>
<polygon points="462.1,73.2 457.1,76.6 468.5,71.2" fill="#e6d656" stroke="#e6d656"/>
<polygon points="479.8,76.6 474.8,73.2 468.5,71.2" fill="#e6d656" stroke="#e6d656"/>
<polygon points="438.6,156.9 446.2,150.5 444.1,134.1" fill="#5928b5" stroke="#5928b5"/>
<polygon points="490.8,150.5 498.3,156.9 492.8,134.1" fill="#5928b5" stroke="#5928b5"/>
<polygon points="438.5,179.2 430.1,174.8 435.8,175.7" fill="#0e0e30" stroke="#0e0e30"/>
<polygon points="501.1,175.7 506.8,174.8 498.4,179.2" fill="#0e0e30" stroke="#0e0e30"/>
<polygon points="485.1,186.8 492.9,182.7 490.5,180.5" fill="#000000" stroke="#000000"/>
<polygon points="444,182.7 451.8,186.8 446.4,180.5" fill="#000000" stroke="#000000"/>
<polygon points="449.4,165.8 446.2,150.5 442,170.2" fill="#302690" stroke="#302690"/>
<polygon points="490.8,150.5 487.5,165.8 494.9,170.2" fill="#302690" stroke="#302690"/>
<polygon points="485.1,186.8 490.5,180.5 483.2,178.5" fill="#04040c" stroke="#04040c"/>
<polygon points="453.7,178.5 446.4,180.5 451.8,186.8" fill="#04040c" stroke="#04040c"/>
<polygon points="487.5,165.8 483.2,178.5 490.5,180.5" fill="#141444" stroke="#141444"/>
<polygon points="449.4,165.8 446.4,180.5 453.7,178.5" fill="#141444" stroke="#141444"/>
<polygon points="435.8,175.7 444,182.7 438.5,179.2" fill="#0b0b24" stroke="#0b0b24"/>
<polygon points="492.9,182.7 501.1,175.7 498.4,179.2" fill="#0b0b24" stroke="#0b0b24"/>
<polygon points="453.4,83.6 446.1,91.2 444.1,103.2" fill="#e69f0c" stroke="#e69f0c"/>
<polygon points="490.8,91.2 483.5,83.6 492.9,103.2" fill="#e69f0c" stroke="#e69f0c"/>
<polygon points="490.8,91.2 479.8,76.6 483.5,83.6" fill="#e6c11f" stroke="#e6c11f"/>
<polygon points="457.1,76.6 446.1,91.2 453.4,83.6" fill="#e6c11f" stroke="#e6c11f"/>
<polygon points="406.9,159.1 402.4,154.2 397.3,152.3" fill="#4326b0" stroke="#4326b0"/>
<polygon points="534.5,154.2 530.1,159.1 539.6,152.3" fill="#4326b0" stroke="#4326b0"/>
<polygon points="406.9,159.1 412.3,160 416.2,165.3" fill="#36269a" stroke="#36269a"/>
<polygon points="524.6,160 530.1,159.1 520.7,165.3" fill="#36269a" stroke="#36269a"/>
<polygon points="416.2,165.3 412.3,160 421.3,168.1" fill="#302690" stroke="#302690"/>
<polygon points="520.7,165.3 515.6,168.1 524.6,160" fill="#302690" stroke="#302690"/>
<polygon points="486.6,181.6 492.9,182.7 485.1,186.8" fill="#04040c" stroke="#04040c"/>
<polygon points="450.3,181.6 451.8,186.8 444,182.7" fill="#04040c" stroke="#04040c"/>
<polygon points="427.2,166.7 430.1,174.8 421.3,168.1" fill="#242478" stroke="#242478"/>
<polygon points="515.6,168.1 506.8,174.8 509.7,166.7" fill="#242478" stroke="#242478"/>
<polygon points="451.2,94.3 444.1,103.2 443.4,117.9" fill="#e97705" stroke="#e97705"/>
<polygon points="485.7,94.3 493.5,117.9 492.9,103.2" fill="#e97705" stroke="#e97705"/>
<polygon points="430.1,174.8 427.2,166.7 435.8,175.7" fill="#1f1f68" stroke="#1f1f68"/>
<polygon points="509.7,166.7 506.8,174.8 501.1,175.7" fill="#1f1f68" stroke="#1f1f68"/>
<polygon points="479.8,76.6 468.5,71.2 473.5,72.3" fill="#e6de6c" stroke="#e6de6c"/>
<polygon points="463.4,72.3 468.5,71.2 457.1,76.6" fill="#e6de6c" stroke="#e6de6c"/>
<polygon points="487.5,165.8 480.9,158.4 483.2,178.5" fill="#2b2688" stroke="#2b2688"/>
<polygon points="453.7,178.5 456,158.4 449.4,165.8" fill="#2b2688" stroke="#2b2688"/>
<polygon points="444.1,134.1 450.4,108.2 443.4,117.9" fill="#ff4126" stroke="#ff4126"/>
<polygon points="486.5,108.2 492.8,134.1 493.5,117.9" fill="#fd4028" stroke="#fd4028"/>
<polygon points="449.4,165.8 452.9,141.6 446.2,150.5" fill="#5027bd" stroke="#5027bd"/>
<polygon points="484,141.6 487.5,165.8 490.8,150.5" fill="#5027bd" stroke="#5027bd"/>
<polygon points="444.1,103.2 451.2,94.3 453.4,83.6" fill="#e6a50f" stroke="#e6a50f"/>
<polygon points="485.7,94.3 492.9,103.2 483.5,83.6" fill="#e6a50f" stroke="#e6a50f"/>
<polygon points="444.1,134.1 446.2,150.5 451,124.4" fill="#9d347c" stroke="#9d347c"/>
<polygon points="490.8,150.5 492.8,134.1 485.9,124.4" fill="#9d347c" stroke="#9d347c"/>
<polygon points="442.2,172 444,182.7 435.8,175.7" fill="#17174c" stroke="#17174c"/>
<polygon points="494.7,172 501.1,175.7 492.9,182.7" fill="#17174c" stroke="#17174c"/>
<polygon points="473.5,72.3 483.5,83.6 479.8,76.6" fill="#e6d656" stroke="#e6d656"/>
<polygon points="457.1,76.6 453.4,83.6 463.4,72.3" fill="#e6d656" stroke="#e6d656"/>
<polygon points="444,182.7 442.2,172 450.3,181.6" fill="#141444" stroke="#141444"/>
<polygon points="492.9,182.7 486.6,181.6 494.7,172" fill="#141444" stroke="#141444"/>
<polygon points="443.4,117.9 450.4,108.2 451.2,94.3" fill="#e87904" stroke="#e87904"/>
<polygon points="486.5,108.2 493.5,117.9 485.7,94.3" fill="#e87904" stroke="#e87904"/>
<polygon points="463.4,72.3 473.5,72.3 468.5,71.2" fill="#e6e57f" stroke="#e6e57f"/>
<polygon points="452.9,141.6 449.4,165.8 456,158.4" fill="#4d26bf" stroke="#4d26bf"/>
<polygon points="484,141.6 480.9,158.4 487.5,165.8" fill="#4c26be" stroke="#4c26be"/>
<polygon points="451,124.4 446.2,150.5 452.9,141.6" fill="#9a337e" stroke="#9a337e"/>
<polygon points="490.8,150.5 485.9,124.4 484,141.6" fill="#9a337e" stroke="#9a337e"/>
<polygon points="486.5,108.2 485.9,124.4 492.8,134.1" fill="#fd4028" stroke="#fd4028"/>
<polygon points="451,124.4 450.4,108.2 444.1,134.1" fill="#ff4126" stroke="#ff4126"/>
<polygon points="397.3,152.3 403.2,151.8 406.9,159.1" fill="#5428b9" stroke="#5428b9"/>
<polygon points="539.6,152.3 530.1,159.1 533.8,151.8" fill="#5428b9" stroke="#5428b9"/>
<polygon points="403.2,151.8 412.3,160 406.9,159.1" fill="#4a26bc" stroke="#4a26bc"/>
<polygon points="533.8,151.8 530.1,159.1 524.6,160" fill="#4a26bc" stroke="#4a26bc"/>
<polygon points="421.3,168.1 412.3,160 418.5,156.8" fill="#4126ac" stroke="#4126ac"/>
<polygon points="524.6,160 515.6,168.1 518.4,156.8" fill="#4126ac" stroke="#4126ac"/>
<polygon points="418.5,156.8 427.2,166.7 421.3,168.1" fill="#3c26a4" stroke="#3c26a4"/>
<polygon points="509.7,166.7 518.4,156.8 515.6,168.1" fill="#3c26a4" stroke="#3c26a4"/>
<polygon points="453.4,83.6 451.2,94.3 459.7,77.1" fill="#e6cb39" stroke="#e6cb39"/>
<polygon points="483.5,83.6 477.3,77.1 485.7,94.3" fill="#e6cb39" stroke="#e6cb39"/>
<polygon points="427.2,166.7 433.9,161 435.8,175.7" fill="#342696" stroke="#342696"/>
<polygon points="509.7,166.7 501.1,175.7 503,161" fill="#342696" stroke="#342696"/>
<polygon points="463.4,72.3 453.4,83.6 459.7,77.1" fill="#e6dc66" stroke="#e6dc66"/>
<polygon points="483.5,83.6 473.5,72.3 477.3,77.1" fill="#e6dc66" stroke="#e6dc66"/>
<polygon points="435.8,175.7 433.9,161 442.2,172" fill="#302690" stroke="#302690"/>
<polygon points="503,161 501.1,175.7 494.7,172" fill="#302690" stroke="#302690"/>
<polygon points="450.3,181.6 442.2,172 449.2,164.3" fill="#2b2688" stroke="#2b2688"/>
<polygon points="494.7,172 486.6,181.6 487.7,164.3" fill="#2b2688" stroke="#2b2688"/>
<polygon points="468.5,70.8 473.5,72.3 463.4,72.3" fill="#eaea97" stroke="#eaea97"/>
<polygon points="457.3,85.9 451.2,94.3 450.4,108.2" fill="#e6b114" stroke="#e6b114"/>
<polygon points="485.7,94.3 479.6,85.9 486.5,108.2" fill="#e6b114" stroke="#e6b114"/>
<polygon points="484,141.6 478.2,131.1 480.9,158.4" fill="#953283" stroke="#953283"/>
<polygon points="452.9,141.6 456,158.4 458.7,131.1" fill="#953283" stroke="#953283"/>
<polygon points="477.3,77.1 473.5,72.3 468.5,70.8" fill="#e9e993" stroke="#e9e993"/>
<polygon points="459.7,77.1 468.5,70.8 463.4,72.3" fill="#e9e993" stroke="#e9e993"/>
<polygon points="456.4,98.4 450.4,108.2 451,124.4" fill="#e77d02" stroke="#e77d02"/>
<polygon points="480.5,98.4 485.9,124.4 486.5,108.2" fill="#e77d02" stroke="#e77d02"/>
<polygon points="459.7,77.1 451.2,94.3 457.3,85.9" fill="#e6d046" stroke="#e6d046"/>
<polygon points="485.7,94.3 477.3,77.1 479.6,85.9" fill="#e6d046" stroke="#e6d046"/>
<polygon points="451,124.4 452.9,141.6 456.9,113.8" fill="#ff4126" stroke="#ff4126"/>
<polygon points="484,141.6 485.9,124.4 480,113.8" fill="#fd4028" stroke="#fd4028"/>
<polygon points="394.1,144.6 403.2,151.8 397.3,152.3" fill="#822f93" stroke="#822f93"/>
<polygon points="533.8,151.8 542.8,144.6 539.6,152.3" fill="#822f93" stroke="#822f93"/>
<polygon points="533.8,151.8 524.6,160 527.1,147.4" fill="#732d9f" stroke="#732d9f"/>
<polygon points="409.8,147.4 412.3,160 403.2,151.8" fill="#732d9f" stroke="#732d9f"/>
<polygon points="418.5,156.8 412.3,160 409.8,147.4" fill="#6c2ca5" stroke="#6c2ca5"/>
<polygon points="527.1,147.4 524.6,160 518.4,156.8" fill="#6c2ca5" stroke="#6c2ca5"/>
<polygon points="425.4,149.8 427.2,166.7 418.5,156.8" fill="#5e29b1" stroke="#5e29b1"/>
<polygon points="511.5,149.8 518.4,156.8 509.7,166.7" fill="#5e29b1" stroke="#5e29b1"/>
<polygon points="433.9,161 427.2,166.7 425.4,149.8" fill="#5928b5" stroke="#5928b5"/>
<polygon points="503,161 511.5,149.8 509.7,166.7" fill="#5928b5" stroke="#5928b5"/>
<polygon points="456.4,98.4 457.3,85.9 450.4,108.2" fill="#e6b515" stroke="#e6b515"/>
<polygon points="486.5,108.2 479.6,85.9 480.5,98.4" fill="#e6b515" stroke="#e6b515"/>
<polygon points="433.9,161 441.1,151.7 442.2,172" fill="#5027bd" stroke="#5027bd"/>
<polygon points="494.7,172 495.9,151.7 503,161" fill="#5027bd" stroke="#5027bd"/>
<polygon points="480,113.8 478.2,131.1 484,141.6" fill="#fd4028" stroke="#fd4028"/>
<polygon points="458.7,131.1 456.9,113.8 452.9,141.6" fill="#ff4126" stroke="#ff4126"/>
<polygon points="442.2,172 441.1,151.7 449.2,164.3" fill="#4c26be" stroke="#4c26be"/>
<polygon points="487.7,164.3 495.9,151.7 494.7,172" fill="#4d26bf" stroke="#4d26bf"/>
<polygon points="456.9,113.8 456.4,98.4 451,124.4" fill="#e67f00" stroke="#e67f00"/>
<polygon points="480.5,98.4 480,113.8 485.9,124.4" fill="#e67f00" stroke="#e67f00"/>
<polygon points="464.7,73 468.5,70.8 459.7,77.1" fill="#eeeeab" stroke="#eeeeab"/>
<polygon points="472.2,73 477.3,77.1 468.5,70.8" fill="#eeeeab" stroke="#eeeeab"/>
<polygon points="459.7,77.1 457.3,85.9 464.7,73" fill="#e7e787" stroke="#e7e787"/>
<polygon points="479.6,85.9 477.3,77.1 472.2,73" fill="#e7e787" stroke="#e7e787"/>
<polygon points="468.5,70.8 464.7,73 472.2,73" fill="#f3f3c3" stroke="#f3f3c3"/>
<polygon points="462.3,79.2 457.3,85.9 456.4,98.4" fill="#e6d85c" stroke="#e6d85c"/>
<polygon points="480.5,98.4 479.6,85.9 474.6,79.2" fill="#e6d85c" stroke="#e6d85c"/>
<polygon points="464.7,73 457.3,85.9 462.3,79.2" fill="#eaea97" stroke="#eaea97"/>
<polygon points="474.6,79.2 479.6,85.9 472.2,73" fill="#eaea97" stroke="#eaea97"/>
<polygon points="535.7,139.6 533.8,151.8 527.1,147.4" fill="#b43668" stroke="#b43668"/>
<polygon points="403.2,151.8 401.2,139.6 409.8,147.4" fill="#b43668" stroke="#b43668"/>
<polygon points="403.2,151.8 394.1,144.6 401.2,139.6" fill="#b73765" stroke="#b73765"/>
<polygon points="542.8,144.6 533.8,151.8 535.7,139.6" fill="#b73765" stroke="#b73765"/>
<polygon points="409.8,147.4 417.1,139.6 418.5,156.8" fill="#a73573" stroke="#a73573"/>
<polygon points="518.4,156.8 519.9,139.6 527.1,147.4" fill="#a73573" stroke="#a73573"/>
<polygon points="418.5,156.8 417.1,139.6 425.4,149.8" fill="#a43476" stroke="#a43476"/>
<polygon points="518.4,156.8 511.5,149.8 519.9,139.6" fill="#a43476" stroke="#a43476"/>
<polygon points="480,113.8 480.5,98.4 475.6,89.6" fill="#e6bd18" stroke="#e6bd18"/>
<polygon points="461.3,89.6 456.4,98.4 456.9,113.8" fill="#e6bd18" stroke="#e6bd18"/>
<polygon points="425.4,149.8 432.9,139.6 433.9,161" fill="#9d347c" stroke="#9d347c"/>
<polygon points="503,161 504,139.6 511.5,149.8" fill="#9d347c" stroke="#9d347c"/>
<polygon points="433.9,161 432.9,139.6 441.1,151.7" fill="#9a337e" stroke="#9a337e"/>
<polygon points="495.9,151.7 504,139.6 503,161" fill="#9a337e" stroke="#9a337e"/>
<polygon points="478.2,131.1 480,113.8 475.2,103.6" fill="#e68301" stroke="#e68301"/>
<polygon points="461.7,103.6 456.9,113.8 458.7,131.1" fill="#e68301" stroke="#e68301"/>
<polygon points="471.9,195.2 468.5,202.3 470.9,203.2" fill="#04040c" stroke="#04040c"/>
<polygon points="468.5,202.3 465,195.2 466.1,203.2" fill="#04040c" stroke="#04040c"/>
<polygon points="449.2,164.3 441.1,151.7 448.7,139.6" fill="#953283" stroke="#953283"/>
<polygon points="488.2,139.6 495.9,151.7 487.7,164.3" fill="#953283" stroke="#953283"/>
<polygon points="464.7,73 468.5,72.2 472.2,73" fill="#f7f7d7" stroke="#f7f7d7"/>
<polygon points="466.1,203.2 470.9,203.2 468.5,202.3" fill="#000000" stroke="#000000"/>
<polygon points="456.4,98.4 461.3,89.6 462.3,79.2" fill="#e6dc66" stroke="#e6dc66"/>
<polygon points="475.6,89.6 480.5,98.4 474.6,79.2" fill="#e6dc66" stroke="#e6dc66"/>
<polygon points="468.5,72.2 464.7,73 462.3,79.2" fill="#f5f5cf" stroke="#f5f5cf"/>
<polygon points="472.2,73 468.5,72.2 474.6,79.2" fill="#f5f5cf" stroke="#f5f5cf"/>
<polygon points="461.7,103.6 461.3,89.6 456.9,113.8" fill="#e6c01c" stroke="#e6c01c"/>
<polygon points="475.6,89.6 475.2,103.6 480,113.8" fill="#e6bf19" stroke="#e6bf19"/>
<polygon points="470.9,203.2 475.6,189.6 471.9,195.2" fill="#141444" stroke="#141444"/>
<polygon points="466.1,203.2 465,195.2 461.3,189.6" fill="#141444" stroke="#141444"/>
<polygon points="468.5,207.1 470.9,203.2 466.1,203.2" fill="#04040c" stroke="#04040c"/>
<polygon points="471.9,195.2 475.6,189.6 475.2,175.6" fill="#2b2688" stroke="#2b2688"/>
<polygon points="465,195.2 461.7,175.6 461.3,189.6" fill="#2b2688" stroke="#2b2688"/>
<polygon points="468.5,72.2 470.9,75.5 474.6,79.2" fill="#f8f8db" stroke="#f8f8db"/>
<polygon points="466,75.5 468.5,72.2 462.3,79.2" fill="#f8f8db" stroke="#f8f8db"/>
<polygon points="462.3,79.2 461.3,89.6 466,75.5" fill="#f0f0b3" stroke="#f0f0b3"/>
<polygon points="474.6,79.2 470.9,75.5 475.6,89.6" fill="#f0f0b3" stroke="#f0f0b3"/>
<polygon points="441.1,151.7 432.9,139.6 440.7,127.3" fill="#fd4028" stroke="#fd4028"/>
<polygon points="448.7,139.6 441.1,151.7 440.7,127.3" fill="#fd4028" stroke="#fd4028"/>
<polygon points="495.9,151.7 488.2,139.6 496.2,127.3" fill="#ff4126" stroke="#ff4126"/>
<polygon points="504,139.6 495.9,151.7 496.2,127.3" fill="#ff4126" stroke="#ff4126"/>
<polygon points="424.8,129.2 432.9,139.6 425.4,149.8" fill="#fd4028" stroke="#fd4028"/>
<polygon points="425.4,149.8 417.1,139.6 424.8,129.2" fill="#fd4028" stroke="#fd4028"/>
<polygon points="512.1,129.2 519.9,139.6 511.5,149.8" fill="#ff4126" stroke="#ff4126"/>
<polygon points="511.5,149.8 504,139.6 512.1,129.2" fill="#ff4126" stroke="#ff4126"/>
<polygon points="401.2,139.6 394.1,144.6 393.1,134.5" fill="#fd4028" stroke="#fd4028"/>
<polygon points="543.8,134.5 542.8,144.6 535.7,139.6" fill="#ff4126" stroke="#ff4126"/>
<polygon points="535.7,139.6 527.1,147.4 528,131.6" fill="#ff4126" stroke="#ff4126"/>
<polygon points="528,131.6 527.1,147.4 519.9,139.6" fill="#ff4126" stroke="#ff4126"/>
<polygon points="409,131.6 409.8,147.4 401.2,139.6" fill="#fd4028" stroke="#fd4028"/>
<polygon points="417.1,139.6 409.8,147.4 409,131.6" fill="#fd4028" stroke="#fd4028"/>
<polygon points="462.3,200.3 466.1,203.2 461.3,189.6" fill="#17174c" stroke="#17174c"/>
<polygon points="475.6,189.6 470.9,203.2 474.7,200.3" fill="#17174c" stroke="#17174c"/>
<polygon points="468.5,207.1 466.1,203.2 462.3,200.3" fill="#0b0b24" stroke="#0b0b24"/>
<polygon points="474.7,200.3 470.9,203.2 468.5,207.1" fill="#0b0b24" stroke="#0b0b24"/>
<polygon points="465,83.2 461.3,89.6 461.7,103.6" fill="#e6e172" stroke="#e6e172"/>
<polygon points="471.9,83.2 475.2,103.6 475.6,89.6" fill="#e6e172" stroke="#e6e172"/>
<polygon points="470.9,75.5 468.5,72.2 466,75.5" fill="#fdfdf3" stroke="#fdfdf3"/>
<polygon points="461.3,89.6 465,83.2 466,75.5" fill="#f1f1bb" stroke="#f1f1bb"/>
<polygon points="475.6,89.6 470.9,75.5 471.9,83.2" fill="#f1f1bb" stroke="#f1f1bb"/>
<polygon points="475.2,175.6 475.6,189.6 480.3,165.8" fill="#4c26be" stroke="#4c26be"/>
<polygon points="461.3,189.6 461.7,175.6 456.7,165.8" fill="#4d26bf" stroke="#4d26bf"/>
<polygon points="468.5,207.1 472.3,207.2 474.7,200.3" fill="#0e0e30" stroke="#0e0e30"/>
<polygon points="462.3,200.3 464.6,207.2 468.5,207.1" fill="#0e0e30" stroke="#0e0e30"/>
<polygon points="474.7,200.3 480.8,181.5 475.6,189.6" fill="#302690" stroke="#302690"/>
<polygon points="461.3,189.6 456.2,181.5 462.3,200.3" fill="#302690" stroke="#302690"/>
<polygon points="466,75.5 468.5,75.6 470.9,75.5" fill="#ffffff" stroke="#ffffff"/>
<polygon points="468.5,207.1 464.6,207.2 472.3,207.2" fill="#0c0c28" stroke="#0c0c28"/>
<polygon points="448.7,139.6 440.7,127.3 448.7,114.2" fill="#e68301" stroke="#e68301"/>
<polygon points="496.2,127.3 488.2,139.6 488.2,114.2" fill="#e68301" stroke="#e68301"/>
<polygon points="471.9,83.2 470.9,75.5 468.5,75.6" fill="#fdfdf3" stroke="#fdfdf3"/>
<polygon points="465,83.2 468.5,75.6 466,75.5" fill="#fdfdf3" stroke="#fdfdf3"/>
<polygon points="480.3,165.8 478.4,148.2 475.2,175.6" fill="#953283" stroke="#953283"/>
<polygon points="458.5,148.2 456.7,165.8 461.7,175.6" fill="#953283" stroke="#953283"/>
<polygon points="433,117.5 440.7,127.3 432.9,139.6" fill="#e67f00" stroke="#e67f00"/>
<polygon points="496.2,127.3 504,117.5 504,139.6" fill="#e67f00" stroke="#e67f00"/>
<polygon points="432.9,139.6 424.8,129.2 433,117.5" fill="#e77d02" stroke="#e77d02"/>
<polygon points="512.1,129.2 504,139.6 504,117.5" fill="#e77d02" stroke="#e77d02"/>
<polygon points="480.3,165.8 475.6,189.6 480.8,181.5" fill="#5027bd" stroke="#5027bd"/>
<polygon points="461.3,189.6 456.7,165.8 456.2,181.5" fill="#5027bd" stroke="#5027bd"/>
<polygon points="417.1,121.8 424.8,129.2 417.1,139.6" fill="#e87904" stroke="#e87904"/>
<polygon points="519.8,121.8 519.9,139.6 512.1,129.2" fill="#e87904" stroke="#e87904"/>
<polygon points="417.1,121.8 417.1,139.6 409,131.6" fill="#e97705" stroke="#e97705"/>
<polygon points="528,131.6 519.9,139.6 519.8,121.8" fill="#e97705" stroke="#e97705"/>
<polygon points="401.3,127 401.2,139.6 393.1,134.5" fill="#ed6d0b" stroke="#ed6d0b"/>
<polygon points="535.7,139.6 535.6,127 543.8,134.5" fill="#ed6d0b" stroke="#ed6d0b"/>
<polygon points="528,131.6 535.6,127 535.7,139.6" fill="#ec6f0a" stroke="#ec6f0a"/>
<polygon points="401.2,139.6 401.3,127 409,131.6" fill="#ec6f0a" stroke="#ec6f0a"/>
<polygon points="472.3,207.2 479.8,194.5 474.7,200.3" fill="#1f1f68" stroke="#1f1f68"/>
<polygon points="462.3,200.3 457.1,194.5 464.6,207.2" fill="#1f1f68" stroke="#1f1f68"/>
<polygon points="462.3,200.3 456.2,181.5 457.1,194.5" fill="#342696" stroke="#342696"/>
<polygon points="474.7,200.3 479.8,194.5 480.8,181.5" fill="#342696" stroke="#342696"/>
<polygon points="468.5,210.1 472.3,207.2 464.6,207.2" fill="#12123c" stroke="#12123c"/>
<polygon points="477.5,203.9 479.8,194.5 472.3,207.2" fill="#242478" stroke="#242478"/>
<polygon points="457.1,194.5 459.4,203.9 464.6,207.2" fill="#242478" stroke="#242478"/>
<polygon points="472.3,207.2 468.5,210.1 477.5,203.9" fill="#191954" stroke="#191954"/>
<polygon points="464.6,207.2 459.4,203.9 468.5,210.1" fill="#191954" stroke="#191954"/>
<polygon points="456.2,181.5 456.7,165.8 450.3,155.2" fill="#9a337e" stroke="#9a337e"/>
<polygon points="480.3,165.8 480.8,181.5 486.6,155.2" fill="#9a337e" stroke="#9a337e"/>
<polygon points="448.7,114.2 440.7,127.3 441.2,105.9" fill="#e6bf19" stroke="#e6bf19"/>
<polygon points="496.2,127.3 488.2,114.2 495.7,105.9" fill="#e6c01c" stroke="#e6c01c"/>
<polygon points="478.4,148.2 480.3,165.8 484.6,137.4" fill="#fd4028" stroke="#fd4028"/>
<polygon points="452.3,137.4 456.7,165.8 458.5,148.2" fill="#ff4126" stroke="#ff4126"/>
<polygon points="441.2,105.9 440.7,127.3 433,117.5" fill="#e6bd18" stroke="#e6bd18"/>
<polygon points="495.7,105.9 504,117.5 496.2,127.3" fill="#e6bd18" stroke="#e6bd18"/>
<polygon points="457.1,194.5 456.2,181.5 449.7,172" fill="#5928b5" stroke="#5928b5"/>
<polygon points="480.8,181.5 479.8,194.5 487.2,172" fill="#5928b5" stroke="#5928b5"/>
<polygon points="433,117.5 424.8,129.2 425.6,111.4" fill="#e6b515" stroke="#e6b515"/>
<polygon points="511.3,111.4 512.1,129.2 504,117.5" fill="#e6b515" stroke="#e6b515"/>
<polygon points="425.6,111.4 424.8,129.2 417.1,121.8" fill="#e6b114" stroke="#e6b114"/>
<polygon points="519.8,121.8 512.1,129.2 511.3,111.4" fill="#e6b114" stroke="#e6b114"/>
<polygon points="409,131.6 410,118.3 417.1,121.8" fill="#e6a50f" stroke="#e6a50f"/>
<polygon points="519.8,121.8 526.9,118.3 528,131.6" fill="#e6a50f" stroke="#e6a50f"/>
<polygon points="526.9,118.3 535.6,127 528,131.6" fill="#e69f0c" stroke="#e69f0c"/>
<polygon points="401.3,127 410,118.3 409,131.6" fill="#e69f0c" stroke="#e69f0c"/>
<polygon points="394.4,126.3 401.3,127 393.1,134.5" fill="#e69308" stroke="#e69308"/>
<polygon points="543.8,134.5 535.6,127 542.5,126.3" fill="#e69308" stroke="#e69308"/>
<polygon points="452.3,137.4 450.3,155.2 456.7,165.8" fill="#ff4126" stroke="#ff4126"/>
<polygon points="484.6,137.4 480.3,165.8 486.6,155.2" fill="#fd4028" stroke="#fd4028"/>
<polygon points="486.4,186.6 479.8,194.5 477.5,203.9" fill="#3c26a4" stroke="#3c26a4"/>
<polygon points="450.5,186.6 459.4,203.9 457.1,194.5" fill="#3c26a4" stroke="#3c26a4"/>
<polygon points="487.2,172 486.6,155.2 480.8,181.5" fill="#9d347c" stroke="#9d347c"/>
<polygon points="449.7,172 456.2,181.5 450.3,155.2" fill="#9d347c" stroke="#9d347c"/>
<polygon points="477.5,203.9 468.5,210.1 473.7,209.4" fill="#20206c" stroke="#20206c"/>
<polygon points="463.2,209.4 468.5,210.1 459.4,203.9" fill="#20206c" stroke="#20206c"/>
<polygon points="455.5,120 452.3,137.4 458.5,148.2" fill="#e68301" stroke="#e68301"/>
<polygon points="478.4,148.2 484.6,137.4 481.4,120" fill="#e68301" stroke="#e68301"/>
<polygon points="487.2,172 479.8,194.5 486.4,186.6" fill="#5e29b1" stroke="#5e29b1"/>
<polygon points="450.5,186.6 457.1,194.5 449.7,172" fill="#5e29b1" stroke="#5e29b1"/>
<polygon points="473.7,209.4 468.5,210.1 463.2,209.4" fill="#1f1f68" stroke="#1f1f68"/>
<polygon points="487.4,95.7 495.7,105.9 488.2,114.2" fill="#e6e172" stroke="#e6e172"/>
<polygon points="448.7,114.2 441.2,105.9 449.5,95.7" fill="#e6e172" stroke="#e6e172"/>
<polygon points="434.2,101.7 441.2,105.9 433,117.5" fill="#e6dc66" stroke="#e6dc66"/>
<polygon points="504,117.5 495.7,105.9 502.7,101.7" fill="#e6dc66" stroke="#e6dc66"/>
<polygon points="473.7,209.4 484.2,198 477.5,203.9" fill="#302690" stroke="#302690"/>
<polygon points="463.2,209.4 459.4,203.9 452.8,198" fill="#302690" stroke="#302690"/>
<polygon points="433,117.5 425.6,111.4 434.2,101.7" fill="#e6d85c" stroke="#e6d85c"/>
<polygon points="504,117.5 502.7,101.7 511.3,111.4" fill="#e6d85c" stroke="#e6d85c"/>
<polygon points="477.5,203.9 484.2,198 486.4,186.6" fill="#4126ac" stroke="#4126ac"/>
<polygon points="450.5,186.6 452.8,198 459.4,203.9" fill="#4126ac" stroke="#4126ac"/>
<polygon points="418.9,109.6 425.6,111.4 417.1,121.8" fill="#e6d046" stroke="#e6d046"/>
<polygon points="511.3,111.4 518,109.6 519.8,121.8" fill="#e6d046" stroke="#e6d046"/>
<polygon points="519.8,121.8 518,109.6 526.9,118.3" fill="#e6cb39" stroke="#e6cb39"/>
<polygon points="410,118.3 418.9,109.6 417.1,121.8" fill="#e6cb39" stroke="#e6cb39"/>
<polygon points="535.6,127 526.9,118.3 533.3,119" fill="#e6c11f" stroke="#e6c11f"/>
<polygon points="410,118.3 401.3,127 403.7,119" fill="#e6c11f" stroke="#e6c11f"/>
<polygon points="403.7,119 401.3,127 394.4,126.3" fill="#e6b917" stroke="#e6b917"/>
<polygon points="535.6,127 533.3,119 542.5,126.3" fill="#e6b917" stroke="#e6b917"/>
<polygon points="487.2,172 494.1,145.3 486.6,155.2" fill="#fd4028" stroke="#fd4028"/>
<polygon points="450.3,155.2 442.9,145.3 449.7,172" fill="#ff4126" stroke="#ff4126"/>
<polygon points="486.6,155.2 491.9,128.1 484.6,137.4" fill="#e67f00" stroke="#e67f00"/>
<polygon points="445,128.1 450.3,155.2 452.3,137.4" fill="#e67f00" stroke="#e67f00"/>
<polygon points="452.3,137.4 455.5,120 448.4,112" fill="#e6c01c" stroke="#e6c01c"/>
<polygon points="488.5,112 481.4,120 484.6,137.4" fill="#e6bf19" stroke="#e6bf19"/>
<polygon points="473.7,209.4 463.2,209.4 468.5,211.4" fill="#262680" stroke="#262680"/>
<polygon points="486.4,186.6 494.8,162.4 487.2,172" fill="#a43476" stroke="#a43476"/>
<polygon points="449.7,172 442.1,162.4 450.5,186.6" fill="#a43476" stroke="#a43476"/>
<polygon points="494.2,94.2 495.7,105.9 487.4,95.7" fill="#f1f1bb" stroke="#f1f1bb"/>
<polygon points="449.5,95.7 441.2,105.9 442.7,94.2" fill="#f1f1bb" stroke="#f1f1bb"/>
<polygon points="480.4,205.9 484.2,198 473.7,209.4" fill="#36269a" stroke="#36269a"/>
<polygon points="452.8,198 456.5,205.9 463.2,209.4" fill="#36269a" stroke="#36269a"/>
<polygon points="442.7,94.2 441.2,105.9 434.2,101.7" fill="#f0f0b3" stroke="#f0f0b3"/>
<polygon points="502.7,101.7 495.7,105.9 494.2,94.2" fill="#f0f0b3" stroke="#f0f0b3"/>
<polygon points="491.9,128.1 486.6,155.2 494.1,145.3" fill="#e77d02" stroke="#e77d02"/>
<polygon points="450.3,155.2 445,128.1 442.9,145.3" fill="#e77d02" stroke="#e77d02"/>
<polygon points="442.7,177.9 452.8,198 450.5,186.6" fill="#6c2ca5" stroke="#6c2ca5"/>
<polygon points="486.4,186.6 484.2,198 494.2,177.9" fill="#6c2ca5" stroke="#6c2ca5"/>
<polygon points="488.5,112 484.6,137.4 491.9,128.1" fill="#e6bd18" stroke="#e6bd18"/>
<polygon points="445,128.1 452.3,137.4 448.4,112" fill="#e6bd18" stroke="#e6bd18"/>
<polygon points="494.8,162.4 494.1,145.3 487.2,172" fill="#fd4028" stroke="#fd4028"/>
<polygon points="449.7,172 442.9,145.3 442.1,162.4" fill="#ff4126" stroke="#ff4126"/>
<polygon points="448.4,112 455.5,120 452.9,98.6" fill="#e6e172" stroke="#e6e172"/>
<polygon points="484,98.6 481.4,120 488.5,112" fill="#e6e172" stroke="#e6e172"/>
<polygon points="468.5,211.4 463.2,209.4 456.5,205.9" fill="#2e268c" stroke="#2e268c"/>
<polygon points="468.5,211.4 480.4,205.9 473.7,209.4" fill="#2e268c" stroke="#2e268c"/>
<polygon points="425.6,111.4 427.9,102.3 434.2,101.7" fill="#eaea97" stroke="#eaea97"/>
<polygon points="511.3,111.4 502.7,101.7 509,102.3" fill="#eaea97" stroke="#eaea97"/>
<polygon points="450.5,186.6 442.1,162.4 442.7,177.9" fill="#a73573" stroke="#a73573"/>
<polygon points="494.2,177.9 494.8,162.4 486.4,186.6" fill="#a73573" stroke="#a73573"/>
<polygon points="418.9,109.6 427.9,102.3 425.6,111.4" fill="#e7e787" stroke="#e7e787"/>
<polygon points="511.3,111.4 509,102.3 518,109.6" fill="#e7e787" stroke="#e7e787"/>
<polygon points="450.9,89.7 449.5,95.7 442.7,94.2" fill="#fdfdf3" stroke="#fdfdf3"/>
<polygon points="486,89.7 494.2,94.2 487.4,95.7" fill="#fdfdf3" stroke="#fdfdf3"/>
<polygon points="523.8,112.3 526.9,118.3 518,109.6" fill="#e6dc66" stroke="#e6dc66"/>
<polygon points="418.9,109.6 410,118.3 413.1,112.3" fill="#e6dc66" stroke="#e6dc66"/>
<polygon points="533.3,119 526.9,118.3 523.8,112.3" fill="#e6d656" stroke="#e6d656"/>
<polygon points="413.1,112.3 410,118.3 403.7,119" fill="#e6d656" stroke="#e6d656"/>
<polygon points="394.4,126.3 398.3,124 403.7,119" fill="#e6c932" stroke="#e6c932"/>
<polygon points="542.5,126.3 533.3,119 538.7,124" fill="#e6c932" stroke="#e6c932"/>
<polygon points="484.2,198 480.4,205.9 492.1,190.9" fill="#4a26bc" stroke="#4a26bc"/>
<polygon points="452.8,198 444.8,190.9 456.5,205.9" fill="#4a26bc" stroke="#4a26bc"/>
<polygon points="492.1,190.9 494.2,177.9 484.2,198" fill="#732d9f" stroke="#732d9f"/>
<polygon points="442.7,177.9 444.8,190.9 452.8,198" fill="#732d9f" stroke="#732d9f"/>
<polygon points="452.9,98.6 445.1,96.2 448.4,112" fill="#f1f1bb" stroke="#f1f1bb"/>
<polygon points="491.8,96.2 484,98.6 488.5,112" fill="#f1f1bb" stroke="#f1f1bb"/>
<polygon points="442.7,94.2 434.2,101.7 436.7,97.5" fill="#f8f8db" stroke="#f8f8db"/>
<polygon points="494.2,94.2 500.2,97.5 502.7,101.7" fill="#f8f8db" stroke="#f8f8db"/>
<polygon points="450.9,89.7 445.1,96.2 452.9,98.6" fill="#fdfdf3" stroke="#fdfdf3"/>
<polygon points="486,89.7 484,98.6 491.8,96.2" fill="#fdfdf3" stroke="#fdfdf3"/>
<polygon points="440.4,107 445,128.1 448.4,112" fill="#e6dc66" stroke="#e6dc66"/>
<polygon points="491.9,128.1 496.6,107 488.5,112" fill="#e6dc66" stroke="#e6dc66"/>
<polygon points="442.7,94.2 445.1,96.2 450.9,89.7" fill="#ffffff" stroke="#ffffff"/>
<polygon points="491.8,96.2 494.2,94.2 486,89.7" fill="#ffffff" stroke="#ffffff"/>
<polygon points="436.7,97.5 434.2,101.7 427.9,102.3" fill="#f5f5cf" stroke="#f5f5cf"/>
<polygon points="500.2,97.5 509,102.3 502.7,101.7" fill="#f5f5cf" stroke="#f5f5cf"/>
<polygon points="442.9,145.3 445,128.1 436.7,121.1" fill="#e6b515" stroke="#e6b515"/>
<polygon points="500.2,121.1 491.9,128.1 494.1,145.3" fill="#e6b515" stroke="#e6b515"/>
<polygon points="456.5,205.9 461.7,210.2 468.5,211.4" fill="#36269a" stroke="#36269a"/>
<polygon points="475.2,210.2 480.4,205.9 468.5,211.4" fill="#36269a" stroke="#36269a"/>
<polygon points="442.1,162.4 442.9,145.3 434.4,137.2" fill="#e87904" stroke="#e87904"/>
<polygon points="494.1,145.3 494.8,162.4 502.6,137.2" fill="#e87904" stroke="#e87904"/>
<polygon points="448.4,112 445.1,96.2 440.4,107" fill="#f0f0b3" stroke="#f0f0b3"/>
<polygon points="488.5,112 496.6,107 491.8,96.2" fill="#f0f0b3" stroke="#f0f0b3"/>
<polygon points="494.2,94.2 491.8,96.2 500.2,97.5" fill="#fdfdf3" stroke="#fdfdf3"/>
<polygon points="442.7,94.2 436.7,97.5 445.1,96.2" fill="#fdfdf3" stroke="#fdfdf3"/>
<polygon points="422.5,107.5 427.9,102.3 418.9,109.6" fill="#eeeeab" stroke="#eeeeab"/>
<polygon points="518,109.6 509,102.3 514.4,107.5" fill="#eeeeab" stroke="#eeeeab"/>
<polygon points="494.8,162.4 494.2,177.9 503.6,153.9" fill="#fd4028" stroke="#fd4028"/>
<polygon points="442.7,177.9 442.1,162.4 433.3,153.9" fill="#ff4126" stroke="#ff4126"/>
<polygon points="436.7,121.1 445,128.1 440.4,107" fill="#e6d85c" stroke="#e6d85c"/>
<polygon points="491.9,128.1 500.2,121.1 496.6,107" fill="#e6d85c" stroke="#e6d85c"/>
<polygon points="422.5,107.5 418.9,109.6 413.1,112.3" fill="#e9e993" stroke="#e9e993"/>
<polygon points="518,109.6 514.4,107.5 523.8,112.3" fill="#e9e993" stroke="#e9e993"/>
<polygon points="434.4,137.2 442.9,145.3 436.7,121.1" fill="#e6b114" stroke="#e6b114"/>
<polygon points="494.1,145.3 502.6,137.2 500.2,121.1" fill="#e6b114" stroke="#e6b114"/>
<polygon points="468.5,211.4 461.7,210.2 475.2,210.2" fill="#36269a" stroke="#36269a"/>
<polygon points="445.1,96.2 436.7,97.5 440.4,107" fill="#f8f8db" stroke="#f8f8db"/>
<polygon points="500.2,97.5 491.8,96.2 496.6,107" fill="#f8f8db" stroke="#f8f8db"/>
<polygon points="523.8,112.3 528.7,119.3 533.3,119" fill="#e6de6c" stroke="#e6de6c"/>
<polygon points="403.7,119 408.2,119.3 413.1,112.3" fill="#e6de6c" stroke="#e6de6c"/>
<polygon points="488.6,200.6 492.1,190.9 480.4,205.9" fill="#5428b9" stroke="#5428b9"/>
<polygon points="448.4,200.6 456.5,205.9 444.8,190.9" fill="#5428b9" stroke="#5428b9"/>
<polygon points="502.6,137.2 494.8,162.4 503.6,153.9" fill="#e97705" stroke="#e97705"/>
<polygon points="433.3,153.9 442.1,162.4 434.4,137.2" fill="#e97705" stroke="#e97705"/>
<polygon points="403.7,119 398.3,124 408.2,119.3" fill="#e6d656" stroke="#e6d656"/>
<polygon points="533.3,119 528.7,119.3 538.7,124" fill="#e6d656" stroke="#e6d656"/>
<polygon points="427.9,102.3 431.7,105.5 436.7,97.5" fill="#f7f7d7" stroke="#f7f7d7"/>
<polygon points="505.3,105.5 509,102.3 500.2,97.5" fill="#f7f7d7" stroke="#f7f7d7"/>
<polygon points="503.2,169.7 494.2,177.9 492.1,190.9" fill="#b43668" stroke="#b43668"/>
<polygon points="433.7,169.7 444.8,190.9 442.7,177.9" fill="#b43668" stroke="#b43668"/>
<polygon points="448.4,200.6 461.7,210.2 456.5,205.9" fill="#4326b0" stroke="#4326b0"/>
<polygon points="488.6,200.6 480.4,205.9 475.2,210.2" fill="#4326b0" stroke="#4326b0"/>
<polygon points="436.7,97.5 431.7,105.5 440.4,107" fill="#f5f5cf" stroke="#f5f5cf"/>
<polygon points="505.3,105.5 500.2,97.5 496.6,107" fill="#f5f5cf" stroke="#f5f5cf"/>
<polygon points="431.7,105.5 427.9,102.3 422.5,107.5" fill="#f3f3c3" stroke="#f3f3c3"/>
<polygon points="505.3,105.5 514.4,107.5 509,102.3" fill="#f3f3c3" stroke="#f3f3c3"/>
<polygon points="440.4,107 431.7,105.5 436.7,121.1" fill="#eaea97" stroke="#eaea97"/>
<polygon points="496.6,107 500.2,121.1 505.3,105.5" fill="#eaea97" stroke="#eaea97"/>
<polygon points="503.6,153.9 494.2,177.9 503.2,169.7" fill="#fd4028" stroke="#fd4028"/>
<polygon points="442.7,177.9 433.3,153.9 433.7,169.7" fill="#ff4126" stroke="#ff4126"/>
<polygon points="436.7,121.1 427.7,117.3 434.4,137.2" fill="#e6d046" stroke="#e6d046"/>
<polygon points="509.2,117.3 500.2,121.1 502.6,137.2" fill="#e6d046" stroke="#e6d046"/>
<polygon points="523.8,112.3 514.4,107.5 518.8,116.8" fill="#eaea97" stroke="#eaea97"/>
<polygon points="422.5,107.5 413.1,112.3 418.1,116.8" fill="#eaea97" stroke="#eaea97"/>
<polygon points="431.7,105.5 427.7,117.3 436.7,121.1" fill="#e7e787" stroke="#e7e787"/>
<polygon points="505.3,105.5 500.2,121.1 509.2,117.3" fill="#e7e787" stroke="#e7e787"/>
<polygon points="427.7,117.3 431.7,105.5 422.5,107.5" fill="#eeeeab" stroke="#eeeeab"/>
<polygon points="509.2,117.3 514.4,107.5 505.3,105.5" fill="#eeeeab" stroke="#eeeeab"/>
<polygon points="518.8,116.8 528.7,119.3 523.8,112.3" fill="#e6e57f" stroke="#e6e57f"/>
<polygon points="418.1,116.8 413.1,112.3 408.2,119.3" fill="#e6e57f" stroke="#e6e57f"/>
<polygon points="503.6,153.9 511.9,131.7 502.6,137.2" fill="#e6a50f" stroke="#e6a50f"/>
<polygon points="433.3,153.9 434.4,137.2 425,131.7" fill="#e6a50f" stroke="#e6a50f"/>
<polygon points="444.8,190.9 435.5,183.5 448.4,200.6" fill="#822f93" stroke="#822f93"/>
<polygon points="501.4,183.5 492.1,190.9 488.6,200.6" fill="#822f93" stroke="#822f93"/>
<polygon points="501.4,183.5 503.2,169.7 492.1,190.9" fill="#b73765" stroke="#b73765"/>
<polygon points="435.5,183.5 444.8,190.9 433.7,169.7" fill="#b73765" stroke="#b73765"/>
<polygon points="509.2,117.3 502.6,137.2 511.9,131.7" fill="#e6cb39" stroke="#e6cb39"/>
<polygon points="425,131.7 434.4,137.2 427.7,117.3" fill="#e6cb39" stroke="#e6cb39"/>
<polygon points="418.1,116.8 427.7,117.3 422.5,107.5" fill="#e9e993" stroke="#e9e993"/>
<polygon points="509.2,117.3 518.8,116.8 514.4,107.5" fill="#e9e993" stroke="#e9e993"/>
<polygon points="528.7,119.3 532.3,129.7 538.7,124" fill="#e6d656" stroke="#e6d656"/>
<polygon points="408.2,119.3 398.3,124 404.6,129.7" fill="#e6d656" stroke="#e6d656"/>
<polygon points="503.6,153.9 503.2,169.7 513.3,147.4" fill="#ec6f0a" stroke="#ec6f0a"/>
<polygon points="433.7,169.7 433.3,153.9 423.6,147.4" fill="#ec6f0a" stroke="#ec6f0a"/>
<polygon points="425,131.7 427.7,117.3 418.1,116.8" fill="#e6dc66" stroke="#e6dc66"/>
<polygon points="511.9,131.7 518.8,116.8 509.2,117.3" fill="#e6dc66" stroke="#e6dc66"/>
<polygon points="425,131.7 423.6,147.4 433.3,153.9" fill="#e69f0c" stroke="#e69f0c"/>
<polygon points="513.3,147.4 511.9,131.7 503.6,153.9" fill="#e69f0c" stroke="#e69f0c"/>
<polygon points="418.1,116.8 408.2,119.3 415,129.2" fill="#e6de6c" stroke="#e6de6c"/>
<polygon points="528.7,119.3 518.8,116.8 521.9,129.2" fill="#e6de6c" stroke="#e6de6c"/>
<polygon points="418.1,116.8 415,129.2 425,131.7" fill="#e6d656" stroke="#e6d656"/>
<polygon points="521.9,129.2 518.8,116.8 511.9,131.7" fill="#e6d656" stroke="#e6d656"/>
<polygon points="532.3,129.7 528.7,119.3 521.9,129.2" fill="#e6d656" stroke="#e6d656"/>
<polygon points="404.6,129.7 415,129.2 408.2,119.3" fill="#e6d656" stroke="#e6d656"/>
<polygon points="513.3,162.9 503.2,169.7 501.4,183.5" fill="#fd4028" stroke="#fd4028"/>
<polygon points="423.6,162.9 435.5,183.5 433.7,169.7" fill="#ff4126" stroke="#ff4126"/>
<polygon points="425,131.7 415,129.2 423.6,147.4" fill="#e6c11f" stroke="#e6c11f"/>
<polygon points="513.3,147.4 521.9,129.2 511.9,131.7" fill="#e6c11f" stroke="#e6c11f"/>
<polygon points="513.3,147.4 503.2,169.7 513.3,162.9" fill="#ed6d0b" stroke="#ed6d0b"/>
<polygon points="433.7,169.7 423.6,147.4 423.6,162.9" fill="#ed6d0b" stroke="#ed6d0b"/>
<polygon points="413.2,143.6 423.6,147.4 415,129.2" fill="#e6b917" stroke="#e6b917"/>
<polygon points="523.8,143.6 521.9,129.2 513.3,147.4" fill="#e6b917" stroke="#e6b917"/>
<polygon points="413.2,143.6 415,129.2 404.6,129.7" fill="#e6c932" stroke="#e6c932"/>
<polygon points="521.9,129.2 523.8,143.6 532.3,129.7" fill="#e6c932" stroke="#e6c932"/>
<polygon points="513.3,162.9 523.8,143.6 513.3,147.4" fill="#e69308" stroke="#e69308"/>
<polygon points="423.6,162.9 423.6,147.4 413.2,143.6" fill="#e69308" stroke="#e69308"/>
</g></svg>
<div class="box" style="left:1788px;top:661px;width:129px;height:356px"></div>
<div class="a" style="left:1789px;top:662px;width:110px;height:354px;overflow:hidden">
<svg style="left:0;top:0" width="110" height="354" viewBox="1789 662 110 354"><rect x="1794" y="655" width="100" height="16.700000000000045" fill="#fff"/><rect x="1794" y="677.9" width="100" height="51.700000000000045" fill="#fff"/><rect x="1794" y="735.9" width="100" height="49.60000000000002" fill="#fff"/><rect x="1794" y="792.3" width="100" height="67.10000000000002" fill="#fff"/><rect x="1794" y="866" width="100" height="91.60000000000002" fill="#fff"/><path d="M1798 664.300h95.500" stroke="#9a9a9a" stroke-width=".4" fill="none"/><path d="M1799.0 667.500l2.500-1.500M1813.5 667.500l2.500-1.500M1828.0 667.500l2.500-1.500M1842.5 667.500l2.500-1.500M1857.0 667.500l2.500-1.500M1871.5 667.500l2.500-1.500M1886.0 667.500l2.500-1.500M1840 669.500h9" stroke="#888" stroke-width=".5" fill="none"/><rect x="1798.200" y="679" width="95.200" height="44.200" stroke="#9a9a9a" stroke-width=".4" fill="none"/><polygon points="1802.0,711.5 1802.5,710.7 1803.0,710.9 1803.5,712.2 1804.0,711.8 1804.6,710.0 1805.1,712.0 1805.6,709.3 1806.1,708.8 1806.6,709.1 1807.1,708.8 1807.6,708.1 1808.1,707.3 1808.7,705.8 1809.2,704.8 1809.7,703.7 1810.2,701.6 1810.7,701.4 1811.2,701.3 1811.7,699.6 1812.2,701.5 1812.7,701.4 1813.3,699.8 1813.8,701.4 1814.3,701.4 1814.8,700.0 1815.3,700.2 1815.8,698.9 1816.3,699.9 1816.8,700.3 1817.4,700.4 1817.9,701.1 1818.4,701.8 1818.9,700.9 1819.4,698.9 1819.9,700.1 1820.4,698.9 1820.9,699.5 1821.4,696.0 1822.0,697.6 1822.5,696.4 1823.0,693.5 1823.5,694.1 1824.0,692.2 1824.5,692.4 1825.0,691.5 1825.5,693.5 1826.1,691.6 1826.6,691.6 1827.1,690.2 1827.6,692.2 1828.1,691.5 1828.6,693.7 1829.1,692.7 1829.6,693.2 1830.2,694.1 1830.7,691.8 1831.2,693.6 1831.7,691.3 1832.2,692.8 1832.7,692.6 1833.2,692.2 1833.7,691.7 1834.2,693.2 1834.8,691.6 1835.3,691.8 1835.8,690.6 1836.3,691.2 1836.8,687.2 1837.3,689.6 1837.8,687.4 1838.3,688.5 1838.9,686.0 1839.4,686.7 1839.9,688.7 1840.4,686.0 1840.9,685.8 1841.4,686.3 1841.9,687.9 1842.4,690.0 1842.9,690.3 1843.5,687.8 1844.0,689.7 1844.5,691.5 1845.0,689.0 1845.5,690.2 1846.0,690.5 1846.5,691.3 1847.0,691.1 1847.6,691.5 1848.1,692.0 1848.6,688.4 1849.1,689.6 1849.6,688.9 1850.1,689.3 1850.6,687.3 1851.1,689.8 1851.6,688.2 1852.2,689.4 1852.7,689.1 1853.2,685.9 1853.7,687.3 1854.2,688.5 1854.7,688.6 1855.2,687.7 1855.7,690.4 1856.3,690.0 1856.8,690.3 1857.3,692.2 1857.8,692.1 1858.3,691.7 1858.8,691.6 1859.3,694.8 1859.8,692.1 1860.3,695.7 1860.9,692.9 1861.4,692.6 1861.9,695.0 1862.4,693.8 1862.9,692.1 1863.4,694.8 1863.9,692.3 1864.4,691.6 1865.0,692.5 1865.5,691.7 1866.0,693.6 1866.5,693.9 1867.0,693.6 1867.5,694.7 1868.0,694.7 1868.5,693.2 1869.1,695.2 1869.6,696.8 1870.1,697.8 1870.6,696.3 1871.1,698.8 1871.6,697.7 1872.1,699.9 1872.6,700.4 1873.1,699.6 1873.7,700.4 1874.2,701.2 1874.7,701.8 1875.2,700.4 1875.7,701.9 1876.2,700.2 1876.7,702.8 1877.2,701.6 1877.8,701.3 1878.3,700.0 1878.8,702.2 1879.3,700.7 1879.8,701.4 1880.3,701.6 1880.8,702.4 1881.3,702.1 1881.8,704.6 1882.4,705.2 1882.9,706.7 1883.4,708.0 1883.9,708.4 1884.4,707.4 1884.9,708.5 1885.4,711.3 1885.9,710.7 1886.5,711.7 1887.0,711.9 1887.5,712.2 1888.0,713.5 1888.5,712.2 1888.5,717.5 1888.0,717.5 1887.5,716.9 1887.0,717.5 1886.5,716.4 1885.9,717.5 1885.4,715.1 1884.9,715.8 1884.4,714.2 1883.9,713.7 1883.4,711.7 1882.9,710.7 1882.4,712.3 1881.8,709.0 1881.3,708.4 1880.8,710.2 1880.3,709.4 1879.8,708.8 1879.3,706.9 1878.8,709.3 1878.3,708.6 1877.8,706.7 1877.2,707.6 1876.7,709.4 1876.2,709.2 1875.7,707.9 1875.2,709.1 1874.7,708.5 1874.2,707.9 1873.7,708.3 1873.1,709.0 1872.6,705.9 1872.1,706.7 1871.6,705.9 1871.1,705.5 1870.6,705.7 1870.1,705.1 1869.6,704.4 1869.1,701.7 1868.5,702.6 1868.0,701.1 1867.5,702.0 1867.0,701.8 1866.5,701.9 1866.0,701.9 1865.5,700.9 1865.0,700.7 1864.4,701.4 1863.9,699.3 1863.4,699.3 1862.9,702.4 1862.4,702.2 1861.9,701.6 1861.4,700.8 1860.9,700.6 1860.3,702.7 1859.8,701.7 1859.3,699.8 1858.8,700.6 1858.3,701.4 1857.8,701.5 1857.3,700.8 1856.8,700.0 1856.3,697.0 1855.7,698.7 1855.2,696.9 1854.7,698.3 1854.2,696.2 1853.7,694.9 1853.2,696.4 1852.7,697.1 1852.2,695.1 1851.6,695.1 1851.1,697.8 1850.6,694.9 1850.1,695.5 1849.6,695.9 1849.1,696.3 1848.6,699.2 1848.1,696.9 1847.6,698.0 1847.0,699.4 1846.5,700.2 1846.0,697.5 1845.5,698.9 1845.0,698.2 1844.5,697.6 1844.0,697.1 1843.5,698.0 1842.9,696.9 1842.4,696.5 1841.9,697.9 1841.4,696.8 1840.9,694.4 1840.4,695.2 1839.9,694.0 1839.4,696.2 1838.9,695.5 1838.3,695.0 1837.8,695.8 1837.3,698.5 1836.8,697.5 1836.3,696.7 1835.8,699.0 1835.3,697.1 1834.8,698.2 1834.2,701.5 1833.7,701.9 1833.2,701.6 1832.7,700.3 1832.2,702.3 1831.7,702.4 1831.2,701.6 1830.7,701.5 1830.2,699.2 1829.6,700.8 1829.1,700.7 1828.6,700.1 1828.1,698.5 1827.6,700.8 1827.1,700.3 1826.6,698.0 1826.1,700.5 1825.5,700.9 1825.0,699.3 1824.5,701.5 1824.0,701.4 1823.5,700.2 1823.0,701.6 1822.5,702.4 1822.0,702.1 1821.4,705.6 1820.9,706.7 1820.4,706.7 1819.9,704.6 1819.4,706.9 1818.9,705.9 1818.4,707.5 1817.9,707.8 1817.4,708.3 1816.8,707.4 1816.3,708.5 1815.8,706.4 1815.3,705.3 1814.8,707.2 1814.3,705.5 1813.8,706.8 1813.3,705.2 1812.7,707.0 1812.2,706.1 1811.7,706.7 1811.2,707.2 1810.7,707.2 1810.2,707.9 1809.7,708.7 1809.2,712.1 1808.7,711.8 1808.1,713.6 1807.6,714.2 1807.1,715.3 1806.6,713.8 1806.1,716.1 1805.6,716.8 1805.1,717.0 1804.6,716.4 1804.0,715.7 1803.5,716.1 1803.0,717.4 1802.5,717.4 1802.0,717.1" fill="#1f77b4" stroke="#1f77b4" stroke-width=".5" stroke-linejoin="round"/><path d="M1802 711.600h86.500" stroke="#ff9a3c" stroke-width=".7"/><path d="M1799.0 726.500l2.500-1.500M1813.5 726.500l2.500-1.500M1828.0 726.500l2.500-1.500M1842.5 726.500l2.500-1.500M1857.0 726.500l2.500-1.500M1871.5 726.500l2.500-1.500M1886.0 726.500l2.500-1.500M1840 728.300h9M1880 681h4M1880 683h4" stroke="#888" stroke-width=".5" fill="none"/><rect x="1798.200" y="736.800" width="95.200" height="43.800" stroke="#9a9a9a" stroke-width=".4" fill="none"/><path d="M1802.5 741.4V770.8M1811.1 742.1V768.5M1819.6 744.2V776.2M1828.2 741.8V770.0M1836.8 740.0V772.5M1845.3 740.7V775.7M1853.9 740.7V774.0M1862.5 742.4V770.5M1871.1 742.9V772.8M1879.6 743.8V775.9M1888.2 740.5V769.0" stroke="#2a7ab8" stroke-width=".9" fill="none"/><path d="M1802.5 758.0L1802.5 764.4M1802.5 764.4L1811.1 767.9M1811.1 767.9L1819.6 758.2M1819.6 758.2L1828.2 756.6M1828.2 756.6L1836.8 756.6M1836.8 756.6L1845.3 761.3M1845.3 761.3L1853.9 758.5M1853.9 758.5L1862.5 761.7M1862.5 761.7L1871.1 760.1M1871.1 760.1L1879.6 757.3M1879.6 757.3L1888.2 767.7" stroke="#5a9bd0" stroke-width=".4" fill="none"/><path d="M1802 758.200h87" stroke="#ff9a3c" stroke-width=".6"/><path d="M1800.0 783l2-1.200M1817.2 783l2-1.200M1834.4 783l2-1.200M1851.6 783l2-1.200M1868.8 783l2-1.200M1886.0 783l2-1.200M1840 784.500h9M1880 738.500h4" stroke="#888" stroke-width=".5" fill="none"/><rect x="1806.400" y="793.900" width="86" height="56.400" stroke="#9a9a9a" stroke-width=".4" fill="none"/><defs><linearGradient id="scg" x1="0" x2="1"><stop offset="0" stop-color="#ff2a2a" stop-opacity=".3"/><stop offset=".5" stop-color="#ff2a2a" stop-opacity=".5"/><stop offset="1" stop-color="#ff1a1a" stop-opacity=".75"/></linearGradient></defs><polygon points="1820.500,796.200 1832,797 1860,805 1888.500,814 1889,839 1880,846 1866,842 1848,833 1834,822 1824,812" fill="url(#scg)"/><path d="M1884.8 834.0h.6M1864.4 815.6h.6M1853.6 817.0h.6M1861.5 823.7h.6M1876.4 837.6h.6M1876.6 833.5h.6M1841.2 806.3h.6M1885.1 827.5h.6M1886.6 829.9h.6M1880.3 834.9h.6M1860.0 826.9h.6M1854.9 826.8h.6M1878.1 840.8h.6M1886.7 834.9h.6M1865.1 815.4h.6M1866.3 819.8h.6M1871.5 820.4h.6M1846.0 812.9h.6M1861.5 817.9h.6M1879.9 843.0h.6M1873.3 821.3h.6M1858.3 819.5h.6M1876.7 838.0h.6M1856.0 823.1h.6M1875.0 835.3h.6M1866.4 817.0h.6M1859.6 822.2h.6M1859.6 812.3h.6M1868.2 824.4h.6M1849.7 828.8h.6M1832.6 804.4h.6M1879.8 821.4h.6M1860.8 821.9h.6M1852.8 812.6h.6M1877.0 828.1h.6M1872.8 822.0h.6M1871.6 817.7h.6M1871.9 835.6h.6M1853.0 813.8h.6M1878.1 828.1h.6M1853.0 817.9h.6M1871.5 829.8h.6M1854.8 811.0h.6M1839.0 810.9h.6M1839.5 814.9h.6M1827.6 808.6h.6M1826.1 809.0h.6M1842.5 816.2h.6M1880.2 828.1h.6M1873.4 828.3h.6M1878.7 839.4h.6M1838.1 814.1h.6M1884.8 822.2h.6M1873.2 829.0h.6M1854.7 819.3h.6M1875.1 831.8h.6M1854.6 815.5h.6M1851.6 818.1h.6M1883.2 816.2h.6M1822.8 798.3h.6M1879.8 809.0h.6M1885.2 821.6h.6M1879.4 822.3h.6M1867.0 828.6h.6M1878.6 825.1h.6M1862.0 822.9h.6M1872.0 827.3h.6M1875.0 829.9h.6M1874.6 817.7h.6M1861.1 826.2h.6M1852.9 821.6h.6M1842.7 807.7h.6M1876.9 829.8h.6M1864.8 831.4h.6M1833.1 822.6h.6M1822.7 814.1h.6M1832.8 812.4h.6M1861.1 821.1h.6M1858.2 824.3h.6M1886.6 826.0h.6M1868.2 822.0h.6M1866.7 812.9h.6M1841.9 815.8h.6M1867.1 819.5h.6M1856.6 824.0h.6M1836.6 811.6h.6M1847.8 823.3h.6M1829.6 807.8h.6M1884.9 827.7h.6M1864.3 827.2h.6M1855.2 815.7h.6M1879.8 819.2h.6M1883.5 819.9h.6M1864.8 820.0h.6M1830.7 809.4h.6M1855.1 819.0h.6M1854.7 817.3h.6M1876.6 831.4h.6M1853.6 814.5h.6M1860.0 810.8h.6M1875.1 832.6h.6M1875.0 818.4h.6M1836.0 805.7h.6M1885.5 818.9h.6M1861.3 826.6h.6M1888.4 818.6h.6M1878.5 837.0h.6M1861.3 814.4h.6M1885.0 814.6h.6M1858.2 816.4h.6M1877.0 833.8h.6M1845.9 813.4h.6M1876.3 840.9h.6M1842.5 815.3h.6M1851.4 813.3h.6M1868.2 831.6h.6M1868.1 814.3h.6M1886.7 827.4h.6M1888.4 820.7h.6M1886.8 830.6h.6M1875.2 825.0h.6M1829.6 804.6h.6M1855.1 823.7h.6M1860.0 812.6h.6M1848.2 814.8h.6M1836.5 807.3h.6M1827.8 806.2h.6M1841.5 807.0h.6M1834.7 812.7h.6M1869.7 824.9h.6M1886.7 833.5h.6M1826.0 801.0h.6M1874.8 824.0h.6M1843.0 812.9h.6M1848.5 813.5h.6M1864.9 829.4h.6M1875.0 840.9h.6M1853.1 822.4h.6M1836.1 802.6h.6M1831.2 809.7h.6M1886.6 833.3h.6M1870.2 817.5h.6M1880.0 815.4h.6M1863.5 814.8h.6M1859.7 820.6h.6M1825.9 808.2h.6M1851.3 827.4h.6M1887.1 839.9h.6M1851.6 817.6h.6M1854.3 809.1h.6M1880.2 826.2h.6M1832.8 812.1h.6M1873.1 836.6h.6M1880.2 818.3h.6M1883.4 829.8h.6M1865.1 819.2h.6M1880.3 820.3h.6M1849.7 812.7h.6M1859.9 817.2h.6M1851.3 832.1h.6M1848.2 816.1h.6M1858.1 821.9h.6M1836.1 798.2h.6M1851.2 813.6h.6M1845.9 810.7h.6M1853.5 814.9h.6M1868.3 822.9h.6M1860.3 822.1h.6M1838.0 812.9h.6M1850.1 805.3h.6M1859.7 817.0h.6M1875.0 843.8h.6M1861.3 817.3h.6M1874.8 837.3h.6M1827.5 799.7h.6M1863.4 815.2h.6M1856.7 815.6h.6M1884.9 817.4h.6M1856.8 808.8h.6M1871.6 824.4h.6M1883.7 816.4h.6M1861.5 820.7h.6M1866.8 821.3h.6M1868.8 817.3h.6M1836.4 814.7h.6M1883.4 821.8h.6M1849.6 811.5h.6M1885.1 837.0h.6M1880.2 831.9h.6M1871.8 817.6h.6M1883.3 825.2h.6M1856.3 830.7h.6M1854.6 810.7h.6M1875.2 816.9h.6M1886.9 828.7h.6M1882.1 825.4h.6M1878.2 824.4h.6M1851.4 818.2h.6M1837.5 808.0h.6M1871.7 828.9h.6M1862.8 812.1h.6M1864.6 817.9h.6M1866.4 817.7h.6M1845.0 802.3h.6M1883.3 820.9h.6M1821.0 801.2h.6M1831.0 814.3h.6M1874.9 831.7h.6M1836.5 810.2h.6M1888.2 838.7h.6M1850.9 809.2h.6M1885.4 834.2h.6M1870.0 818.5h.6M1863.1 824.5h.6M1871.3 814.5h.6M1883.1 829.8h.6M1885.0 828.6h.6M1875.3 833.7h.6M1833.0 800.7h.6M1878.3 834.7h.6M1870.3 828.1h.6M1875.3 827.6h.6M1863.1 812.6h.6M1859.7 817.4h.6M1854.4 818.9h.6M1866.8 825.0h.6M1839.8 812.4h.6M1872.3 822.5h.6M1849.7 818.2h.6M1832.9 808.8h.6M1853.2 827.6h.6M1868.6 822.3h.6M1874.6 836.8h.6M1834.6 821.9h.6M1883.4 827.7h.6M1875.0 837.6h.6M1864.6 826.0h.6M1856.6 811.4h.6M1861.7 822.6h.6M1846.4 824.9h.6M1883.1 842.3h.6M1837.8 804.1h.6M1863.4 828.1h.6M1875.3 821.0h.6M1839.8 813.5h.6M1879.7 826.7h.6M1879.7 829.1h.6M1888.1 829.6h.6M1856.1 813.7h.6M1858.0 829.7h.6M1879.7 832.6h.6M1861.3 827.3h.6M1844.8 815.4h.6M1880.2 827.8h.6M1871.8 838.7h.6M1876.4 832.0h.6M1873.3 815.9h.6M1840.6 826.8h.6M1881.5 845.8h.6M1846.3 808.4h.6M1886.4 835.9h.6M1864.8 833.5h.6M1865.2 815.6h.6M1888.2 834.5h.6M1840.0 810.7h.6M1859.5 809.5h.6M1854.9 815.2h.6M1888.7 829.5h.6M1841.3 815.5h.6M1844.2 812.2h.6M1824.1 809.6h.6M1863.0 817.9h.6M1888.7 828.7h.6M1848.4 810.5h.6M1887.2 825.2h.6M1853.1 808.0h.6M1859.9 825.8h.6M1863.0 825.7h.6M1836.5 806.1h.6M1876.4 819.8h.6M1851.6 822.1h.6M1854.8 821.7h.6M1855.0 815.3h.6M1881.5 824.9h.6M1873.5 824.3h.6M1873.7 834.7h.6M1861.9 816.1h.6M1847.7 819.8h.6M1860.0 831.2h.6M1825.8 805.7h.6M1859.8 821.2h.6M1882.0 829.5h.6M1883.6 837.2h.6M1880.8 818.0h.6M1861.5 828.7h.6M1878.8 822.5h.6M1856.3 833.3h.6M1886.5 833.9h.6M1856.4 811.0h.6M1834.2 807.8h.6M1823.1 810.3h.6M1871.9 835.5h.6M1876.7 820.1h.6M1856.9 812.0h.6M1861.7 818.8h.6M1856.0 809.0h.6M1878.5 839.8h.6M1877.2 834.2h.6M1875.1 817.8h.6M1849.2 811.6h.6M1871.2 819.1h.6M1871.3 826.5h.6M1850.0 813.4h.6M1854.7 818.8h.6M1847.4 813.7h.6M1832.6 805.2h.6M1859.8 821.1h.6M1850.1 818.1h.6M1829.2 802.0h.6M1886.6 827.9h.6M1831.2 803.3h.6M1860.4 819.6h.6M1878.3 827.4h.6M1846.4 822.5h.6M1861.1 818.3h.6M1850.8 818.4h.6M1859.7 822.4h.6M1844.4 819.5h.6M1844.5 808.8h.6M1835.9 818.1h.6M1878.6 817.0h.6M1861.4 817.4h.6M1849.2 816.2h.6M1844.5 807.2h.6M1856.4 827.3h.6M1881.6 821.3h.6M1848.3 811.1h.6M1873.6 832.7h.6M1858.4 831.5h.6M1836.2 815.5h.6M1883.6 814.5h.6M1861.6 803.0h.6M1852.9 818.9h.6M1832.6 813.7h.6M1881.7 839.0h.6M1885.7 828.7h.6M1884.9 844.4h.6M1872.9 831.8h.6M1885.4 818.3h.6M1854.4 824.1h.6M1886.8 830.0h.6M1836.3 803.5h.6M1868.1 817.1h.6M1856.2 814.6h.6M1883.5 841.2h.6M1863.3 832.4h.6M1854.6 811.5h.6M1879.5 839.4h.6M1881.4 824.4h.6M1849.8 801.1h.6M1859.5 820.6h.6M1885.6 827.9h.6M1883.8 826.0h.6M1882.0 826.3h.6M1861.6 824.8h.6M1872.2 828.8h.6M1866.3 835.2h.6M1829.3 807.2h.6M1880.2 817.1h.6M1866.5 827.1h.6M1885.1 829.5h.6M1854.8 809.0h.6M1846.6 826.3h.6M1860.1 821.3h.6M1877.0 832.7h.6M1866.7 825.3h.6M1873.2 838.3h.6M1848.0 822.6h.6M1885.6 830.7h.6M1885.0 845.7h.6M1868.0 829.5h.6M1876.5 834.4h.6M1861.5 819.6h.6M1880.2 825.3h.6M1881.8 833.9h.6M1851.6 819.8h.6M1883.4 839.7h.6M1858.1 821.7h.6M1885.1 829.0h.6M1853.6 822.2h.6M1877.2 827.1h.6M1880.1 838.7h.6M1856.2 823.4h.6M1846.2 812.0h.6M1861.2 824.2h.6M1883.4 826.4h.6M1879.9 837.5h.6M1869.9 819.7h.6M1880.0 817.3h.6M1849.6 816.9h.6M1868.4 824.6h.6M1846.6 806.4h.6M1846.7 814.0h.6M1868.1 814.5h.6M1854.4 826.4h.6M1871.8 834.9h.6M1856.2 830.5h.6M1880.1 830.0h.6M1870.3 817.1h.6M1863.2 819.2h.6M1823.9 805.1h.6M1846.1 815.8h.6M1829.2 812.7h.6M1856.1 813.1h.6M1881.7 836.5h.6M1825.8 814.1h.6M1852.6 811.6h.6M1837.9 815.6h.6M1878.4 833.3h.6M1870.3 812.8h.6M1849.5 800.7h.6M1871.5 838.9h.6M1844.7 813.5h.6M1829.3 806.3h.6M1875.2 828.4h.6M1869.9 837.3h.6M1825.7 803.9h.6M1876.5 827.6h.6M1873.0 831.7h.6M1871.6 816.7h.6M1882.2 819.9h.6M1868.2 814.5h.6M1863.0 817.6h.6M1828.2 808.5h.6M1875.5 825.4h.6M1864.8 831.4h.6M1871.8 833.3h.6M1875.1 821.6h.6M1876.5 838.8h.6M1855.0 822.6h.6M1883.6 836.2h.6M1876.5 825.9h.6M1868.3 825.9h.6M1854.0 819.0h.6M1857.1 817.5h.6M1878.5 837.3h.6M1851.8 809.5h.6M1881.9 826.1h.6M1866.5 834.3h.6M1883.6 831.7h.6M1843.1 817.1h.6M1847.5 825.3h.6M1825.8 798.0h.6M1851.5 812.5h.6M1842.9 808.0h.6M1863.1 821.0h.6M1832.7 806.6h.6M1846.5 814.0h.6M1854.3 819.2h.6M1847.8 819.0h.6M1878.3 819.0h.6M1873.0 816.0h.6M1887.5 825.5h.6M1849.4 819.0h.6M1851.9 807.2h.6M1837.7 809.6h.6M1856.5 820.0h.6M1855.3 826.1h.6M1888.5 828.0h.6M1876.5 829.7h.6M1877.9 821.1h.6M1866.4 833.7h.6M1879.9 832.8h.6M1878.2 829.9h.6M1873.7 834.7h.6M1885.3 837.7h.6M1876.6 823.0h.6M1829.2 804.5h.6M1846.8 816.8h.6M1885.1 835.2h.6M1880.1 825.9h.6M1842.9 820.2h.6M1859.8 819.8h.6M1843.1 820.8h.6M1880.0 827.3h.6M1841.1 813.5h.6M1875.3 836.8h.6M1881.6 839.1h.6M1885.0 821.8h.6M1858.1 820.1h.6M1827.8 806.9h.6M1850.0 817.7h.6M1839.5 812.7h.6M1833.1 812.0h.6M1851.4 814.9h.6M1881.8 827.0h.6M1844.6 817.3h.6M1861.6 823.4h.6M1851.5 816.4h.6M1861.6 826.6h.6M1874.6 821.2h.6M1870.2 840.3h.6M1869.7 800.3h.6M1849.9 823.1h.6M1858.3 832.0h.6M1884.8 842.3h.6M1868.0 822.5h.6M1849.6 821.9h.6M1843.0 810.0h.6M1858.3 822.4h.6M1878.0 835.2h.6M1873.4 816.5h.6M1879.9 823.2h.6M1868.3 820.0h.6M1885.1 833.5h.6M1864.6 828.0h.6M1841.1 816.3h.6M1849.8 817.6h.6M1864.7 830.5h.6M1880.0 824.7h.6M1883.1 832.8h.6M1875.2 826.9h.6M1863.6 829.1h.6M1827.8 810.8h.6M1879.5 824.7h.6M1849.7 811.4h.6M1843.0 825.6h.6M1870.2 831.8h.6M1847.8 810.7h.6M1875.0 819.6h.6M1859.8 819.4h.6M1874.9 831.3h.6M1831.1 811.1h.6M1859.7 828.1h.6M1849.7 822.3h.6M1846.4 820.1h.6M1868.2 815.1h.6M1883.1 833.5h.6M1846.4 805.2h.6M1860.3 815.4h.6M1871.5 825.9h.6M1878.8 814.3h.6M1843.5 816.7h.6M1861.6 820.8h.6M1859.4 835.4h.6M1866.6 809.3h.6M1849.6 816.8h.6M1858.2 819.6h.6M1873.1 837.9h.6M1871.3 830.5h.6M1832.8 806.7h.6M1886.7 844.6h.6M1858.2 813.3h.6M1886.7 840.1h.6M1865.3 818.0h.6M1829.5 821.2h.6M1863.5 814.7h.6M1848.3 824.4h.6M1863.6 819.2h.6M1853.0 824.7h.6M1863.3 825.2h.6M1827.6 803.7h.6M1854.4 823.5h.6M1852.8 820.0h.6M1852.9 814.6h.6M1870.0 817.9h.6M1826.3 800.7h.6M1883.2 828.5h.6M1844.7 810.7h.6M1886.9 840.7h.6M1837.9 811.8h.6M1837.7 817.8h.6M1833.5 813.5h.6M1875.5 829.2h.6M1876.3 840.1h.6M1844.7 815.1h.6M1881.9 830.1h.6M1880.2 838.0h.6M1875.5 826.9h.6M1866.8 823.4h.6M1862.9 819.5h.6M1875.2 848.5h.6M1857.9 815.0h.6M1849.4 810.7h.6M1879.7 813.5h.6M1822.9 811.6h.6M1851.0 832.2h.6M1825.8 807.6h.6M1844.8 814.2h.6M1854.5 820.6h.6M1881.9 821.4h.6M1873.8 815.0h.6M1852.7 822.3h.6M1885.4 827.4h.6M1873.5 813.0h.6M1831.0 806.5h.6M1880.2 827.3h.6M1858.5 822.3h.6M1886.9 827.4h.6M1868.0 821.1h.6M1858.3 819.3h.6M1847.5 812.9h.6M1874.9 816.0h.6M1883.5 828.2h.6M1857.9 816.7h.6M1866.9 833.2h.6M1887.3 827.9h.6M1865.0 825.8h.6M1874.8 820.0h.6M1873.6 823.6h.6M1882.2 823.1h.6M1851.0 811.1h.6M1857.9 822.9h.6M1881.6 832.3h.6M1866.4 830.2h.6M1844.0 807.6h.6M1849.8 812.2h.6M1849.4 813.0h.6M1855.0 816.9h.6M1830.7 805.0h.6M1885.0 819.2h.6M1861.5 823.3h.6M1866.8 823.8h.6M1888.2 835.9h.6M1878.6 826.6h.6M1860.1 819.7h.6M1860.0 821.9h.6M1880.1 834.2h.6M1880.0 833.7h.6M1867.7 830.8h.6M1847.8 813.2h.6M1866.7 830.5h.6M1885.0 835.1h.6M1880.0 828.4h.6M1851.2 809.6h.6M1888.3 846.6h.6M1866.7 817.3h.6M1838.2 817.4h.6M1857.2 818.5h.6M1833.0 807.8h.6M1829.2 804.6h.6M1863.5 820.0h.6M1883.2 826.5h.6M1853.3 810.2h.6M1848.2 812.5h.6M1838.0 818.0h.6M1863.2 821.1h.6M1872.0 828.3h.6M1880.4 835.6h.6M1847.9 816.1h.6M1887.0 816.3h.6M1870.1 822.7h.6M1886.8 815.7h.6M1851.4 833.2h.6M1859.8 819.1h.6M1862.9 826.2h.6M1841.4 807.5h.6M1863.3 812.3h.6M1877.9 813.5h.6M1829.4 808.4h.6M1872.8 824.3h.6M1881.6 825.5h.6M1869.8 835.6h.6M1888.6 837.0h.6M1855.0 816.1h.6M1886.8 840.4h.6M1848.2 815.4h.6M1835.8 815.5h.6M1859.8 817.3h.6M1886.2 835.2h.6M1876.7 832.6h.6M1846.3 813.1h.6M1826.2 803.2h.6M1831.0 808.5h.6M1873.7 827.8h.6M1861.3 819.9h.6M1868.3 824.3h.6M1855.9 820.0h.6M1830.8 817.6h.6M1888.6 837.0h.6M1829.7 810.7h.6M1843.3 819.0h.6M1829.5 803.6h.6M1834.4 810.0h.6M1884.0 830.3h.6M1870.1 818.8h.6M1849.7 825.5h.6M1856.4 821.2h.6M1883.4 839.4h.6M1853.3 825.3h.6M1846.6 818.4h.6M1846.6 816.4h.6M1859.8 816.6h.6M1845.2 813.4h.6M1884.9 839.7h.6M1871.6 821.2h.6M1880.2 848.5h.6M1871.8 821.0h.6M1846.3 820.9h.6M1880.3 834.0h.6M1841.2 820.4h.6M1883.5 830.9h.6M1829.6 811.9h.6M1883.7 840.5h.6M1866.5 823.1h.6M1843.2 815.7h.6M1861.4 821.7h.6M1871.6 833.5h.6M1842.9 809.4h.6M1851.6 820.4h.6M1863.4 824.7h.6M1860.0 813.4h.6M1863.2 817.1h.6M1887.1 834.9h.6M1868.9 821.5h.6M1844.7 813.5h.6M1863.3 824.0h.6M1861.6 822.3h.6M1851.4 811.9h.6M1875.0 831.1h.6M1857.7 821.8h.6M1880.4 826.9h.6M1869.9 835.8h.6M1852.8 813.9h.6M1879.6 826.0h.6M1883.6 817.8h.6M1860.1 829.1h.6M1853.0 823.6h.6M1881.9 821.3h.6M1876.8 829.3h.6M1887.2 825.4h.6M1843.3 813.6h.6M1838.0 811.3h.6M1887.0 827.3h.6M1876.9 823.6h.6M1842.8 811.4h.6M1854.8 816.3h.6M1883.8 828.3h.6M1835.7 810.0h.6M1864.9 818.3h.6M1856.2 817.6h.6M1880.0 837.6h.6M1888.5 834.6h.6M1886.8 824.2h.6M1861.4 819.6h.6M1864.8 824.2h.6M1864.9 813.2h.6M1881.8 826.1h.6M1839.7 808.5h.6M1822.7 812.6h.6M1845.2 807.7h.6M1832.5 810.2h.6M1876.5 831.7h.6M1883.1 831.4h.6M1848.1 818.7h.6M1875.1 829.9h.6M1864.9 817.7h.6M1885.5 842.9h.6M1829.4 813.1h.6M1871.6 828.0h.6M1856.3 819.1h.6M1873.3 831.7h.6M1863.1 818.4h.6M1830.6 812.1h.6M1854.3 814.1h.6M1848.1 806.5h.6M1869.5 820.1h.6M1841.5 808.8h.6M1866.6 835.8h.6M1849.5 809.4h.6M1854.5 813.9h.6M1881.2 836.8h.6M1886.7 837.5h.6M1881.4 831.9h.6M1871.1 831.8h.6M1885.1 823.8h.6M1853.4 802.7h.6M1881.7 821.9h.6M1849.7 813.4h.6M1827.8 803.7h.6M1824.7 808.2h.6M1858.2 824.4h.6M1878.5 841.1h.6M1849.5 813.3h.6M1859.8 810.3h.6M1860.0 822.9h.6M1879.9 827.9h.6M1878.2 808.1h.6M1870.0 826.0h.6M1859.7 827.5h.6M1873.4 815.2h.6M1847.9 825.5h.6M1869.8 808.2h.6M1844.1 818.7h.6M1832.7 806.5h.6M1869.9 836.6h.6M1851.3 814.6h.6M1842.7 819.5h.6M1869.5 823.3h.6M1843.1 820.5h.6M1880.1 834.6h.6M1866.7 828.0h.6M1881.7 832.2h.6M1886.6 841.6h.6M1876.4 825.1h.6M1879.7 822.0h.6M1872.0 821.8h.6M1888.4 846.6h.6M1851.6 814.5h.6M1849.9 820.5h.6M1883.2 833.3h.6M1844.1 814.8h.6M1854.5 818.3h.6M1851.5 816.1h.6M1870.0 823.0h.6M1880.2 839.1h.6M1836.3 809.7h.6M1881.6 827.8h.6M1837.9 809.8h.6M1866.3 825.3h.6M1851.0 814.5h.6M1881.8 818.1h.6M1833.1 807.8h.6M1854.7 813.5h.6M1833.0 809.2h.6M1844.8 809.8h.6M1855.0 817.5h.6M1888.7 823.6h.6M1830.8 807.1h.6M1881.6 820.7h.6M1855.3 815.1h.6M1885.5 821.6h.6M1850.1 814.9h.6M1844.9 825.8h.6M1859.8 814.3h.6M1888.4 808.5h.6M1848.6 820.0h.6M1874.7 819.5h.6M1870.1 816.7h.6M1875.1 832.5h.6M1854.8 821.3h.6M1887.1 825.9h.6M1885.3 838.5h.6M1829.2 805.7h.6M1834.8 820.5h.6M1878.6 830.6h.6M1863.4 813.4h.6M1855.0 812.9h.6M1837.8 816.3h.6M1847.9 801.5h.6M1841.0 817.6h.6M1861.5 817.3h.6M1854.9 822.0h.6M1854.9 816.7h.6M1856.3 810.7h.6M1873.1 824.2h.6M1870.4 832.4h.6M1886.7 827.2h.6M1886.9 827.0h.6M1866.9 823.3h.6M1871.6 828.8h.6M1849.5 821.1h.6M1859.6 826.4h.6M1881.9 823.4h.6M1828.1 813.2h.6M1840.9 822.8h.6M1874.9 810.1h.6M1849.7 818.4h.6M1832.4 817.5h.6M1865.3 832.0h.6M1870.0 828.8h.6M1888.3 826.1h.6M1831.4 809.9h.6M1831.0 809.6h.6M1839.8 807.3h.6M1883.4 836.9h.6M1854.9 818.5h.6M1849.8 811.2h.6M1874.6 823.2h.6M1870.2 827.4h.6M1848.3 815.1h.6M1883.4 831.2h.6M1844.6 814.9h.6M1858.4 829.1h.6M1888.4 833.8h.6M1849.6 827.2h.6M1844.7 827.3h.6M1880.0 821.5h.6M1878.8 817.8h.6M1868.2 826.3h.6M1851.0 818.0h.6M1847.9 821.2h.6M1840.9 815.8h.6M1866.4 818.0h.6M1879.6 832.5h.6M1853.3 812.3h.6M1875.4 831.9h.6M1841.0 817.1h.6M1848.2 807.9h.6M1838.4 810.6h.6M1866.8 812.3h.6M1886.7 832.1h.6M1844.6 817.0h.6M1878.3 834.2h.6M1870.1 822.4h.6M1885.3 824.4h.6M1866.8 812.9h.6M1824.7 805.9h.6M1868.7 827.8h.6M1863.0 827.9h.6M1853.2 820.4h.6M1884.9 833.2h.6M1847.9 821.7h.6M1879.7 834.8h.6M1846.3 819.4h.6M1839.4 810.4h.6M1868.0 831.9h.6M1832.8 806.9h.6M1824.3 809.1h.6M1864.5 818.3h.6M1885.1 834.2h.6M1861.4 821.1h.6M1880.4 834.7h.6M1851.1 815.4h.6M1866.6 817.6h.6M1866.6 825.8h.6M1859.9 824.8h.6M1874.9 828.9h.6M1873.3 823.0h.6M1850.1 823.6h.6M1870.0 828.7h.6M1885.2 838.2h.6M1842.4 819.4h.6M1832.7 805.1h.6M1829.6 809.6h.6M1872.8 831.6h.6M1852.9 814.6h.6M1844.9 823.3h.6M1873.3 816.8h.6M1844.8 828.6h.6M1843.3 806.1h.6M1864.7 822.7h.6M1882.1 833.8h.6M1882.0 821.5h.6M1878.4 839.4h.6M1868.3 820.6h.6M1876.9 827.6h.6M1857.8 825.9h.6M1886.9 832.6h.6M1851.7 813.0h.6M1858.1 823.7h.6M1835.7 813.9h.6M1863.1 824.5h.6M1833.1 805.2h.6M1863.3 831.5h.6M1862.7 810.2h.6M1859.8 817.0h.6M1846.2 811.7h.6M1862.6 821.0h.6M1849.5 815.4h.6M1846.1 817.1h.6M1888.8 824.4h.6M1858.6 827.7h.6M1847.7 820.4h.6M1839.6 821.4h.6M1827.4 810.0h.6M1873.0 826.9h.6M1841.4 813.7h.6M1863.4 826.7h.6M1874.6 813.2h.6M1881.9 824.5h.6M1881.7 836.9h.6M1844.5 818.8h.6M1864.7 822.9h.6M1857.9 799.5h.6M1837.4 817.4h.6M1848.2 815.0h.6M1852.7 814.7h.6M1846.5 808.3h.6M1868.3 820.3h.6M1834.2 805.4h.6M1888.6 848.5h.6M1823.0 802.2h.6M1831.2 814.1h.6M1848.3 819.6h.6M1837.9 818.5h.6M1834.4 805.8h.6M1841.4 809.6h.6M1879.8 831.3h.6M1849.4 814.2h.6M1878.2 835.2h.6M1878.6 823.7h.6M1880.0 820.5h.6M1829.5 813.6h.6M1866.2 818.0h.6M1854.6 824.3h.6M1849.9 810.2h.6M1863.5 821.0h.6M1834.6 812.1h.6M1834.5 808.3h.6M1873.4 814.9h.6M1861.3 820.8h.6M1871.7 824.3h.6M1854.5 827.6h.6M1868.6 821.1h.6M1866.5 831.1h.6M1873.6 825.9h.6M1839.6 805.1h.6M1849.5 827.7h.6M1880.1 818.9h.6M1830.9 807.5h.6M1844.8 818.0h.6M1866.8 815.4h.6M1848.2 819.7h.6M1886.5 827.0h.6M1886.5 826.3h.6M1861.6 817.4h.6M1868.2 831.0h.6M1874.9 826.0h.6M1852.7 824.5h.6M1849.8 820.5h.6M1871.3 811.7h.6M1849.3 815.1h.6M1848.2 823.0h.6M1883.5 831.3h.6M1873.7 838.1h.6M1842.7 827.6h.6M1862.0 814.2h.6M1886.9 828.2h.6M1873.3 834.1h.6M1873.9 822.1h.6M1856.2 810.8h.6M1854.6 816.0h.6M1886.8 848.5h.6M1866.2 823.6h.6M1886.7 832.3h.6M1857.7 825.7h.6M1880.0 826.2h.6M1881.8 831.8h.6M1854.3 822.5h.6M1848.0 817.0h.6M1855.8 817.2h.6M1863.5 820.5h.6M1873.5 836.1h.6M1880.1 819.6h.6M1889.0 825.2h.6M1869.7 812.7h.6M1851.9 815.0h.6M1848.4 813.3h.6M1882.0 839.1h.6M1883.5 838.1h.6M1868.2 817.7h.6M1837.7 815.2h.6M1831.2 799.7h.6M1844.8 809.8h.6M1834.4 817.1h.6M1883.6 826.8h.6M1873.2 833.7h.6M1871.2 831.9h.6M1827.8 816.3h.6M1830.6 805.2h.6M1856.5 816.9h.6M1856.3 817.7h.6M1878.5 830.6h.6M1883.5 822.7h.6M1841.2 814.0h.6M1835.9 801.9h.6M1832.7 802.7h.6M1864.9 807.8h.6M1886.9 837.6h.6M1871.8 828.2h.6M1871.5 834.4h.6M1848.5 809.3h.6M1888.4 816.5h.6M1827.4 810.2h.6M1888.4 823.7h.6M1829.2 806.6h.6M1879.9 823.2h.6M1845.0 819.4h.6M1852.8 827.1h.6M1843.1 811.1h.6M1832.8 816.8h.6M1878.4 827.1h.6M1860.1 811.7h.6M1884.8 843.0h.6M1846.6 814.4h.6M1845.9 820.2h.6M1883.5 826.8h.6M1869.9 831.4h.6M1861.4 831.3h.6M1854.6 824.3h.6M1846.5 817.8h.6M1826.0 805.2h.6M1873.0 826.4h.6M1884.8 820.5h.6M1856.6 827.7h.6M1888.7 816.3h.6M1885.3 841.0h.6M1881.6 828.6h.6M1832.5 804.4h.6" stroke="#ff2020" stroke-width=".6" fill="none" opacity=".8"/><path d="M1821 804L1888.500 826.700" stroke="#0a0aff" stroke-width="1.800" stroke-linecap="round"/><circle cx="1810.300" cy="800.500" r="1" fill="#0a0aff"/><circle cx="1810.300" cy="840.500" r=".4" fill="#ff3030"/><rect x="1866.500" y="795.200" width="24.500" height="8.800" fill="#fff" stroke="#d0d0d0" stroke-width=".3"/><path d="M1873 797.300h12M1873 801h7" stroke="#999" stroke-width=".6"/><circle cx="1870" cy="801" r=".8" fill="#0a0aff"/><circle cx="1870" cy="797.300" r=".4" fill="#f33"/><path d="M1803 796.0h2M1803 804.7h2M1803 813.4h2M1803 822.1h2M1803 830.8h2M1803 839.5h2M1803 848.2h2M1809.0 853.500h2.500M1824.7 853.500h2.500M1840.4 853.500h2.500M1856.1 853.500h2.500M1871.8 853.500h2.500M1887.5 853.500h2.500M1843 857h11M1797.500 812v20" stroke="#777" stroke-width=".6" fill="none"/><polygon points="1803.300,895.500 1831.600,875.600 1831.600,913 1804,932.900" fill="#f8f8f8"/><polygon points="1831.600,875.600 1880.400,887 1878.200,922.200 1831.600,913" fill="#f1f1f1"/><polygon points="1804,932.900 1831.600,913 1878.200,922.200 1852.200,948.500" fill="#f4f4f4"/><path d="M1803.300 895.500L1831.600 875.600L1880.400 887M1831.600 875.600V913M1804 932.900L1831.600 913L1878.200 922.200M1810 890.800v37.500M1817 886v37.500M1824 881v37M1843 878.300v37M1855 881v37M1867 884v37M1803.600 908L1831.600 888L1879.700 899M1803.800 920.500L1831.600 900.500L1879 911M1816 936.800l27.500-21M1828 940.700l27-21M1840 944.600l26.500-22M1813 926.300l47 14.500M1822 919.800l47 12" fill="none" stroke="#c4c4c4" stroke-width=".45"/><defs><linearGradient id="ter" x1="0" y1="1" x2="1" y2="0"><stop offset="0" stop-color="#14588c"/><stop offset=".45" stop-color="#1f7f8c"/><stop offset=".62" stop-color="#3f9a6a"/><stop offset=".78" stop-color="#a9c465"/><stop offset=".9" stop-color="#d2b486"/><stop offset="1" stop-color="#e9d9c6"/></linearGradient></defs><polygon points="1809.4,924.5 1811.7,919.1 1817.8,914.6 1823.2,912.3 1827.0,912.7 1829.3,907.7 1833.9,902.6 1838.5,903.9 1841.5,908.5 1842.3,911.8 1846.1,910.7 1850.7,905.4 1854.5,899.3 1858.3,895.5 1864.4,895.9 1869.8,895.0 1873.3,892.0 1872.4,899.3 1870.5,906.9 1868.2,914.6 1864.4,920.7 1859.8,928.3 1854.5,934.4 1849.1,938.7 1843.8,939.3 1838.5,937.5 1833.9,938.2 1829.3,935.6 1823.2,932.1 1815.5,930.6 1811.0,928.3" fill="url(#ter)" stroke="#1f7f8c" stroke-width=".6" stroke-linejoin="round"/><path d="M1828.5 933.6L1832.3 936.7L1836.9 937.5M1830.8 915.3L1831.6 920.7L1834.6 924.5M1812.5 926.8L1817.8 929.1L1823.2 931.1M1843.8 938.2L1849.1 937.5" stroke="#0b2f9f" stroke-width="1.500" fill="none" opacity=".8" stroke-linecap="round" stroke-linejoin="round"/><path d="M1820.1 913.8L1824.7 916.1L1827.8 920.7M1835.4 905.4L1837.7 911.5L1838.5 919.1M1846.1 914.6L1849.1 922.2L1847.6 931.4" stroke="#2a94a0" stroke-width="1.200" fill="none" opacity=".7" stroke-linecap="round"/><path d="M1856.8 899.3L1861.4 900.8L1864.4 905.4M1865.9 897.0L1869.0 900.8" stroke="#cdbb80" stroke-width="1.200" fill="none" opacity=".8" stroke-linecap="round"/><path d="M1804 932.900L1852.200 948.500L1878.200 922.200L1880.400 887" fill="none" stroke="#222" stroke-width=".5"/><g font-size="4.400" fill="#222" font-family="DejaVu Sans,sans-serif" text-anchor="middle"><text x="1887" y="893.700">700</text><text x="1887" y="903.600">600</text><text x="1887" y="912.600">500</text><text x="1886" y="921.500">400</text><text x="1882.800" y="931">36.73</text><text x="1877" y="937">36.72</text><text x="1871" y="943.600">36.71</text><text x="1865" y="949.700">36.70</text><text x="1804" y="942.800">−84.41</text><text x="1815.500" y="947">−84.40</text><text x="1826.500" y="950.800">−84.39</text><text x="1837.700" y="954.600">−84.38</text></g></svg>
<svg style="left:8px;top:305px" width="94" height="41" viewBox="0 0 632 302" preserveAspectRatio="none" font-family="DejaVu Sans,sans-serif" font-size="12.500" fill="#1a1a1a"><rect width="632" height="302" fill="#fff"/><polygon points="30.2,210.7 118.1,136.9 117,30.3 25,97.9" fill="#f9f9f9" stroke="#e4e4e4" stroke-width="0.7"/>
<polygon points="118.1,136.9 259.6,178 264.5,67.9 117,30.3" fill="#f2f2f2" stroke="#e4e4e4" stroke-width="0.7"/>
<polygon points="30.2,210.7 179.9,259.4 259.6,178 118.1,136.9" fill="#f5f5f5" stroke="#e4e4e4" stroke-width="0.7"/>
<path d="M39.6 213.8L127.1 139.5L126.3 32.7M67.6 222.9L153.6 147.2L153.9 39.7M96.1 232.1L180.6 155.1L182 46.9M125.2 241.6L208.1 163.1L210.6 54.2M154.8 251.2L236 171.2L239.9 61.7M191 248L42.5 200.4L37.9 88.5M206.5 232.2L59.5 186.1L55.7 75.4M221.5 216.9L76 172.3L72.9 62.7M236 202.2L92 158.9L89.7 50.4M250 187.8L107.5 145.8L105.9 38.5M30.1 208.6L118.1 134.9L259.7 175.9M28.9 182.3L117.8 110L260.9 150.3M27.7 155.5L117.6 84.7L262 124.1M26.4 128.2L117.3 58.9L263.2 97.5M25.1 100.3L117 32.6L264.4 70.2" fill="none" stroke="#b9b9b9" stroke-width="0.95"/>
<path d="M30.2 210.7L179.9 259.4L259.6 178L264.5 67.9" fill="none" stroke="#1a1a1a" stroke-width="1.25" stroke-linejoin="round"/>
<path d="M41.9 211.8L38.1 215.1M69.8 220.9L66.1 224.2M98.3 230.1L94.6 233.5M127.3 239.5L123.7 242.9M157 249.1L153.4 252.6M187.3 246.8L193.5 248.8M202.8 231.1L209 233M217.8 215.8L223.9 217.7M232.4 201.1L238.4 202.9M246.4 186.8L252.4 188.5M256.2 174.9L262.1 176.6M257.3 149.3L263.3 151M258.4 123.2L264.4 124.8M259.5 96.5L265.6 98.1M260.7 69.3L266.9 70.9" fill="none" stroke="#1a1a1a" stroke-width="1.15"/>
<text x="29.5" y="245" text-anchor="middle">−1.0</text>
<text x="57.5" y="254.4" text-anchor="middle">−0.5</text>
<text x="86" y="263.9" text-anchor="middle">0.0</text>
<text x="115.1" y="273.6" text-anchor="middle">0.5</text>
<text x="144.8" y="283.5" text-anchor="middle">1.0</text>
<text x="208.3" y="276" text-anchor="middle">−1.0</text>
<text x="223.5" y="259.9" text-anchor="middle">−0.5</text>
<text x="238.2" y="244.4" text-anchor="middle">0.0</text>
<text x="252.5" y="229.3" text-anchor="middle">0.5</text>
<text x="266.3" y="214.7" text-anchor="middle">1.0</text>
<text x="284.5" y="182.4" text-anchor="middle">−1.0</text>
<text x="285.8" y="156.8" text-anchor="middle">−0.5</text>
<text x="287.2" y="130.8" text-anchor="middle">0.0</text>
<text x="288.6" y="104.2" text-anchor="middle">0.5</text>
<text x="290.1" y="77" text-anchor="middle">1.0</text>
<g stroke-width="0.35" stroke-linejoin="round">
<polygon points="144.6,99.4 144.9,91.9 163,94.1" fill="#3682ba" stroke="#3682ba"/>
<polygon points="127.9,99.6 144.9,91.9 144.6,99.4" fill="#4ea7b0" stroke="#4ea7b0"/>
<polygon points="129.8,122 115.5,123.6 129.1,114.5" fill="#b11747" stroke="#b11747"/>
<polygon points="129.1,114.5 143.8,121.9 129.8,122" fill="#be254a" stroke="#be254a"/>
<polygon points="144.6,99.4 144.3,106.9 128.5,107.1" fill="#eaf79e" stroke="#eaf79e"/>
<polygon points="129.1,114.5 128.5,107.1 144.3,106.9" fill="#fee28f" stroke="#fee28f"/>
<polygon points="129.1,114.5 144.3,106.9 144,114.4" fill="#fdbb6c" stroke="#fdbb6c"/>
<polygon points="128.5,107.1 127.9,99.6 144.6,99.4" fill="#bae3a1" stroke="#bae3a1"/>
<polygon points="144,114.4 143.8,121.9 129.1,114.5" fill="#e55749" stroke="#e55749"/>
<polygon points="127.9,99.6 127.2,92.1 144.9,91.9" fill="#4471b2" stroke="#4471b2"/>
<polygon points="144.6,99.4 161.4,101.3 144.3,106.9" fill="#c1e6a0" stroke="#c1e6a0"/>
<polygon points="163,94.1 161.4,101.3 144.6,99.4" fill="#5eb9a9" stroke="#5eb9a9"/>
<polygon points="115.5,123.6 114.4,116.3 129.1,114.5" fill="#dc484c" stroke="#dc484c"/>
<polygon points="113.3,109.1 128.5,107.1 129.1,114.5" fill="#fee28f" stroke="#fee28f"/>
<polygon points="158.3,115.8 144,114.4 144.3,106.9" fill="#fdc171" stroke="#fdc171"/>
<polygon points="161.4,101.3 159.9,108.6 144.3,106.9" fill="#ecf7a1" stroke="#ecf7a1"/>
<polygon points="143.8,121.9 144,114.4 158.3,115.8" fill="#ea5e47" stroke="#ea5e47"/>
<polygon points="129.1,114.5 114.4,116.3 113.3,109.1" fill="#fdb567" stroke="#fdb567"/>
<polygon points="112.3,101.8 127.9,99.6 128.5,107.1" fill="#b3e0a2" stroke="#b3e0a2"/>
<polygon points="144.3,106.9 159.9,108.6 158.3,115.8" fill="#fee797" stroke="#fee797"/>
<polygon points="115.5,123.6 101.8,126.8 114.4,116.3" fill="#a70b44" stroke="#a70b44"/>
<polygon points="111.2,94.5 127.2,92.1 127.9,99.6" fill="#4e63ac" stroke="#4e63ac"/>
<polygon points="128.5,107.1 113.3,109.1 112.3,101.8" fill="#e7f59a" stroke="#e7f59a"/>
<polygon points="158.3,115.8 156.8,123.1 143.8,121.9" fill="#d43d4f" stroke="#d43d4f"/>
<polygon points="163,94.1 177.4,105.3 161.4,101.3" fill="#66c2a5" stroke="#66c2a5"/>
<polygon points="161.4,101.3 177.4,105.3 159.9,108.6" fill="#caea9e" stroke="#caea9e"/>
<polygon points="112.3,101.8 111.2,94.5 127.9,99.6" fill="#3d95b8" stroke="#3d95b8"/>
<polygon points="180.5,98.6 177.4,105.3 163,94.1" fill="#459eb4" stroke="#459eb4"/>
<polygon points="114.4,116.3 101.8,126.8 100.7,119.8" fill="#d8434e" stroke="#d8434e"/>
<polygon points="99.7,112.8 113.3,109.1 114.4,116.3" fill="#fee18d" stroke="#fee18d"/>
<polygon points="159.9,108.6 171.2,118.8 158.3,115.8" fill="#fec877" stroke="#fec877"/>
<polygon points="159.9,108.6 177.4,105.3 174.3,112" fill="#eef8a4" stroke="#eef8a4"/>
<polygon points="171.2,118.8 156.8,123.1 158.3,115.8" fill="#f46d43" stroke="#f46d43"/>
<polygon points="114.4,116.3 100.7,119.8 99.7,112.8" fill="#fdb163" stroke="#fdb163"/>
<polygon points="113.3,109.1 98.7,105.8 112.3,101.8" fill="#aedea3" stroke="#aedea3"/>
<polygon points="174.3,112 171.2,118.8 159.9,108.6" fill="#feea9b" stroke="#feea9b"/>
<polygon points="98.7,105.8 111.2,94.5 112.3,101.8" fill="#3990ba" stroke="#3990ba"/>
<polygon points="99.7,112.8 98.7,105.8 113.3,109.1" fill="#e6f598" stroke="#e6f598"/>
<polygon points="168.1,125.5 156.8,123.1 171.2,118.8" fill="#e1504b" stroke="#e1504b"/>
<polygon points="180.5,98.6 196.2,105.4 177.4,105.3" fill="#5ab4ab" stroke="#5ab4ab"/>
<polygon points="88.9,124.9 100.7,119.8 101.8,126.8" fill="#d63f4f" stroke="#d63f4f"/>
<polygon points="89.5,131.5 88.9,124.9 101.8,126.8" fill="#9e0142" stroke="#9e0142"/>
<polygon points="174.3,112 177.4,105.3 186.8,117.1" fill="#eef8a4" stroke="#eef8a4"/>
<polygon points="98.7,105.8 97.6,98.8 111.2,94.5" fill="#5956a5" stroke="#5956a5"/>
<polygon points="186.8,117.1 171.2,118.8 174.3,112" fill="#feea9b" stroke="#feea9b"/>
<polygon points="99.7,112.8 100.7,119.8 88.4,118.2" fill="#fee08b" stroke="#fee08b"/>
<polygon points="177.4,105.3 196.2,105.4 191.5,111.2" fill="#8cd1a4" stroke="#8cd1a4"/>
<polygon points="186.8,117.1 177.4,105.3 191.5,111.2" fill="#d6ee9b" stroke="#d6ee9b"/>
<polygon points="171.2,118.8 177.4,128.9 168.1,125.5" fill="#ed6246" stroke="#ed6246"/>
<polygon points="99.7,112.8 88.4,118.2 98.7,105.8" fill="#e6f598" stroke="#e6f598"/>
<polygon points="88.4,118.2 100.7,119.8 88.9,124.9" fill="#fdaf62" stroke="#fdaf62"/>
<polygon points="182.1,123 171.2,118.8 186.8,117.1" fill="#fed27f" stroke="#fed27f"/>
<polygon points="182.1,123 177.4,128.9 171.2,118.8" fill="#f99153" stroke="#f99153"/>
<polygon points="79.5,137.7 88.9,124.9 89.5,131.5" fill="#9e0142" stroke="#9e0142"/>
<polygon points="98.7,105.8 87.3,104.7 97.6,98.8" fill="#5c51a3" stroke="#5c51a3"/>
<polygon points="98.7,105.8 88.4,118.2 87.9,111.5" fill="#acdda4" stroke="#acdda4"/>
<polygon points="191.5,111.2 196.2,105.4 208.9,114.1" fill="#79c9a5" stroke="#79c9a5"/>
<polygon points="191.5,111.2 202.8,118.8 186.8,117.1" fill="#e1f399" stroke="#e1f399"/>
<polygon points="87.9,111.5 87.3,104.7 98.7,105.8" fill="#3389bd" stroke="#3389bd"/>
<polygon points="88.9,124.9 79.8,131.3 88.4,118.2" fill="#fdad60" stroke="#fdad60"/>
<polygon points="190.4,128.2 182.1,123 186.8,117.1" fill="#fedc88" stroke="#fedc88"/>
<polygon points="79.5,137.7 79.8,131.3 88.9,124.9" fill="#d43d4f" stroke="#d43d4f"/>
<polygon points="177.4,128.9 182.1,123 190.4,128.2" fill="#fb9d59" stroke="#fb9d59"/>
<polygon points="208.9,114.1 202.8,118.8 191.5,111.2" fill="#a7dba4" stroke="#a7dba4"/>
<polygon points="202.8,118.8 196.6,123.5 186.8,117.1" fill="#f3faac" stroke="#f3faac"/>
<polygon points="186.8,117.1 196.6,123.5 190.4,128.2" fill="#fff0a6" stroke="#fff0a6"/>
<polygon points="88.4,118.2 80.4,118.3 87.9,111.5" fill="#aadca4" stroke="#aadca4"/>
<polygon points="88.4,118.2 79.8,131.3 80.1,124.8" fill="#fee08b" stroke="#fee08b"/>
<polygon points="190.4,128.2 184.3,132.9 177.4,128.9" fill="#f7844e" stroke="#f7844e"/>
<polygon points="87.9,111.5 80.4,118.3 87.3,104.7" fill="#3387bc" stroke="#3387bc"/>
<polygon points="80.1,124.8 80.4,118.3 88.4,118.2" fill="#e6f598" stroke="#e6f598"/>
<polygon points="79.8,131.3 79.5,137.7 74.1,138.7" fill="#d63f4f" stroke="#d63f4f"/>
<polygon points="208.9,114.1 210.3,127.7 202.8,118.8" fill="#b5e1a2" stroke="#b5e1a2"/>
<polygon points="202.8,118.8 210.3,127.7 196.6,123.5" fill="#eaf79e" stroke="#eaf79e"/>
<polygon points="74.1,138.7 79.5,137.7 72.8,145" fill="#a00343" stroke="#a00343"/>
<polygon points="196.6,123.5 195.7,134.1 190.4,128.2" fill="#fee593" stroke="#fee593"/>
<polygon points="87.3,104.7 80.4,118.3 80.7,111.7" fill="#5e4fa2" stroke="#5e4fa2"/>
<polygon points="195.7,134.1 184.3,132.9 190.4,128.2" fill="#fdb768" stroke="#fdb768"/>
<polygon points="80.1,124.8 79.8,131.3 75.4,132.3" fill="#fee08b" stroke="#fee08b"/>
<polygon points="75.4,132.3 80.4,118.3 80.1,124.8" fill="#e6f598" stroke="#e6f598"/>
<polygon points="217.6,124.5 210.3,127.7 208.9,114.1" fill="#a4daa4" stroke="#a4daa4"/>
<polygon points="79.8,131.3 74.1,138.7 75.4,132.3" fill="#fdaf62" stroke="#fdaf62"/>
<polygon points="203,130.9 195.7,134.1 196.6,123.5" fill="#fff3ac" stroke="#fff3ac"/>
<polygon points="196.6,123.5 210.3,127.7 203,130.9" fill="#f6fbb0" stroke="#f6fbb0"/>
<polygon points="188.4,137.3 184.3,132.9 195.7,134.1" fill="#fca85e" stroke="#fca85e"/>
<polygon points="80.4,118.3 78.1,119.4 80.7,111.7" fill="#5e4fa2" stroke="#5e4fa2"/>
<polygon points="76.8,125.9 80.4,118.3 75.4,132.3" fill="#acdda4" stroke="#acdda4"/>
<polygon points="74.1,138.7 72.8,145 70.1,153.1" fill="#a40844" stroke="#a40844"/>
<polygon points="76.8,125.9 78.1,119.4 80.4,118.3" fill="#3389bd" stroke="#3389bd"/>
<polygon points="188.4,137.3 195.7,134.1 197.6,140.3" fill="#fece7c" stroke="#fece7c"/>
<polygon points="197.6,140.3 195.7,134.1 203,130.9" fill="#feec9f" stroke="#feec9f"/>
<polygon points="75.4,132.3 74.1,138.7 72.4,146.7" fill="#fdb163" stroke="#fdb163"/>
<polygon points="203,130.9 210.3,127.7 213.5,137.3" fill="#f0f9a7" stroke="#f0f9a7"/>
<polygon points="213.5,137.3 210.3,127.7 217.6,124.5" fill="#d1ed9c" stroke="#d1ed9c"/>
<polygon points="70.1,153.1 72.4,146.7 74.1,138.7" fill="#d9444d" stroke="#d9444d"/>
<polygon points="197.6,140.3 189.6,141.8 188.4,137.3" fill="#fdc776" stroke="#fdc776"/>
<polygon points="203,130.9 205.5,138.8 197.6,140.3" fill="#fff7b2" stroke="#fff7b2"/>
<polygon points="75.4,132.3 77.1,133.8 76.8,125.9" fill="#aedea3" stroke="#aedea3"/>
<polygon points="213.5,137.3 205.5,138.8 203,130.9" fill="#f9fcb5" stroke="#f9fcb5"/>
<polygon points="217.6,124.5 221.5,135.8 213.5,137.3" fill="#c8e99e" stroke="#c8e99e"/>
<polygon points="75.4,132.3 72.4,146.7 74.8,140.3" fill="#fee18d" stroke="#fee18d"/>
<polygon points="74.8,140.3 77.1,133.8 75.4,132.3" fill="#e7f59a" stroke="#e7f59a"/>
<polygon points="79.5,127.3 78.1,119.4 76.8,125.9" fill="#5956a5" stroke="#5956a5"/>
<polygon points="197.6,140.3 187.9,146.2 189.6,141.8" fill="#fee08b" stroke="#fee08b"/>
<polygon points="76.8,125.9 77.1,133.8 79.5,127.3" fill="#3990ba" stroke="#3990ba"/>
<polygon points="75,154.9 72.4,146.7 70.1,153.1" fill="#dc484c" stroke="#dc484c"/>
<polygon points="197.6,140.3 205.5,138.8 204,146.8" fill="#fff7b2" stroke="#fff7b2"/>
<polygon points="204,146.8 205.5,138.8 213.5,137.3" fill="#f9fcb5" stroke="#f9fcb5"/>
<polygon points="74.8,140.3 72.4,146.7 75,154.9" fill="#fdb567" stroke="#fdb567"/>
<polygon points="197.6,140.3 195.9,146.5 187.9,146.2" fill="#feeb9d" stroke="#feeb9d"/>
<polygon points="70.1,153.1 71.9,161.5 75,154.9" fill="#b11747" stroke="#b11747"/>
<polygon points="221.5,135.8 220.1,147.5 213.5,137.3" fill="#e6f598" stroke="#e6f598"/>
<polygon points="204,146.8 195.9,146.5 197.6,140.3" fill="#fff3ac" stroke="#fff3ac"/>
<polygon points="81.4,141.6 77.1,133.8 74.8,140.3" fill="#b3e0a2" stroke="#b3e0a2"/>
<polygon points="213.5,137.3 212,147.1 204,146.8" fill="#f6fbb0" stroke="#f6fbb0"/>
<polygon points="75,154.9 78.2,148.2 74.8,140.3" fill="#fee28f" stroke="#fee28f"/>
<polygon points="81.4,141.6 79.5,127.3 77.1,133.8" fill="#3d95b8" stroke="#3d95b8"/>
<polygon points="220.1,147.5 212,147.1 213.5,137.3" fill="#eff9a6" stroke="#eff9a6"/>
<polygon points="74.8,140.3 78.2,148.2 81.4,141.6" fill="#e8f69b" stroke="#e8f69b"/>
<polygon points="183.5,150.1 187.9,146.2 195.9,146.5" fill="#fff3ac" stroke="#fff3ac"/>
<polygon points="84.5,134.9 79.5,127.3 81.4,141.6" fill="#4e63ac" stroke="#4e63ac"/>
<polygon points="75,154.9 71.9,161.5 78.5,169.5" fill="#be254a" stroke="#be254a"/>
<polygon points="204,146.8 198.3,154.4 195.9,146.5" fill="#fffbb8" stroke="#fffbb8"/>
<polygon points="195.9,146.5 190.9,152.2 183.5,150.1" fill="#fffbb8" stroke="#fffbb8"/>
<polygon points="212,147.1 198.3,154.4 204,146.8" fill="#fcfeba" stroke="#fcfeba"/>
<polygon points="75,154.9 85.7,155.6 78.2,148.2" fill="#fee28f" stroke="#fee28f"/>
<polygon points="198.3,154.4 190.9,152.2 195.9,146.5" fill="#fffbb8" stroke="#fffbb8"/>
<polygon points="78.2,148.2 85.7,155.6 81.4,141.6" fill="#e8f69b" stroke="#e8f69b"/>
<polygon points="75,154.9 78.5,169.5 82.1,162.6" fill="#e55749" stroke="#e55749"/>
<polygon points="212,147.1 220.1,147.5 213.2,158.7" fill="#f6fbb0" stroke="#f6fbb0"/>
<polygon points="82.1,162.6 85.7,155.6 75,154.9" fill="#fdbb6c" stroke="#fdbb6c"/>
<polygon points="81.4,141.6 92.8,141.7 84.5,134.9" fill="#4471b2" stroke="#4471b2"/>
<polygon points="212,147.1 205.7,156.5 198.3,154.4" fill="#fcfeba" stroke="#fcfeba"/>
<polygon points="182.5,157.1 190.9,152.2 183.5,150.1" fill="#fcfeba" stroke="#fcfeba"/>
<polygon points="81.4,141.6 85.7,155.6 89.2,148.7" fill="#bae3a1" stroke="#bae3a1"/>
<polygon points="89.2,148.7 92.8,141.7 81.4,141.6" fill="#4ea7b0" stroke="#4ea7b0"/>
<polygon points="213.2,158.7 205.7,156.5 212,147.1" fill="#fcfeba" stroke="#fcfeba"/>
<polygon points="183.5,150.1 176.4,153.3 182.5,157.1" fill="#f6fbb0" stroke="#f6fbb0"/>
<polygon points="198.3,154.4 190.9,152.2 182.5,157.1" fill="#fcfeba" stroke="#fcfeba"/>
<polygon points="82.1,162.6 78.5,169.5 93.3,169.2" fill="#ea5e47" stroke="#ea5e47"/>
<polygon points="93.3,169.2 85.7,155.6 82.1,162.6" fill="#fdc171" stroke="#fdc171"/>
<polygon points="188.7,161 198.3,154.4 182.5,157.1" fill="#fcfeba" stroke="#fcfeba"/>
<polygon points="89.2,148.7 85.7,155.6 96.7,162" fill="#eaf79e" stroke="#eaf79e"/>
<polygon points="167,155.6 182.5,157.1 176.4,153.3" fill="#e9f69d" stroke="#e9f69d"/>
<polygon points="194.9,164.8 205.7,156.5 198.3,154.4" fill="#fffbb8" stroke="#fffbb8"/>
<polygon points="89.2,148.7 100.2,154.8 92.8,141.7" fill="#56b0ad" stroke="#56b0ad"/>
<polygon points="78.5,169.5 89.9,176.5 93.3,169.2" fill="#d43d4f" stroke="#d43d4f"/>
<polygon points="213.2,158.7 205.7,156.5 194.9,164.8" fill="#fffbb8" stroke="#fffbb8"/>
<polygon points="194.9,164.8 198.3,154.4 188.7,161" fill="#fffbb8" stroke="#fffbb8"/>
<polygon points="93.3,169.2 96.7,162 85.7,155.6" fill="#fee797" stroke="#fee797"/>
<polygon points="96.7,162 100.2,154.8 89.2,148.7" fill="#c1e6a0" stroke="#c1e6a0"/>
<polygon points="100.2,154.8 103.6,147.5 92.8,141.7" fill="#3387bc" stroke="#3387bc"/>
<polygon points="171.4,160.9 182.5,157.1 167,155.6" fill="#e9f69d" stroke="#e9f69d"/>
<polygon points="188.7,161 182.5,157.1 175.9,166.1" fill="#fcfeba" stroke="#fcfeba"/>
<polygon points="175.9,166.1 182.5,157.1 171.4,160.9" fill="#f6fbb0" stroke="#f6fbb0"/>
<polygon points="194.9,164.8 201.2,168.7 213.2,158.7" fill="#fff3ac" stroke="#fff3ac"/>
<polygon points="100.2,154.8 113.5,159.4 103.6,147.5" fill="#66c2a5" stroke="#66c2a5"/>
<polygon points="96.7,162 113.5,159.4 100.2,154.8" fill="#caea9e" stroke="#caea9e"/>
<polygon points="171.4,160.9 167,155.6 158.1,163.1" fill="#dff299" stroke="#dff299"/>
<polygon points="158.1,163.1 167,155.6 155.7,156.8" fill="#c1e6a0" stroke="#c1e6a0"/>
<polygon points="175.9,166.1 194.9,164.8 188.7,161" fill="#fffbb8" stroke="#fffbb8"/>
<polygon points="110.8,166.8 96.7,162 93.3,169.2" fill="#fee797" stroke="#fee797"/>
<polygon points="103.6,147.5 113.5,159.4 116.1,152" fill="#459eb4" stroke="#459eb4"/>
<polygon points="93.3,169.2 89.9,176.5 105.4,181.7" fill="#de4c4b" stroke="#de4c4b"/>
<polygon points="110.8,166.8 113.5,159.4 96.7,162" fill="#eef8a4" stroke="#eef8a4"/>
<polygon points="142.9,156.7 158.1,163.1 155.7,156.8" fill="#a4daa4" stroke="#a4daa4"/>
<polygon points="158.1,163.1 175.9,166.1 171.4,160.9" fill="#f0f9a7" stroke="#f0f9a7"/>
<polygon points="113.5,159.4 129.5,155.1 116.1,152" fill="#5ab4ab" stroke="#5ab4ab"/>
<polygon points="93.3,169.2 108.1,174.3 110.8,166.8" fill="#fec877" stroke="#fec877"/>
<polygon points="180.4,171.4 194.9,164.8 175.9,166.1" fill="#fff3ac" stroke="#fff3ac"/>
<polygon points="142.9,156.7 129.5,155.1 128.2,162.4" fill="#79c9a5" stroke="#79c9a5"/>
<polygon points="105.4,181.7 108.1,174.3 93.3,169.2" fill="#f57748" stroke="#f57748"/>
<polygon points="128.2,162.4 129.5,155.1 113.5,159.4" fill="#8cd1a4" stroke="#8cd1a4"/>
<polygon points="143.4,163.7 158.1,163.1 142.9,156.7" fill="#b5e1a2" stroke="#b5e1a2"/>
<polygon points="128.2,162.4 143.4,163.7 142.9,156.7" fill="#a7dba4" stroke="#a7dba4"/>
<polygon points="160.6,169.4 175.9,166.1 158.1,163.1" fill="#f6fbb0" stroke="#f6fbb0"/>
<polygon points="201.2,168.7 194.9,164.8 184.9,176.7" fill="#fee491" stroke="#fee491"/>
<polygon points="126.8,169.8 113.5,159.4 110.8,166.8" fill="#eef8a4" stroke="#eef8a4"/>
<polygon points="128.2,162.4 113.5,159.4 126.8,169.8" fill="#d6ee9b" stroke="#d6ee9b"/>
<polygon points="110.8,166.8 108.1,174.3 126.8,169.8" fill="#feea9b" stroke="#feea9b"/>
<polygon points="184.9,176.7 194.9,164.8 180.4,171.4" fill="#fee491" stroke="#fee491"/>
<polygon points="143.8,170.7 158.1,163.1 143.4,163.7" fill="#eaf79e" stroke="#eaf79e"/>
<polygon points="126.8,169.8 143.4,163.7 128.2,162.4" fill="#e1f399" stroke="#e1f399"/>
<polygon points="160.6,169.4 158.1,163.1 143.8,170.7" fill="#f6fbb0" stroke="#f6fbb0"/>
<polygon points="175.9,166.1 163,175.8 180.4,171.4" fill="#feec9f" stroke="#feec9f"/>
<polygon points="160.6,169.4 163,175.8 175.9,166.1" fill="#fff3ac" stroke="#fff3ac"/>
<polygon points="126.8,169.8 143.8,170.7 143.4,163.7" fill="#f3faac" stroke="#f3faac"/>
<polygon points="126.8,169.8 108.1,174.3 125.5,177.2" fill="#fed27f" stroke="#fed27f"/>
<polygon points="105.4,181.7 124.1,184.7 108.1,174.3" fill="#ed6246" stroke="#ed6246"/>
<polygon points="143.8,170.7 163,175.8 160.6,169.4" fill="#fff3ac" stroke="#fff3ac"/>
<polygon points="108.1,174.3 124.1,184.7 125.5,177.2" fill="#f99153" stroke="#f99153"/>
<polygon points="163,175.8 184.9,176.7 180.4,171.4" fill="#feda86" stroke="#feda86"/>
<polygon points="144.3,177.8 143.8,170.7 126.8,169.8" fill="#fff0a6" stroke="#fff0a6"/>
<polygon points="125.5,177.2 144.3,177.8 126.8,169.8" fill="#fedc88" stroke="#fedc88"/>
<polygon points="144.3,177.8 163,175.8 143.8,170.7" fill="#fee593" stroke="#fee593"/>
<polygon points="165.5,182.2 184.9,176.7 163,175.8" fill="#fdc171" stroke="#fdc171"/>
<polygon points="144.7,184.9 144.3,177.8 125.5,177.2" fill="#fcaa5f" stroke="#fcaa5f"/>
<polygon points="125.5,177.2 124.1,184.7 144.7,184.9" fill="#f67f4b" stroke="#f67f4b"/>
<polygon points="144.7,184.9 163,175.8 144.3,177.8" fill="#fdb768" stroke="#fdb768"/>
<polygon points="165.5,182.2 163,175.8 144.7,184.9" fill="#fca85e" stroke="#fca85e"/>
</g>
<polygon points="351.7,210.7 439.6,136.9 438.5,30.3 346.5,97.9" fill="#f9f9f9" stroke="#e4e4e4" stroke-width="0.7"/>
<polygon points="439.6,136.9 581.1,178 586,67.9 438.5,30.3" fill="#f2f2f2" stroke="#e4e4e4" stroke-width="0.7"/>
<polygon points="351.7,210.7 501.4,259.4 581.1,178 439.6,136.9" fill="#f5f5f5" stroke="#e4e4e4" stroke-width="0.7"/>
<path d="M357.3 212.5L444.9 138.5L443.9 31.7M390.6 223.3L476.5 147.6L476.8 40.1M424.6 234.4L508.7 157L510.4 48.7M459.5 245.8L541.7 166.6L544.8 57.4M495.3 257.4L575.4 176.4L580 66.4M504.7 255.9L355.4 207.6L350.4 95.1M524.2 236L376.9 189.6L372.9 78.5M543 216.9L397.5 172.3L394.4 62.7M561 198.6L417.3 155.6L415.2 47.4M578.3 181L436.5 139.6L435.2 32.8M350.4 183.2L439.4 110.8L582.3 151.1M349.2 155.5L439.1 84.7L583.5 124.1M347.9 127.3L438.8 58L584.7 96.6" fill="none" stroke="#b9b9b9" stroke-width="0.95"/>
<path d="M351.7 210.7L501.4 259.4L581.1 178L586 67.9" fill="none" stroke="#1a1a1a" stroke-width="1.25" stroke-linejoin="round"/>
<path d="M359.5 210.6L355.7 213.8M392.8 221.4L389.1 224.7M426.8 232.4L423.2 235.8M461.7 243.7L458.1 247.1M497.3 255.3L493.9 258.8M501 254.7L507.3 256.7M520.5 234.9L526.7 236.8M539.3 215.8L545.4 217.7M557.4 197.5L563.4 199.3M574.7 179.9L580.7 181.6M578.7 150.1L584.7 151.8M579.9 123.2L585.9 124.8M581.1 95.6L587.2 97.2" fill="none" stroke="#1a1a1a" stroke-width="1.15"/>
<text x="347.1" y="243.7" text-anchor="middle">−1.0</text>
<text x="380.4" y="254.9" text-anchor="middle">−0.5</text>
<text x="414.6" y="266.2" text-anchor="middle">0.0</text>
<text x="449.5" y="277.9" text-anchor="middle">0.5</text>
<text x="485.3" y="289.8" text-anchor="middle">1.0</text>
<text x="522.2" y="284.1" text-anchor="middle">−1.0</text>
<text x="541.3" y="263.8" text-anchor="middle">−0.5</text>
<text x="559.7" y="244.4" text-anchor="middle">0.0</text>
<text x="577.4" y="225.7" text-anchor="middle">0.5</text>
<text x="594.4" y="207.7" text-anchor="middle">1.0</text>
<text x="607.3" y="157.7" text-anchor="middle">−0.5</text>
<text x="608.7" y="130.8" text-anchor="middle">0.0</text>
<text x="610.2" y="103.3" text-anchor="middle">0.5</text>
<g stroke-width="0.35" stroke-linejoin="round">
<polygon points="423.1,153.5 422,127.3 405.5,152.4" fill="#4026aa" stroke="#4026aa"/>
<polygon points="513.8,153.5 531.4,152.4 514.9,127.3" fill="#4026aa" stroke="#4026aa"/>
<polygon points="422,127.3 423.1,153.5 438.7,113.8" fill="#782e9b" stroke="#782e9b"/>
<polygon points="514.9,127.3 498.2,113.8 513.8,153.5" fill="#782e9b" stroke="#782e9b"/>
<polygon points="443.6,89.9 422,127.3 438.7,113.8" fill="#ff4126" stroke="#ff4126"/>
<polygon points="514.9,127.3 493.3,89.9 498.2,113.8" fill="#fd4028" stroke="#fd4028"/>
<polygon points="438.8,144 423.1,153.5 428.6,172.2" fill="#292684" stroke="#292684"/>
<polygon points="508.3,172.2 513.8,153.5 498.1,144" fill="#292684" stroke="#292684"/>
<polygon points="438.8,144 438.7,113.8 423.1,153.5" fill="#6a2ba7" stroke="#6a2ba7"/>
<polygon points="513.8,153.5 498.2,113.8 498.1,144" fill="#6a2ba7" stroke="#6a2ba7"/>
<polygon points="405.5,152.4 412.3,162.6 423.1,153.5" fill="#2b2688" stroke="#2b2688"/>
<polygon points="513.8,153.5 524.6,162.6 531.4,152.4" fill="#2b2688" stroke="#2b2688"/>
<polygon points="423.1,153.5 412.3,162.6 428.6,172.2" fill="#1d1d60" stroke="#1d1d60"/>
<polygon points="524.6,162.6 513.8,153.5 508.3,172.2" fill="#1d1d60" stroke="#1d1d60"/>
<polygon points="498.1,144 493.5,171.4 508.3,172.2" fill="#1f1f68" stroke="#1f1f68"/>
<polygon points="443.4,171.4 438.8,144 428.6,172.2" fill="#1f1f68" stroke="#1f1f68"/>
<polygon points="478.9,76.6 493.3,89.9 468.5,72" fill="#e6cc3c" stroke="#e6cc3c"/>
<polygon points="458,76.6 468.5,72 443.6,89.9" fill="#e6cc3c" stroke="#e6cc3c"/>
<polygon points="498.2,113.8 493.3,89.9 478.9,76.6" fill="#e69b0b" stroke="#e69b0b"/>
<polygon points="443.6,89.9 438.7,113.8 458,76.6" fill="#e69b0b" stroke="#e69b0b"/>
<polygon points="428.6,172.2 437.6,176.5 443.4,171.4" fill="#08081c" stroke="#08081c"/>
<polygon points="499.3,176.5 508.3,172.2 493.5,171.4" fill="#08081c" stroke="#08081c"/>
<polygon points="437.6,176.5 451.8,186.8 443.4,171.4" fill="#000000" stroke="#000000"/>
<polygon points="493.5,171.4 485.1,186.8 499.3,176.5" fill="#000000" stroke="#000000"/>
<polygon points="452.5,95.2 438.7,113.8 438.8,144" fill="#ff4126" stroke="#ff4126"/>
<polygon points="498.1,144 498.2,113.8 484.4,95.2" fill="#fd4028" stroke="#fd4028"/>
<polygon points="451.9,125.2 438.8,144 443.4,171.4" fill="#5428b9" stroke="#5428b9"/>
<polygon points="485,125.2 493.5,171.4 498.1,144" fill="#5428b9" stroke="#5428b9"/>
<polygon points="443.4,171.4 451.8,186.8 456,158.4" fill="#12123c" stroke="#12123c"/>
<polygon points="480.9,158.4 485.1,186.8 493.5,171.4" fill="#12123c" stroke="#12123c"/>
<polygon points="478.9,76.6 468.5,72 458,76.6" fill="#e6e172" stroke="#e6e172"/>
<polygon points="405.5,152.4 395.5,149 412.3,162.6" fill="#4026aa" stroke="#4026aa"/>
<polygon points="541.4,149 531.4,152.4 524.6,162.6" fill="#4026aa" stroke="#4026aa"/>
<polygon points="428.6,172.2 412.3,162.6 422.4,158" fill="#292684" stroke="#292684"/>
<polygon points="514.6,158 524.6,162.6 508.3,172.2" fill="#292684" stroke="#292684"/>
<polygon points="458,76.6 438.7,113.8 452.5,95.2" fill="#e6a710" stroke="#e6a710"/>
<polygon points="484.4,95.2 498.2,113.8 478.9,76.6" fill="#e6a710" stroke="#e6a710"/>
<polygon points="422.4,158 437.6,176.5 428.6,172.2" fill="#1f1f68" stroke="#1f1f68"/>
<polygon points="514.6,158 508.3,172.2 499.3,176.5" fill="#1f1f68" stroke="#1f1f68"/>
<polygon points="443.4,171.4 456,158.4 451.9,125.2" fill="#4d26bf" stroke="#4d26bf"/>
<polygon points="493.5,171.4 485,125.2 480.9,158.4" fill="#4c26be" stroke="#4c26be"/>
<polygon points="438.8,144 451.9,125.2 452.5,95.2" fill="#ff4126" stroke="#ff4126"/>
<polygon points="498.1,144 484.4,95.2 485,125.2" fill="#fd4028" stroke="#fd4028"/>
<polygon points="451.8,186.8 437.6,176.5 449.2,164.3" fill="#12123c" stroke="#12123c"/>
<polygon points="485.1,186.8 487.7,164.3 499.3,176.5" fill="#12123c" stroke="#12123c"/>
<polygon points="458,76.6 468.5,71 478.9,76.6" fill="#ecec9f" stroke="#ecec9f"/>
<polygon points="452.5,95.2 468.5,71 458,76.6" fill="#e6e379" stroke="#e6e379"/>
<polygon points="478.9,76.6 468.5,71 484.4,95.2" fill="#e6e379" stroke="#e6e379"/>
<polygon points="407.2,139.6 412.3,162.6 395.5,149" fill="#782e9b" stroke="#782e9b"/>
<polygon points="524.6,162.6 529.7,139.6 541.4,149" fill="#782e9b" stroke="#782e9b"/>
<polygon points="514.6,158 529.7,139.6 524.6,162.6" fill="#6a2ba7" stroke="#6a2ba7"/>
<polygon points="412.3,162.6 407.2,139.6 422.4,158" fill="#6a2ba7" stroke="#6a2ba7"/>
<polygon points="434.9,139.6 437.6,176.5 422.4,158" fill="#5428b9" stroke="#5428b9"/>
<polygon points="499.3,176.5 502.1,139.6 514.6,158" fill="#5428b9" stroke="#5428b9"/>
<polygon points="451.9,125.2 456,158.4 461.7,103.6" fill="#ff4126" stroke="#ff4126"/>
<polygon points="480.9,158.4 485,125.2 475.2,103.6" fill="#fd4028" stroke="#fd4028"/>
<polygon points="452.5,95.2 451.9,125.2 462.6,79.6" fill="#e6b917" stroke="#e6b917"/>
<polygon points="485,125.2 484.4,95.2 474.3,79.6" fill="#e6b917" stroke="#e6b917"/>
<polygon points="437.6,176.5 434.9,139.6 449.2,164.3" fill="#4c26be" stroke="#4c26be"/>
<polygon points="499.3,176.5 487.7,164.3 502.1,139.6" fill="#4d26bf" stroke="#4d26bf"/>
<polygon points="462.6,79.6 468.5,71 452.5,95.2" fill="#eaea97" stroke="#eaea97"/>
<polygon points="468.5,71 474.3,79.6 484.4,95.2" fill="#eaea97" stroke="#eaea97"/>
<polygon points="461.7,103.6 462.6,79.6 451.9,125.2" fill="#e6c01c" stroke="#e6c01c"/>
<polygon points="474.3,79.6 475.2,103.6 485,125.2" fill="#e6bf19" stroke="#e6bf19"/>
<polygon points="468.5,71 462.6,79.6 474.3,79.6" fill="#f9f9e3" stroke="#f9f9e3"/>
<polygon points="468.5,202.3 474.3,199.8 475.2,175.6" fill="#12123c" stroke="#12123c"/>
<polygon points="461.7,175.6 462.6,199.8 468.5,202.3" fill="#12123c" stroke="#12123c"/>
<polygon points="468.5,202.3 462.6,199.8 474.3,199.8" fill="#000000" stroke="#000000"/>
<polygon points="488.2,114.2 502.1,139.6 487.7,164.3" fill="#ff4126" stroke="#ff4126"/>
<polygon points="449.2,164.3 434.9,139.6 448.7,114.2" fill="#ff4126" stroke="#ff4126"/>
<polygon points="421.1,120.7 434.9,139.6 422.4,158" fill="#ff4126" stroke="#ff4126"/>
<polygon points="422.4,158 407.2,139.6 421.1,120.7" fill="#ff4126" stroke="#ff4126"/>
<polygon points="514.6,158 502.1,139.6 515.8,120.7" fill="#ff4126" stroke="#ff4126"/>
<polygon points="515.8,120.7 529.7,139.6 514.6,158" fill="#ff4126" stroke="#ff4126"/>
<polygon points="395.5,149 393.5,129.9 407.2,139.6" fill="#ff4126" stroke="#ff4126"/>
<polygon points="529.7,139.6 543.5,129.9 541.4,149" fill="#ff4126" stroke="#ff4126"/>
<polygon points="474.3,79.6 462.6,79.6 468.5,75.6" fill="#ffffff" stroke="#ffffff"/>
<polygon points="468.5,75.6 462.6,79.6 461.7,103.6" fill="#f3f3c3" stroke="#f3f3c3"/>
<polygon points="475.2,103.6 474.3,79.6 468.5,75.6" fill="#f3f3c3" stroke="#f3f3c3"/>
<polygon points="474.3,199.8 462.6,199.8 468.5,209.5" fill="#08081c" stroke="#08081c"/>
<polygon points="451.4,154.4 462.6,199.8 461.7,175.6" fill="#4d26bf" stroke="#4d26bf"/>
<polygon points="475.2,175.6 474.3,199.8 485.6,154.4" fill="#4c26be" stroke="#4c26be"/>
<polygon points="468.5,209.5 462.6,199.8 452,185.4" fill="#1f1f68" stroke="#1f1f68"/>
<polygon points="468.5,209.5 485,185.4 474.3,199.8" fill="#1f1f68" stroke="#1f1f68"/>
<polygon points="434.9,139.6 436.1,100.9 448.7,114.2" fill="#e6bf19" stroke="#e6bf19"/>
<polygon points="500.8,100.9 502.1,139.6 488.2,114.2" fill="#e6bf19" stroke="#e6bf19"/>
<polygon points="452,185.4 462.6,199.8 451.4,154.4" fill="#5428b9" stroke="#5428b9"/>
<polygon points="474.3,199.8 485,185.4 485.6,154.4" fill="#5428b9" stroke="#5428b9"/>
<polygon points="485.6,154.4 481.4,120 475.2,175.6" fill="#fd4028" stroke="#fd4028"/>
<polygon points="451.4,154.4 461.7,175.6 455.5,120" fill="#ff4126" stroke="#ff4126"/>
<polygon points="436.1,100.9 434.9,139.6 421.1,120.7" fill="#e6b917" stroke="#e6b917"/>
<polygon points="500.8,100.9 515.8,120.7 502.1,139.6" fill="#e6b917" stroke="#e6b917"/>
<polygon points="421.1,120.7 407.2,139.6 409.4,115.3" fill="#e6a710" stroke="#e6a710"/>
<polygon points="529.7,139.6 515.8,120.7 527.5,115.3" fill="#e6a710" stroke="#e6a710"/>
<polygon points="409.4,115.3 407.2,139.6 393.5,129.9" fill="#e69b0b" stroke="#e69b0b"/>
<polygon points="543.5,129.9 529.7,139.6 527.5,115.3" fill="#e69b0b" stroke="#e69b0b"/>
<polygon points="468.5,209.5 452,185.4 457.6,205.3" fill="#292684" stroke="#292684"/>
<polygon points="479.3,205.3 485,185.4 468.5,209.5" fill="#292684" stroke="#292684"/>
<polygon points="457.6,205.3 479.3,205.3 468.5,209.5" fill="#1d1d60" stroke="#1d1d60"/>
<polygon points="448.7,114.2 436.1,100.9 450.9,89.7" fill="#f3f3c3" stroke="#f3f3c3"/>
<polygon points="488.2,114.2 486,89.7 500.8,100.9" fill="#f3f3c3" stroke="#f3f3c3"/>
<polygon points="485,185.4 499.9,134.8 485.6,154.4" fill="#fd4028" stroke="#fd4028"/>
<polygon points="451.4,154.4 437,134.8 452,185.4" fill="#ff4126" stroke="#ff4126"/>
<polygon points="485.6,154.4 495,105.8 481.4,120" fill="#e6bf19" stroke="#e6bf19"/>
<polygon points="455.5,120 441.9,105.8 451.4,154.4" fill="#e6c01c" stroke="#e6c01c"/>
<polygon points="421.1,120.7 426,104.8 436.1,100.9" fill="#eaea97" stroke="#eaea97"/>
<polygon points="500.8,100.9 510.9,104.8 515.8,120.7" fill="#eaea97" stroke="#eaea97"/>
<polygon points="500.1,166.9 485,185.4 479.3,205.3" fill="#6a2ba7" stroke="#6a2ba7"/>
<polygon points="457.6,205.3 452,185.4 436.9,166.9" fill="#6a2ba7" stroke="#6a2ba7"/>
<polygon points="409.4,115.3 426,104.8 421.1,120.7" fill="#e6e379" stroke="#e6e379"/>
<polygon points="515.8,120.7 510.9,104.8 527.5,115.3" fill="#e6e379" stroke="#e6e379"/>
<polygon points="409.4,115.3 393.5,129.9 401.1,125.8" fill="#e6cc3c" stroke="#e6cc3c"/>
<polygon points="535.8,125.8 543.5,129.9 527.5,115.3" fill="#e6cc3c" stroke="#e6cc3c"/>
<polygon points="468.5,211.4 479.3,205.3 457.6,205.3" fill="#2b2688" stroke="#2b2688"/>
<polygon points="481.4,120 495,105.8 486,89.7" fill="#f3f3c3" stroke="#f3f3c3"/>
<polygon points="450.9,89.7 441.9,105.8 455.5,120" fill="#f3f3c3" stroke="#f3f3c3"/>
<polygon points="485.6,154.4 499.9,134.8 495,105.8" fill="#e6b917" stroke="#e6b917"/>
<polygon points="441.9,105.8 437,134.8 451.4,154.4" fill="#e6b917" stroke="#e6b917"/>
<polygon points="500.1,166.9 499.9,134.8 485,185.4" fill="#fd4028" stroke="#fd4028"/>
<polygon points="452,185.4 437,134.8 436.9,166.9" fill="#ff4126" stroke="#ff4126"/>
<polygon points="450.9,89.7 436.1,100.9 441.9,105.8" fill="#ffffff" stroke="#ffffff"/>
<polygon points="486,89.7 495,105.8 500.8,100.9" fill="#ffffff" stroke="#ffffff"/>
<polygon points="441.9,105.8 436.1,100.9 426,104.8" fill="#f9f9e3" stroke="#f9f9e3"/>
<polygon points="495,105.8 510.9,104.8 500.8,100.9" fill="#f9f9e3" stroke="#f9f9e3"/>
<polygon points="495.1,192.7 500.1,166.9 479.3,205.3" fill="#782e9b" stroke="#782e9b"/>
<polygon points="457.6,205.3 436.9,166.9 441.8,192.7" fill="#782e9b" stroke="#782e9b"/>
<polygon points="441.8,192.7 468.5,211.4 457.6,205.3" fill="#4026aa" stroke="#4026aa"/>
<polygon points="479.3,205.3 468.5,211.4 495.1,192.7" fill="#4026aa" stroke="#4026aa"/>
<polygon points="426,104.8 437,134.8 441.9,105.8" fill="#eaea97" stroke="#eaea97"/>
<polygon points="510.9,104.8 495,105.8 499.9,134.8" fill="#eaea97" stroke="#eaea97"/>
<polygon points="419.8,124.6 426,104.8 409.4,115.3" fill="#ecec9f" stroke="#ecec9f"/>
<polygon points="527.5,115.3 510.9,104.8 517.2,124.6" fill="#ecec9f" stroke="#ecec9f"/>
<polygon points="401.1,125.8 419.8,124.6 409.4,115.3" fill="#e6e172" stroke="#e6e172"/>
<polygon points="527.5,115.3 517.2,124.6 535.8,125.8" fill="#e6e172" stroke="#e6e172"/>
<polygon points="499.9,134.8 500.1,166.9 517.2,124.6" fill="#e6a710" stroke="#e6a710"/>
<polygon points="419.8,124.6 436.9,166.9 437,134.8" fill="#e6a710" stroke="#e6a710"/>
<polygon points="437,134.8 426,104.8 419.8,124.6" fill="#e6e379" stroke="#e6e379"/>
<polygon points="510.9,104.8 499.9,134.8 517.2,124.6" fill="#e6e379" stroke="#e6e379"/>
<polygon points="495.1,192.7 518.7,152.8 500.1,166.9" fill="#fd4028" stroke="#fd4028"/>
<polygon points="436.9,166.9 418.2,152.8 441.8,192.7" fill="#ff4126" stroke="#ff4126"/>
<polygon points="500.1,166.9 518.7,152.8 517.2,124.6" fill="#e69b0b" stroke="#e69b0b"/>
<polygon points="419.8,124.6 418.2,152.8 436.9,166.9" fill="#e69b0b" stroke="#e69b0b"/>
<polygon points="418.2,152.8 419.8,124.6 401.1,125.8" fill="#e6cc3c" stroke="#e6cc3c"/>
<polygon points="535.8,125.8 517.2,124.6 518.7,152.8" fill="#e6cc3c" stroke="#e6cc3c"/>
</g></svg>
<div class="a" style="left:5px;top:302px;width:100px;height:47px;box-sizing:border-box;border:3px solid #73c7ff;border-radius:4px"></div>
</div>
<svg style="left:0px;top:0px;" width="1" height="1" viewBox="0 0 1 1"><path d="M1906 670.500l5.200 5.200h-10.400z" fill="#c0c4c8"/><path d="M1906 1007.300l5.200-5.200h-10.400z" fill="#c0c4c8"/></svg>
<div class="a" style="left:1900px;top:680px;width:12px;height:318px;border:1px solid #b4b8bc;border-radius:5px;box-sizing:border-box;background:#fafafa"></div>
<div class="a" style="left:1901.500px;top:807px;width:9.500px;height:190px;border-radius:4.500px;background:#acb1b6"></div>
<div class="a" style="left:1412px;top:1023px;width:48px;height:25px;background:#259ae9;border-radius:4px 0 0 4px"></div>
<div class="t" style="left:1421.80px;top:1027.5px;letter-spacing:-0.360px;color:#fafafa">Plots</div>
<div class="a" style="left:1460px;top:1023px;width:114px;height:25px;background:#c0c4c8;border-radius:0"></div>
<div class="t" style="left:1470.30px;top:1027.5px;letter-spacing:-0.365px;color:#19232d">IPython Console</div>
<div class="a" style="left:1574px;top:1023px;width:64px;height:25px;background:#c0c4c8;border-radius:0 4px 4px 0"></div>
<div class="t" style="left:1585.30px;top:1027.5px;letter-spacing:-0.045px;color:#19232d">History</div>
<div class="a" style="left:1573px;top:1023px;width:1px;height:25px;background:#7a8c9f;"></div>
<!-- status -->
<svg style="left:0px;top:0px;" width="1" height="1" viewBox="0 0 1 1"><path d="M1033.500 1063v9.500h11" fill="none" stroke="#3a4254" stroke-width="1.400"/><path d="M1037.200 1067.500v4M1040 1065v6.500M1042.800 1068.500v3" stroke="#3a4254" stroke-width="1.600" fill="none"/></svg>
<div class="t" style="left:1053.70px;top:1060px;letter-spacing:0.025px;">Inline</div>
<div class="t" style="left:1101.80px;top:1060px;letter-spacing:-0.434px;">conda: spyder-dev (Python 3.9.19)</div>
<svg style="left:0px;top:0px;" width="1" height="1" viewBox="0 0 1 1"><path d="M1311 1064.200l-2.300 2.300 2.300 2.300M1314.500 1064.200l2.300 2.300" fill="none" stroke="#3a4254" stroke-width="1.200"/><path d="M1311.800 1070.800l2.300 2.500 4.700-5" fill="none" stroke="#3a4254" stroke-width="1.200"/></svg>
<div class="t" style="left:1328.20px;top:1060px;letter-spacing:-0.362px;">Completions: conda(spyder-dev)</div>
<svg style="left:0px;top:0px;" width="1" height="1" viewBox="0 0 1 1"><path d="M1526.300 1068.500l3.200 3.200 7-7" fill="none" stroke="#3a4254" stroke-width="1.300"/></svg>
<div class="t" style="left:1546.60px;top:1060px;letter-spacing:-0.789px;">LSP: Python</div>
<svg style="left:0px;top:0px;" width="1" height="1" viewBox="0 0 1 1"><circle cx="1630.300" cy="1063.800" r="1.500" fill="#3a4254"/><circle cx="1637.800" cy="1063.800" r="1.500" fill="#3a4254"/><circle cx="1634" cy="1072" r="1.500" fill="#3a4254"/><path d="M1630.300 1064.500l3.700 4.500v3M1637.800 1064.500l-3.800 4.500" fill="none" stroke="#3a4254" stroke-width="1.200"/></svg>
<div class="t" style="left:1649.10px;top:1060px;letter-spacing:-0.130px;">master [7]</div>
<div class="t" style="left:1722.90px;top:1060px;letter-spacing:-0.558px;">Line 9, Col 22</div>
<div class="t" style="left:1814.50px;top:1060px;letter-spacing:-1.291px;">UTF-8</div>
<div class="t" style="left:1863.00px;top:1060px;letter-spacing:-2.662px;">LF</div>
<div class="t" style="left:1891.90px;top:1060px;letter-spacing:-2.769px;">RW</div>
</div>
</body></html>
